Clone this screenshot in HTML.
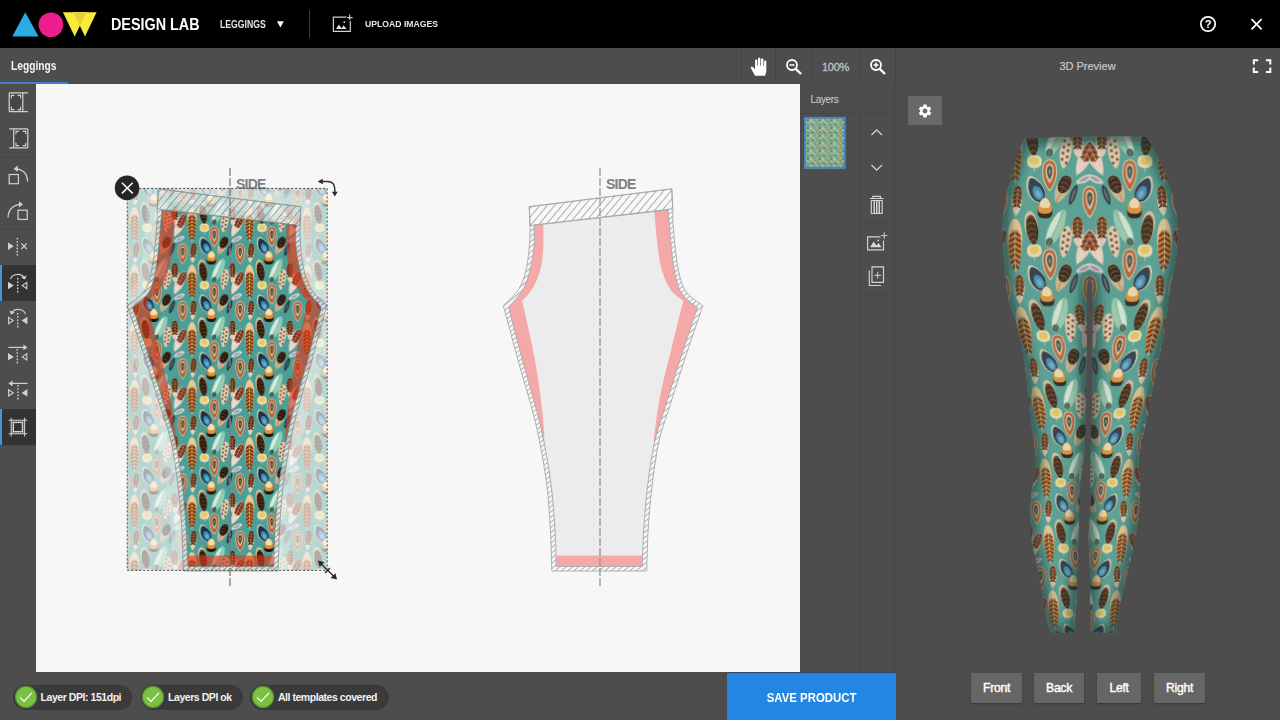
<!DOCTYPE html>
<html lang="en"><head><meta charset="utf-8"><title>Design Lab - Leggings</title>
<style>
*{box-sizing:border-box;margin:0;padding:0}
html,body{width:1280px;height:720px;overflow:hidden;background:#4d4d4d;font-family:"Liberation Sans",sans-serif;color:#fff}
.abs{position:absolute}
.sx{transform-origin:0 50%}
#top{left:0;top:0;width:1280px;height:48px;background:#000}
#tabs{left:0;top:48px;width:1280px;height:36px;background:#4d4d4d}
#tab1{left:0;top:0;width:68px;height:36px;font-size:12px;font-weight:bold;line-height:37px;padding-left:11px;color:#f4f4f4}
#tab1 span{display:inline-block;transform:scaleX(.853);transform-origin:0 50%}
#tab1 b{position:absolute;left:0;top:33.5px;width:68px;height:2.5px;background:#3b82c8}
#tools{left:0;top:84px;width:36px;height:588px;background:#4d4d4d}
.tb{position:absolute;left:0;width:36px;height:36px}
.tb.sel{background:#333;border-left:2px solid #4596dc}
.tb svg{position:absolute;left:0;top:0}
#canvas{left:36px;top:84px;width:764px;height:588px;background:#f7f7f7}
#layers{left:800px;top:84px;width:95px;height:588px;background:#4d4d4d;border-right:1px solid #434343}
#p3d{left:895px;top:84px;width:385px;height:636px;background:#4d4d4d}
#bottom{left:0;top:672px;width:896px;height:48px;background:transparent;z-index:3}
.pill{position:absolute;top:12.8px;height:25px;border-radius:12.5px;background:#3a3a3a;font-size:10.5px;font-weight:bold;line-height:25.4px;padding-left:27.6px;letter-spacing:-.45px;color:#f2f2f2;white-space:nowrap}
.pill i{position:absolute;left:1.5px;top:1.5px;width:22px;height:22px;border-radius:11px;background:#7ac143;box-shadow:inset 0 0 0 1px rgba(60,110,30,.55)}
.pill svg{position:absolute;left:1.5px;top:1.5px}
#save{left:726.7px;top:.6px;width:169.3px;height:47.4px;background:#2286e2;font-size:12.6px;font-weight:bold;text-align:center;line-height:50.8px;color:#fff;z-index:3;box-shadow:0 -1px 0 rgba(20,60,110,.35)}
#save span{display:inline-block;transform:scaleX(.904)}
.vb{position:absolute;top:588.5px;height:30px;background:#666;font-size:12.2px;line-height:31px;text-align:center;color:#fff;letter-spacing:-.3px;-webkit-text-stroke:.4px #fff;box-shadow:0 1px 1.5px rgba(0,0,0,.3)}
.tsep{position:absolute;top:0;width:1px;height:36px;background:#454545}
</style></head><body>
<svg width="0" height="0" style="position:absolute"><defs>
<g id="tileg"><rect width="345" height="345" fill="#4b9f96"/><g transform="translate(-11,73) rotate(0)"><path d="M0,-62.0 C22.9,-62.0 28.6,-39.7 28.6,-12.4 C28.6,28.5 2.9,62.0 0,62.0 C-2.9,62.0 -28.6,28.5 -28.6,-12.4 C-28.6,-39.7 -22.9,-62.0 0,-62.0Z" fill="#dcc7a6"/><path d="M0,-55.8 C19.7,-55.8 24.6,-35.7 24.6,-11.2 C24.6,25.7 2.5,55.8 0,55.8 C-2.5,55.8 -24.6,25.7 -24.6,-11.2 C-24.6,-35.7 -19.7,-55.8 0,-55.8Z" fill="#b55c30" transform="translate(0,-1.2)"/><path d="M0,-38.4 C12.8,-38.4 16.0,-24.6 16.0,-7.7 C16.0,17.7 1.6,38.4 0,38.4 C-1.6,38.4 -16.0,17.7 -16.0,-7.7 C-16.0,-24.6 -12.8,-38.4 0,-38.4Z" fill="#dcbf98" transform="translate(0,-7.4)"/><path d="M0,-26.0 C8.2,-26.0 10.3,-16.7 10.3,-5.2 C10.3,12.0 1.0,26.0 0,26.0 C-1.0,26.0 -10.3,12.0 -10.3,-5.2 C-10.3,-16.7 -8.2,-26.0 0,-26.0Z" fill="#2c4f55" transform="translate(0,-11.2)"/><path d="M0,-11.2 C3.0,-11.2 3.7,-7.1 3.7,-2.2 C3.7,5.1 0.4,11.2 0,11.2 C-0.4,11.2 -3.7,5.1 -3.7,-2.2 C-3.7,-7.1 -3.0,-11.2 0,-11.2Z" fill="#c9783c" transform="translate(0,-12.4)"/></g><g transform="translate(-11,418) rotate(0)"><path d="M0,-62.0 C22.9,-62.0 28.6,-39.7 28.6,-12.4 C28.6,28.5 2.9,62.0 0,62.0 C-2.9,62.0 -28.6,28.5 -28.6,-12.4 C-28.6,-39.7 -22.9,-62.0 0,-62.0Z" fill="#dcc7a6"/><path d="M0,-55.8 C19.7,-55.8 24.6,-35.7 24.6,-11.2 C24.6,25.7 2.5,55.8 0,55.8 C-2.5,55.8 -24.6,25.7 -24.6,-11.2 C-24.6,-35.7 -19.7,-55.8 0,-55.8Z" fill="#b55c30" transform="translate(0,-1.2)"/><path d="M0,-38.4 C12.8,-38.4 16.0,-24.6 16.0,-7.7 C16.0,17.7 1.6,38.4 0,38.4 C-1.6,38.4 -16.0,17.7 -16.0,-7.7 C-16.0,-24.6 -12.8,-38.4 0,-38.4Z" fill="#dcbf98" transform="translate(0,-7.4)"/><path d="M0,-26.0 C8.2,-26.0 10.3,-16.7 10.3,-5.2 C10.3,12.0 1.0,26.0 0,26.0 C-1.0,26.0 -10.3,12.0 -10.3,-5.2 C-10.3,-16.7 -8.2,-26.0 0,-26.0Z" fill="#2c4f55" transform="translate(0,-11.2)"/><path d="M0,-11.2 C3.0,-11.2 3.7,-7.1 3.7,-2.2 C3.7,5.1 0.4,11.2 0,11.2 C-0.4,11.2 -3.7,5.1 -3.7,-2.2 C-3.7,-7.1 -3.0,-11.2 0,-11.2Z" fill="#c9783c" transform="translate(0,-12.4)"/></g><g transform="translate(334,73) rotate(0)"><path d="M0,-62.0 C22.9,-62.0 28.6,-39.7 28.6,-12.4 C28.6,28.5 2.9,62.0 0,62.0 C-2.9,62.0 -28.6,28.5 -28.6,-12.4 C-28.6,-39.7 -22.9,-62.0 0,-62.0Z" fill="#dcc7a6"/><path d="M0,-55.8 C19.7,-55.8 24.6,-35.7 24.6,-11.2 C24.6,25.7 2.5,55.8 0,55.8 C-2.5,55.8 -24.6,25.7 -24.6,-11.2 C-24.6,-35.7 -19.7,-55.8 0,-55.8Z" fill="#b55c30" transform="translate(0,-1.2)"/><path d="M0,-38.4 C12.8,-38.4 16.0,-24.6 16.0,-7.7 C16.0,17.7 1.6,38.4 0,38.4 C-1.6,38.4 -16.0,17.7 -16.0,-7.7 C-16.0,-24.6 -12.8,-38.4 0,-38.4Z" fill="#dcbf98" transform="translate(0,-7.4)"/><path d="M0,-26.0 C8.2,-26.0 10.3,-16.7 10.3,-5.2 C10.3,12.0 1.0,26.0 0,26.0 C-1.0,26.0 -10.3,12.0 -10.3,-5.2 C-10.3,-16.7 -8.2,-26.0 0,-26.0Z" fill="#2c4f55" transform="translate(0,-11.2)"/><path d="M0,-11.2 C3.0,-11.2 3.7,-7.1 3.7,-2.2 C3.7,5.1 0.4,11.2 0,11.2 C-0.4,11.2 -3.7,5.1 -3.7,-2.2 C-3.7,-7.1 -3.0,-11.2 0,-11.2Z" fill="#c9783c" transform="translate(0,-12.4)"/></g><g transform="translate(334,418) rotate(0)"><path d="M0,-62.0 C22.9,-62.0 28.6,-39.7 28.6,-12.4 C28.6,28.5 2.9,62.0 0,62.0 C-2.9,62.0 -28.6,28.5 -28.6,-12.4 C-28.6,-39.7 -22.9,-62.0 0,-62.0Z" fill="#dcc7a6"/><path d="M0,-55.8 C19.7,-55.8 24.6,-35.7 24.6,-11.2 C24.6,25.7 2.5,55.8 0,55.8 C-2.5,55.8 -24.6,25.7 -24.6,-11.2 C-24.6,-35.7 -19.7,-55.8 0,-55.8Z" fill="#b55c30" transform="translate(0,-1.2)"/><path d="M0,-38.4 C12.8,-38.4 16.0,-24.6 16.0,-7.7 C16.0,17.7 1.6,38.4 0,38.4 C-1.6,38.4 -16.0,17.7 -16.0,-7.7 C-16.0,-24.6 -12.8,-38.4 0,-38.4Z" fill="#dcbf98" transform="translate(0,-7.4)"/><path d="M0,-26.0 C8.2,-26.0 10.3,-16.7 10.3,-5.2 C10.3,12.0 1.0,26.0 0,26.0 C-1.0,26.0 -10.3,12.0 -10.3,-5.2 C-10.3,-16.7 -8.2,-26.0 0,-26.0Z" fill="#2c4f55" transform="translate(0,-11.2)"/><path d="M0,-11.2 C3.0,-11.2 3.7,-7.1 3.7,-2.2 C3.7,5.1 0.4,11.2 0,11.2 C-0.4,11.2 -3.7,5.1 -3.7,-2.2 C-3.7,-7.1 -3.0,-11.2 0,-11.2Z" fill="#c9783c" transform="translate(0,-12.4)"/></g><g transform="translate(53,67) rotate(5)"><path d="M0,-58.8 C9.9,-58.8 19.8,-35.0 19.8,-5.9 C19.8,29.7 5.9,58.8 0,58.8 C-5.9,58.8 -19.8,29.7 -19.8,-5.9 C-19.8,-35.0 -9.9,-58.8 0,-58.8Z" fill="#e2d2bc"/><path d="M0,-42.4 C10.9,-42.4 18.2,-25.2 18.2,-4.2 C18.2,21.4 9.1,42.4 0,42.4 C-9.1,42.4 -18.2,21.4 -18.2,-4.2 C-18.2,-25.2 -10.9,-42.4 0,-42.4Z" fill="#8d4a22" transform="translate(0,-15.3)"/><path d="M-9.4,-42.1 L0,-52.1 L9.4,-42.1 M-13.5,-25.0 L0,-35.0 L13.5,-25.0 M-15.3,-7.9 L0,-17.9 L15.3,-7.9 M-15.6,9.1 L0,-0.9 L15.6,9.1 M-14.6,26.2 L0,16.2 L14.6,26.2" stroke="#331b0e" stroke-width="6" fill="none"/><path d="M0,-47.1V63.8" stroke="#d9c2a4" stroke-width="2"/></g><g transform="translate(53,412) rotate(5)"><path d="M0,-58.8 C9.9,-58.8 19.8,-35.0 19.8,-5.9 C19.8,29.7 5.9,58.8 0,58.8 C-5.9,58.8 -19.8,29.7 -19.8,-5.9 C-19.8,-35.0 -9.9,-58.8 0,-58.8Z" fill="#e2d2bc"/><path d="M0,-42.4 C10.9,-42.4 18.2,-25.2 18.2,-4.2 C18.2,21.4 9.1,42.4 0,42.4 C-9.1,42.4 -18.2,21.4 -18.2,-4.2 C-18.2,-25.2 -10.9,-42.4 0,-42.4Z" fill="#8d4a22" transform="translate(0,-15.3)"/><path d="M-9.4,-42.1 L0,-52.1 L9.4,-42.1 M-13.5,-25.0 L0,-35.0 L13.5,-25.0 M-15.3,-7.9 L0,-17.9 L15.3,-7.9 M-15.6,9.1 L0,-0.9 L15.6,9.1 M-14.6,26.2 L0,16.2 L14.6,26.2" stroke="#331b0e" stroke-width="6" fill="none"/><path d="M0,-47.1V63.8" stroke="#d9c2a4" stroke-width="2"/></g><g transform="translate(398,67) rotate(5)"><path d="M0,-58.8 C9.9,-58.8 19.8,-35.0 19.8,-5.9 C19.8,29.7 5.9,58.8 0,58.8 C-5.9,58.8 -19.8,29.7 -19.8,-5.9 C-19.8,-35.0 -9.9,-58.8 0,-58.8Z" fill="#e2d2bc"/><path d="M0,-42.4 C10.9,-42.4 18.2,-25.2 18.2,-4.2 C18.2,21.4 9.1,42.4 0,42.4 C-9.1,42.4 -18.2,21.4 -18.2,-4.2 C-18.2,-25.2 -10.9,-42.4 0,-42.4Z" fill="#8d4a22" transform="translate(0,-15.3)"/><path d="M-9.4,-42.1 L0,-52.1 L9.4,-42.1 M-13.5,-25.0 L0,-35.0 L13.5,-25.0 M-15.3,-7.9 L0,-17.9 L15.3,-7.9 M-15.6,9.1 L0,-0.9 L15.6,9.1 M-14.6,26.2 L0,16.2 L14.6,26.2" stroke="#331b0e" stroke-width="6" fill="none"/><path d="M0,-47.1V63.8" stroke="#d9c2a4" stroke-width="2"/></g><g transform="translate(398,412) rotate(5)"><path d="M0,-58.8 C9.9,-58.8 19.8,-35.0 19.8,-5.9 C19.8,29.7 5.9,58.8 0,58.8 C-5.9,58.8 -19.8,29.7 -19.8,-5.9 C-19.8,-35.0 -9.9,-58.8 0,-58.8Z" fill="#e2d2bc"/><path d="M0,-42.4 C10.9,-42.4 18.2,-25.2 18.2,-4.2 C18.2,21.4 9.1,42.4 0,42.4 C-9.1,42.4 -18.2,21.4 -18.2,-4.2 C-18.2,-25.2 -10.9,-42.4 0,-42.4Z" fill="#8d4a22" transform="translate(0,-15.3)"/><path d="M-9.4,-42.1 L0,-52.1 L9.4,-42.1 M-13.5,-25.0 L0,-35.0 L13.5,-25.0 M-15.3,-7.9 L0,-17.9 L15.3,-7.9 M-15.6,9.1 L0,-0.9 L15.6,9.1 M-14.6,26.2 L0,16.2 L14.6,26.2" stroke="#331b0e" stroke-width="6" fill="none"/><path d="M0,-47.1V63.8" stroke="#d9c2a4" stroke-width="2"/></g><g transform="translate(123,23) rotate(-25)"><path d="M0,-55.1 C9.6,-55.1 31.9,-26.6 31.9,8.3 C31.9,34.0 16.0,55.1 0,55.1 C-16.0,55.1 -31.9,34.0 -31.9,8.3 C-31.9,-26.6 -9.6,-55.1 0,-55.1Z" fill="#d6cfbc"/><path d="M0,-49.6 C8.6,-49.6 28.7,-23.9 28.7,7.4 C28.7,30.6 14.4,49.6 0,49.6 C-14.4,49.6 -28.7,30.6 -28.7,7.4 C-28.7,-23.9 -8.6,-49.6 0,-49.6Z" fill="#1b3142" transform="translate(1.9,4.4)"/><path d="M0,-28.7 C9.3,-28.7 18.5,-14.5 18.5,2.9 C18.5,17.1 11.1,28.7 0,28.7 C-11.1,28.7 -18.5,17.1 -18.5,2.9 C-18.5,-14.5 -9.3,-28.7 0,-28.7Z" fill="#3a86b9" transform="translate(2.6,17.6)"/><path d="M0,-15.4 C4.8,-15.4 9.6,-7.8 9.6,1.5 C9.6,9.2 5.7,15.4 0,15.4 C-5.7,15.4 -9.6,9.2 -9.6,1.5 C-9.6,-7.8 -4.8,-15.4 0,-15.4Z" fill="#5fb0c8" transform="translate(2.6,22.0)"/></g><g transform="translate(123,368) rotate(-25)"><path d="M0,-55.1 C9.6,-55.1 31.9,-26.6 31.9,8.3 C31.9,34.0 16.0,55.1 0,55.1 C-16.0,55.1 -31.9,34.0 -31.9,8.3 C-31.9,-26.6 -9.6,-55.1 0,-55.1Z" fill="#d6cfbc"/><path d="M0,-49.6 C8.6,-49.6 28.7,-23.9 28.7,7.4 C28.7,30.6 14.4,49.6 0,49.6 C-14.4,49.6 -28.7,30.6 -28.7,7.4 C-28.7,-23.9 -8.6,-49.6 0,-49.6Z" fill="#1b3142" transform="translate(1.9,4.4)"/><path d="M0,-28.7 C9.3,-28.7 18.5,-14.5 18.5,2.9 C18.5,17.1 11.1,28.7 0,28.7 C-11.1,28.7 -18.5,17.1 -18.5,2.9 C-18.5,-14.5 -9.3,-28.7 0,-28.7Z" fill="#3a86b9" transform="translate(2.6,17.6)"/><path d="M0,-15.4 C4.8,-15.4 9.6,-7.8 9.6,1.5 C9.6,9.2 5.7,15.4 0,15.4 C-5.7,15.4 -9.6,9.2 -9.6,1.5 C-9.6,-7.8 -4.8,-15.4 0,-15.4Z" fill="#5fb0c8" transform="translate(2.6,22.0)"/></g><g transform="translate(179,-30) rotate(0)"><path d="M0,-62.0 C22.9,-62.0 28.6,-39.7 28.6,-12.4 C28.6,28.5 2.9,62.0 0,62.0 C-2.9,62.0 -28.6,28.5 -28.6,-12.4 C-28.6,-39.7 -22.9,-62.0 0,-62.0Z" fill="#dcc7a6"/><path d="M0,-55.8 C19.7,-55.8 24.6,-35.7 24.6,-11.2 C24.6,25.7 2.5,55.8 0,55.8 C-2.5,55.8 -24.6,25.7 -24.6,-11.2 C-24.6,-35.7 -19.7,-55.8 0,-55.8Z" fill="#b55c30" transform="translate(0,-1.2)"/><path d="M0,-38.4 C12.8,-38.4 16.0,-24.6 16.0,-7.7 C16.0,17.7 1.6,38.4 0,38.4 C-1.6,38.4 -16.0,17.7 -16.0,-7.7 C-16.0,-24.6 -12.8,-38.4 0,-38.4Z" fill="#dcbf98" transform="translate(0,-7.4)"/><path d="M0,-26.0 C8.2,-26.0 10.3,-16.7 10.3,-5.2 C10.3,12.0 1.0,26.0 0,26.0 C-1.0,26.0 -10.3,12.0 -10.3,-5.2 C-10.3,-16.7 -8.2,-26.0 0,-26.0Z" fill="#2c4f55" transform="translate(0,-11.2)"/><path d="M0,-11.2 C3.0,-11.2 3.7,-7.1 3.7,-2.2 C3.7,5.1 0.4,11.2 0,11.2 C-0.4,11.2 -3.7,5.1 -3.7,-2.2 C-3.7,-7.1 -3.0,-11.2 0,-11.2Z" fill="#c9783c" transform="translate(0,-12.4)"/></g><g transform="translate(179,315) rotate(0)"><path d="M0,-62.0 C22.9,-62.0 28.6,-39.7 28.6,-12.4 C28.6,28.5 2.9,62.0 0,62.0 C-2.9,62.0 -28.6,28.5 -28.6,-12.4 C-28.6,-39.7 -22.9,-62.0 0,-62.0Z" fill="#dcc7a6"/><path d="M0,-55.8 C19.7,-55.8 24.6,-35.7 24.6,-11.2 C24.6,25.7 2.5,55.8 0,55.8 C-2.5,55.8 -24.6,25.7 -24.6,-11.2 C-24.6,-35.7 -19.7,-55.8 0,-55.8Z" fill="#b55c30" transform="translate(0,-1.2)"/><path d="M0,-38.4 C12.8,-38.4 16.0,-24.6 16.0,-7.7 C16.0,17.7 1.6,38.4 0,38.4 C-1.6,38.4 -16.0,17.7 -16.0,-7.7 C-16.0,-24.6 -12.8,-38.4 0,-38.4Z" fill="#dcbf98" transform="translate(0,-7.4)"/><path d="M0,-26.0 C8.2,-26.0 10.3,-16.7 10.3,-5.2 C10.3,12.0 1.0,26.0 0,26.0 C-1.0,26.0 -10.3,12.0 -10.3,-5.2 C-10.3,-16.7 -8.2,-26.0 0,-26.0Z" fill="#2c4f55" transform="translate(0,-11.2)"/><path d="M0,-11.2 C3.0,-11.2 3.7,-7.1 3.7,-2.2 C3.7,5.1 0.4,11.2 0,11.2 C-0.4,11.2 -3.7,5.1 -3.7,-2.2 C-3.7,-7.1 -3.0,-11.2 0,-11.2Z" fill="#c9783c" transform="translate(0,-12.4)"/></g><g transform="translate(228,23) rotate(25)"><path d="M0,-58.8 C15.5,-58.8 25.9,-35.0 25.9,-5.9 C25.9,29.7 5.2,58.8 0,58.8 C-5.2,58.8 -25.9,29.7 -25.9,-5.9 C-25.9,-35.0 -15.5,-58.8 0,-58.8Z" fill="#cfb58f"/><path d="M0,-36.5 C16.3,-36.5 23.3,-20.1 23.3,0.0 C23.3,20.1 14.0,36.5 0,36.5 C-14.0,36.5 -23.3,20.1 -23.3,0.0 C-23.3,-20.1 -16.3,-36.5 0,-36.5Z" fill="#24160f" transform="translate(0,-20.0)"/><path d="M-11.8,-40.7 L0,-48.7 L11.8,-40.7 M-16.4,-21.3 L0,-29.3 L16.4,-21.3 M-18.1,-1.9 L0,-9.9 L18.1,-1.9" stroke="#6a4526" stroke-width="4" fill="none"/><path d="M0,-11.8V63.8" stroke="#8a6a4a" stroke-width="2"/></g><g transform="translate(228,368) rotate(25)"><path d="M0,-58.8 C15.5,-58.8 25.9,-35.0 25.9,-5.9 C25.9,29.7 5.2,58.8 0,58.8 C-5.2,58.8 -25.9,29.7 -25.9,-5.9 C-25.9,-35.0 -15.5,-58.8 0,-58.8Z" fill="#cfb58f"/><path d="M0,-36.5 C16.3,-36.5 23.3,-20.1 23.3,0.0 C23.3,20.1 14.0,36.5 0,36.5 C-14.0,36.5 -23.3,20.1 -23.3,0.0 C-23.3,-20.1 -16.3,-36.5 0,-36.5Z" fill="#24160f" transform="translate(0,-20.0)"/><path d="M-11.8,-40.7 L0,-48.7 L11.8,-40.7 M-16.4,-21.3 L0,-29.3 L16.4,-21.3 M-18.1,-1.9 L0,-9.9 L18.1,-1.9" stroke="#6a4526" stroke-width="4" fill="none"/><path d="M0,-11.8V63.8" stroke="#8a6a4a" stroke-width="2"/></g><g transform="translate(161,96) rotate(0)"><path d="M0,-40.3 C7.2,-40.3 28.6,-16.7 28.6,12.1 C28.6,27.6 25.7,40.3 0,40.3 C-25.7,40.3 -28.6,27.6 -28.6,12.1 C-28.6,-16.7 -7.2,-40.3 0,-40.3Z" fill="#1c120b"/><path d="M0,-31.4 C6.9,-31.4 27.5,-12.3 27.5,11.0 C27.5,22.2 24.7,31.4 0,31.4 C-24.7,31.4 -27.5,22.2 -27.5,11.0 C-27.5,-12.3 -6.9,-31.4 0,-31.4Z" fill="#dc9136" transform="translate(0,-8.9)"/><path d="M0,-20.1 C5.0,-20.1 20.0,-7.9 20.0,7.0 C20.0,14.2 18.0,20.1 0,20.1 C-18.0,20.1 -20.0,14.2 -20.0,7.0 C-20.0,-7.9 -5.0,-20.1 0,-20.1Z" fill="#f2dfb0" transform="translate(0,-19.3)"/></g><g transform="translate(-32,-15) rotate(65)"><path d="M0,-35.0 C6.6,-35.0 13.2,-19.2 13.2,0.0 C13.2,19.2 4.0,35.0 0,35.0 C-4.0,35.0 -13.2,19.2 -13.2,0.0 C-13.2,-19.2 -6.6,-35.0 0,-35.0Z" fill="#dcd6d6"/><path d="M0,-21.0 C3.3,-21.0 6.6,-11.5 6.6,0.0 C6.6,11.5 2.0,21.0 0,21.0 C-2.0,21.0 -6.6,11.5 -6.6,0.0 C-6.6,-11.5 -3.3,-21.0 0,-21.0Z" fill="#a79aa6"/></g><g transform="translate(-32,330) rotate(65)"><path d="M0,-35.0 C6.6,-35.0 13.2,-19.2 13.2,0.0 C13.2,19.2 4.0,35.0 0,35.0 C-4.0,35.0 -13.2,19.2 -13.2,0.0 C-13.2,-19.2 -6.6,-35.0 0,-35.0Z" fill="#dcd6d6"/><path d="M0,-21.0 C3.3,-21.0 6.6,-11.5 6.6,0.0 C6.6,11.5 2.0,21.0 0,21.0 C-2.0,21.0 -6.6,11.5 -6.6,0.0 C-6.6,-11.5 -3.3,-21.0 0,-21.0Z" fill="#a79aa6"/></g><g transform="translate(313,-15) rotate(65)"><path d="M0,-35.0 C6.6,-35.0 13.2,-19.2 13.2,0.0 C13.2,19.2 4.0,35.0 0,35.0 C-4.0,35.0 -13.2,19.2 -13.2,0.0 C-13.2,-19.2 -6.6,-35.0 0,-35.0Z" fill="#dcd6d6"/><path d="M0,-21.0 C3.3,-21.0 6.6,-11.5 6.6,0.0 C6.6,11.5 2.0,21.0 0,21.0 C-2.0,21.0 -6.6,11.5 -6.6,0.0 C-6.6,-11.5 -3.3,-21.0 0,-21.0Z" fill="#a79aa6"/></g><g transform="translate(313,330) rotate(65)"><path d="M0,-35.0 C6.6,-35.0 13.2,-19.2 13.2,0.0 C13.2,19.2 4.0,35.0 0,35.0 C-4.0,35.0 -13.2,19.2 -13.2,0.0 C-13.2,-19.2 -6.6,-35.0 0,-35.0Z" fill="#dcd6d6"/><path d="M0,-21.0 C3.3,-21.0 6.6,-11.5 6.6,0.0 C6.6,11.5 2.0,21.0 0,21.0 C-2.0,21.0 -6.6,11.5 -6.6,0.0 C-6.6,-11.5 -3.3,-21.0 0,-21.0Z" fill="#a79aa6"/></g><g transform="translate(270,46) rotate(20)"><path d="M0,-41.3 C5.8,-41.3 11.6,-22.7 11.6,0.0 C11.6,22.7 3.5,41.3 0,41.3 C-3.5,41.3 -11.6,22.7 -11.6,0.0 C-11.6,-22.7 -5.8,-41.3 0,-41.3Z" fill="#222b36"/><path d="M0,-28.9 C2.3,-28.9 4.6,-15.9 4.6,0.0 C4.6,15.9 1.4,28.9 0,28.9 C-1.4,28.9 -4.6,15.9 -4.6,0.0 C-4.6,-15.9 -2.3,-28.9 0,-28.9Z" fill="#5a6470"/></g><g transform="translate(270,391) rotate(20)"><path d="M0,-41.3 C5.8,-41.3 11.6,-22.7 11.6,0.0 C11.6,22.7 3.5,41.3 0,41.3 C-3.5,41.3 -11.6,22.7 -11.6,0.0 C-11.6,-22.7 -5.8,-41.3 0,-41.3Z" fill="#222b36"/><path d="M0,-28.9 C2.3,-28.9 4.6,-15.9 4.6,0.0 C4.6,15.9 1.4,28.9 0,28.9 C-1.4,28.9 -4.6,15.9 -4.6,0.0 C-4.6,-15.9 -2.3,-28.9 0,-28.9Z" fill="#5a6470"/></g><g transform="translate(109,175) rotate(-8)"><path d="M0,-67.8 C15.5,-67.8 25.9,-40.4 25.9,-6.8 C25.9,34.3 5.2,67.8 0,67.8 C-5.2,67.8 -25.9,34.3 -25.9,-6.8 C-25.9,-40.4 -15.5,-67.8 0,-67.8Z" fill="#d4c0a0"/><path d="M0,-58.3 C13.6,-58.3 22.7,-32.1 22.7,0.0 C22.7,32.1 6.8,58.3 0,58.3 C-6.8,58.3 -22.7,32.1 -22.7,0.0 C-22.7,-32.1 -13.6,-58.3 0,-58.3Z" fill="#2d1b10" transform="translate(2.1,6.8)"/><path d="M-14.6,-35.7 L0,-45.7 L14.6,-35.7 M-17.5,-13.7 L0,-23.7 L17.5,-13.7 M-18.2,8.4 L0,-1.6 L18.2,8.4 M-16.9,30.4 L0,20.4 L16.9,30.4 M-13.0,52.5 L0,42.5 L13.0,52.5" stroke="#6b4424" stroke-width="5" fill="none"/></g><g transform="translate(202,175) rotate(25)"><path d="M0,-80.6 C11.0,-80.6 27.5,-44.3 27.5,0.0 C27.5,44.3 8.2,80.6 0,80.6 C-8.2,80.6 -27.5,44.3 -27.5,0.0 C-27.5,-44.3 -11.0,-80.6 0,-80.6Z" fill="#93cdb2"/><path d="M0,-66.1 C4.6,-66.1 11.6,-36.3 11.6,0.0 C11.6,36.3 3.5,66.1 0,66.1 C-3.5,66.1 -11.6,36.3 -11.6,0.0 C-11.6,-36.3 -4.6,-66.1 0,-66.1Z" fill="#d4ecdf" transform="translate(-11.0,0)"/><path d="M0,-17.7 C6.9,-17.7 13.8,-9.7 13.8,0.0 C13.8,9.7 4.1,17.7 0,17.7 C-4.1,17.7 -13.8,9.7 -13.8,0.0 C-13.8,-9.7 -6.9,-17.7 0,-17.7Z" fill="#3f5a48" transform="translate(0,58.0)"/><path d="M0,-80.6V86.6" stroke="#5f9580" stroke-width="2"/></g><g transform="translate(45,-106) rotate(0)"><path d="M0,-101.8 C14.3,-101.8 28.6,-67.4 28.6,-25.4 C28.6,44.5 7.2,101.8 0,101.8 C-7.2,101.8 -28.6,44.5 -28.6,-25.4 C-28.6,-67.4 -14.3,-101.8 0,-101.8Z" fill="#e6c993"/><path d="M0,-79.4 C18.0,-79.4 25.7,-50.8 25.7,-15.9 C25.7,36.5 6.4,79.4 0,79.4 C-6.4,79.4 -25.7,36.5 -25.7,-15.9 C-25.7,-50.8 -18.0,-79.4 0,-79.4Z" fill="#c8722c" transform="translate(0,20.4)"/><path d="M-20.8,-33.7 L0,-47.7 L20.8,-33.7 M-22.2,-12.7 L0,-26.7 L22.2,-12.7 M-22.6,8.4 L0,-5.6 L22.6,8.4 M-22.1,29.4 L0,15.4 L22.1,29.4 M-20.5,50.4 L0,36.4 L20.5,50.4 M-17.5,71.4 L0,57.4 L17.5,71.4 M-12.3,92.5 L0,78.5 L12.3,92.5" stroke="#43220e" stroke-width="7" fill="none"/><path d="M0,-91.6V107.8" stroke="#f3e2c2" stroke-width="2.5"/></g><g transform="translate(45,239) rotate(0)"><path d="M0,-101.8 C14.3,-101.8 28.6,-67.4 28.6,-25.4 C28.6,44.5 7.2,101.8 0,101.8 C-7.2,101.8 -28.6,44.5 -28.6,-25.4 C-28.6,-67.4 -14.3,-101.8 0,-101.8Z" fill="#e6c993"/><path d="M0,-79.4 C18.0,-79.4 25.7,-50.8 25.7,-15.9 C25.7,36.5 6.4,79.4 0,79.4 C-6.4,79.4 -25.7,36.5 -25.7,-15.9 C-25.7,-50.8 -18.0,-79.4 0,-79.4Z" fill="#c8722c" transform="translate(0,20.4)"/><path d="M-20.8,-33.7 L0,-47.7 L20.8,-33.7 M-22.2,-12.7 L0,-26.7 L22.2,-12.7 M-22.6,8.4 L0,-5.6 L22.6,8.4 M-22.1,29.4 L0,15.4 L22.1,29.4 M-20.5,50.4 L0,36.4 L20.5,50.4 M-17.5,71.4 L0,57.4 L17.5,71.4 M-12.3,92.5 L0,78.5 L12.3,92.5" stroke="#43220e" stroke-width="7" fill="none"/><path d="M0,-91.6V107.8" stroke="#f3e2c2" stroke-width="2.5"/></g><g transform="translate(390,-106) rotate(0)"><path d="M0,-101.8 C14.3,-101.8 28.6,-67.4 28.6,-25.4 C28.6,44.5 7.2,101.8 0,101.8 C-7.2,101.8 -28.6,44.5 -28.6,-25.4 C-28.6,-67.4 -14.3,-101.8 0,-101.8Z" fill="#e6c993"/><path d="M0,-79.4 C18.0,-79.4 25.7,-50.8 25.7,-15.9 C25.7,36.5 6.4,79.4 0,79.4 C-6.4,79.4 -25.7,36.5 -25.7,-15.9 C-25.7,-50.8 -18.0,-79.4 0,-79.4Z" fill="#c8722c" transform="translate(0,20.4)"/><path d="M-20.8,-33.7 L0,-47.7 L20.8,-33.7 M-22.2,-12.7 L0,-26.7 L22.2,-12.7 M-22.6,8.4 L0,-5.6 L22.6,8.4 M-22.1,29.4 L0,15.4 L22.1,29.4 M-20.5,50.4 L0,36.4 L20.5,50.4 M-17.5,71.4 L0,57.4 L17.5,71.4 M-12.3,92.5 L0,78.5 L12.3,92.5" stroke="#43220e" stroke-width="7" fill="none"/><path d="M0,-91.6V107.8" stroke="#f3e2c2" stroke-width="2.5"/></g><g transform="translate(390,239) rotate(0)"><path d="M0,-101.8 C14.3,-101.8 28.6,-67.4 28.6,-25.4 C28.6,44.5 7.2,101.8 0,101.8 C-7.2,101.8 -28.6,44.5 -28.6,-25.4 C-28.6,-67.4 -14.3,-101.8 0,-101.8Z" fill="#e6c993"/><path d="M0,-79.4 C18.0,-79.4 25.7,-50.8 25.7,-15.9 C25.7,36.5 6.4,79.4 0,79.4 C-6.4,79.4 -25.7,36.5 -25.7,-15.9 C-25.7,-50.8 -18.0,-79.4 0,-79.4Z" fill="#c8722c" transform="translate(0,20.4)"/><path d="M-20.8,-33.7 L0,-47.7 L20.8,-33.7 M-22.2,-12.7 L0,-26.7 L22.2,-12.7 M-22.6,8.4 L0,-5.6 L22.6,8.4 M-22.1,29.4 L0,15.4 L22.1,29.4 M-20.5,50.4 L0,36.4 L20.5,50.4 M-17.5,71.4 L0,57.4 L17.5,71.4 M-12.3,92.5 L0,78.5 L12.3,92.5" stroke="#43220e" stroke-width="7" fill="none"/><path d="M0,-91.6V107.8" stroke="#f3e2c2" stroke-width="2.5"/></g><g transform="translate(-58,186) rotate(0)"><path d="M0,-58.8 C11.3,-58.8 22.6,-35.0 22.6,-5.9 C22.6,29.7 6.8,58.8 0,58.8 C-6.8,58.8 -22.6,29.7 -22.6,-5.9 C-22.6,-35.0 -11.3,-58.8 0,-58.8Z" fill="#e2d2bc"/><path d="M0,-42.4 C12.4,-42.4 20.7,-25.2 20.7,-4.2 C20.7,21.4 10.4,42.4 0,42.4 C-10.4,42.4 -20.7,21.4 -20.7,-4.2 C-20.7,-25.2 -12.4,-42.4 0,-42.4Z" fill="#8d4a22" transform="translate(0,-15.3)"/><path d="M-10.7,-42.1 L0,-52.1 L10.7,-42.1 M-15.4,-25.0 L0,-35.0 L15.4,-25.0 M-17.4,-7.9 L0,-17.9 L17.4,-7.9 M-17.8,9.1 L0,-0.9 L17.8,9.1 M-16.7,26.2 L0,16.2 L16.7,26.2" stroke="#331b0e" stroke-width="6" fill="none"/><path d="M0,-47.1V63.8" stroke="#d9c2a4" stroke-width="2"/></g><g transform="translate(287,186) rotate(0)"><path d="M0,-58.8 C11.3,-58.8 22.6,-35.0 22.6,-5.9 C22.6,29.7 6.8,58.8 0,58.8 C-6.8,58.8 -22.6,29.7 -22.6,-5.9 C-22.6,-35.0 -11.3,-58.8 0,-58.8Z" fill="#e2d2bc"/><path d="M0,-42.4 C12.4,-42.4 20.7,-25.2 20.7,-4.2 C20.7,21.4 10.4,42.4 0,42.4 C-10.4,42.4 -20.7,21.4 -20.7,-4.2 C-20.7,-25.2 -12.4,-42.4 0,-42.4Z" fill="#8d4a22" transform="translate(0,-15.3)"/><path d="M-10.7,-42.1 L0,-52.1 L10.7,-42.1 M-15.4,-25.0 L0,-35.0 L15.4,-25.0 M-17.4,-7.9 L0,-17.9 L17.4,-7.9 M-17.8,9.1 L0,-0.9 L17.8,9.1 M-16.7,26.2 L0,16.2 L16.7,26.2" stroke="#331b0e" stroke-width="6" fill="none"/><path d="M0,-47.1V63.8" stroke="#d9c2a4" stroke-width="2"/></g><g transform="translate(-29,245) rotate(25)"><path d="M0,-74.2 C12.9,-74.2 25.9,-44.1 25.9,-7.4 C25.9,37.5 5.2,74.2 0,74.2 C-5.2,74.2 -25.9,37.5 -25.9,-7.4 C-25.9,-44.1 -12.9,-74.2 0,-74.2Z" fill="#e8d6c8"/><path d="M0,-44.5 C12.4,-44.5 20.7,-24.5 20.7,0.0 C20.7,24.5 10.3,44.5 0,44.5 C-10.3,44.5 -20.7,24.5 -20.7,0.0 C-20.7,-24.5 -12.4,-44.5 0,-44.5Z" fill="#9a4425" transform="translate(2.6,-26.7)"/><path d="M-10.9,-54.4 L0,-64.4 L10.9,-54.4 M-15.5,-33.6 L0,-43.6 L15.5,-33.6 M-17.7,-12.8 L0,-22.8 L17.7,-12.8 M-18.2,8.0 L0,-2.0 L18.2,8.0" stroke="#3d1d10" stroke-width="5" fill="none"/><path d="M0,-66.8V79.2" stroke="#f8efe6" stroke-width="2"/></g><g transform="translate(316,245) rotate(25)"><path d="M0,-74.2 C12.9,-74.2 25.9,-44.1 25.9,-7.4 C25.9,37.5 5.2,74.2 0,74.2 C-5.2,74.2 -25.9,37.5 -25.9,-7.4 C-25.9,-44.1 -12.9,-74.2 0,-74.2Z" fill="#e8d6c8"/><path d="M0,-44.5 C12.4,-44.5 20.7,-24.5 20.7,0.0 C20.7,24.5 10.3,44.5 0,44.5 C-10.3,44.5 -20.7,24.5 -20.7,0.0 C-20.7,-24.5 -12.4,-44.5 0,-44.5Z" fill="#9a4425" transform="translate(2.6,-26.7)"/><path d="M-10.9,-54.4 L0,-64.4 L10.9,-54.4 M-15.5,-33.6 L0,-43.6 L15.5,-33.6 M-17.7,-12.8 L0,-22.8 L17.7,-12.8 M-18.2,8.0 L0,-2.0 L18.2,8.0" stroke="#3d1d10" stroke-width="5" fill="none"/><path d="M0,-66.8V79.2" stroke="#f8efe6" stroke-width="2"/></g><g transform="translate(240,227) rotate(8)"><path d="M0,-62.0 C13.5,-62.0 22.6,-36.9 22.6,-6.2 C22.6,31.3 6.8,62.0 0,62.0 C-6.8,62.0 -22.6,31.3 -22.6,-6.2 C-22.6,-36.9 -13.5,-62.0 0,-62.0Z" fill="#e0cfb6"/><g fill="#774526"><circle cx="-9.0" cy="-44.6" r="5.9"/><circle cx="9.0" cy="-32.6" r="5.9"/><circle cx="-9.0" cy="-20.6" r="5.9"/><circle cx="9.0" cy="-8.5" r="5.9"/><circle cx="-9.0" cy="3.5" r="5.9"/><circle cx="9.0" cy="15.6" r="5.9"/><circle cx="-9.0" cy="27.6" r="5.9"/><circle cx="9.0" cy="39.7" r="5.9"/></g></g><g transform="translate(120,262) rotate(0)"><path d="M0,-24.9 C25.7,-24.9 28.6,-12.6 28.6,2.5 C28.6,14.8 20.0,24.9 0,24.9 C-20.0,24.9 -28.6,14.8 -28.6,2.5 C-28.6,-12.6 -25.7,-24.9 0,-24.9Z" fill="#ecdfae"/><path d="M0,-14.9 C16.0,-14.9 17.7,-7.5 17.7,1.5 C17.7,8.9 12.4,14.9 0,14.9 C-12.4,14.9 -17.7,8.9 -17.7,1.5 C-17.7,-7.5 -16.0,-14.9 0,-14.9Z" fill="#e6c95f" transform="translate(0,-2.5)"/><path d="M0,14.9V38.9" stroke="#efe3c0" stroke-width="2.5"/></g></g>
<pattern id="feath" width="345" height="345" patternUnits="userSpaceOnUse" patternTransform="translate(127,184.2) scale(0.16667,0.16667)"><use href="#tileg"/></pattern>
<pattern id="feathT" width="345" height="345" patternUnits="userSpaceOnUse" patternTransform="translate(804,116.5) scale(0.034,0.02247)"><use href="#tileg"/></pattern>
<pattern id="h1" width="5.7" height="5.7" patternUnits="userSpaceOnUse" patternTransform="rotate(-50)"><rect width="5.7" height=".9" fill="#a6a6a6"/></pattern>
<pattern id="h2" width="4" height="4" patternUnits="userSpaceOnUse" patternTransform="rotate(-40)"><rect width="4" height=".9" fill="#a6a6a6"/></pattern>
<clipPath id="cInner"><path d="M68.2,210.0 C68.4,212.8 68.6,217.2 69.5,226.7 C70.4,236.1 71.6,255.6 73.6,266.7 C75.6,277.8 77.4,286.2 81.4,293.0 C85.4,299.8 94.7,305.2 97.4,307.6 C94.7,315.8 86.3,340.4 81.0,356.7 C75.7,373.0 69.9,391.7 65.6,405.6 C61.3,419.5 58.0,426.9 55.0,440.0 C52.0,453.1 49.7,469.2 47.8,484.0 C45.9,498.8 44.7,515.3 43.8,529.0 C42.9,542.7 42.5,560.2 42.2,566.4 L-43.8,566.4 C-44.0,560.2 -44.1,542.7 -45.0,529.0 C-45.9,515.3 -47.1,498.8 -49.0,484.0 C-50.9,469.2 -53.8,453.1 -56.4,440.0 C-59.0,426.9 -61.2,418.4 -64.6,405.6 C-68.0,392.8 -72.2,379.4 -76.7,363.0 C-81.2,346.6 -88.9,316.6 -91.3,307.3 C-88.9,304.2 -80.4,295.7 -76.7,289.0 C-73.0,282.3 -71.0,274.3 -69.2,267.0 C-67.4,259.7 -66.3,252.0 -65.8,245.0 C-65.3,238.0 -66.0,228.5 -66.0,225.2Z"/></clipPath>
<clipPath id="cOuter"><path d="M71.8,188.9 C72.0,192.2 72.5,205.5 72.7,208.8 C72.8,211.8 72.5,217.0 73.3,226.7 C74.1,236.3 75.8,256.0 77.8,266.7 C79.8,277.4 81.4,284.5 85.6,291.0 C89.8,297.5 100.0,303.2 102.9,305.6 C100.0,314.1 91.1,340.0 85.6,356.7 C80.1,373.4 74.4,391.7 70.0,405.6 C65.6,419.5 62.3,426.9 59.3,440.0 C56.3,453.1 54.1,469.6 52.2,484.4 C50.4,499.2 49.1,514.6 48.2,529.0 C47.3,543.4 47.0,564.0 46.7,571.0 L-48.2,571.0 C-48.4,564.0 -48.8,543.4 -49.6,529.0 C-50.5,514.6 -51.4,499.2 -53.3,484.4 C-55.1,469.6 -58.1,453.1 -60.7,440.0 C-63.3,426.9 -65.6,418.4 -69.0,405.6 C-72.4,392.8 -76.5,380.0 -81.1,363.3 C-85.7,346.6 -94.1,315.2 -96.7,305.6 C-94.1,302.8 -85.0,295.4 -81.1,288.9 C-77.2,282.4 -75.1,275.6 -73.3,266.7 C-71.5,257.8 -70.4,245.6 -70.0,235.6 C-69.6,225.6 -70.6,211.5 -70.7,206.7Z"/></clipPath>
<g id="garment">
 <path d="M71.8,188.9 C72.0,192.2 72.5,205.5 72.7,208.8 C72.8,211.8 72.5,217.0 73.3,226.7 C74.1,236.3 75.8,256.0 77.8,266.7 C79.8,277.4 81.4,284.5 85.6,291.0 C89.8,297.5 100.0,303.2 102.9,305.6 C100.0,314.1 91.1,340.0 85.6,356.7 C80.1,373.4 74.4,391.7 70.0,405.6 C65.6,419.5 62.3,426.9 59.3,440.0 C56.3,453.1 54.1,469.6 52.2,484.4 C50.4,499.2 49.1,514.6 48.2,529.0 C47.3,543.4 47.0,564.0 46.7,571.0 L-48.2,571.0 C-48.4,564.0 -48.8,543.4 -49.6,529.0 C-50.5,514.6 -51.4,499.2 -53.3,484.4 C-55.1,469.6 -58.1,453.1 -60.7,440.0 C-63.3,426.9 -65.6,418.4 -69.0,405.6 C-72.4,392.8 -76.5,380.0 -81.1,363.3 C-85.7,346.6 -94.1,315.2 -96.7,305.6 C-94.1,302.8 -85.0,295.4 -81.1,288.9 C-77.2,282.4 -75.1,275.6 -73.3,266.7 C-71.5,257.8 -70.4,245.6 -70.0,235.6 C-69.6,225.6 -70.6,211.5 -70.7,206.7Z" fill="#f8f8f8"/>
 <path d="M68.2,210.0 C68.4,212.8 68.6,217.2 69.5,226.7 C70.4,236.1 71.6,255.6 73.6,266.7 C75.6,277.8 77.4,286.2 81.4,293.0 C85.4,299.8 94.7,305.2 97.4,307.6 C94.7,315.8 86.3,340.4 81.0,356.7 C75.7,373.0 69.9,391.7 65.6,405.6 C61.3,419.5 58.0,426.9 55.0,440.0 C52.0,453.1 49.7,469.2 47.8,484.0 C45.9,498.8 44.7,515.3 43.8,529.0 C42.9,542.7 42.5,560.2 42.2,566.4 L-43.8,566.4 C-44.0,560.2 -44.1,542.7 -45.0,529.0 C-45.9,515.3 -47.1,498.8 -49.0,484.0 C-50.9,469.2 -53.8,453.1 -56.4,440.0 C-59.0,426.9 -61.2,418.4 -64.6,405.6 C-68.0,392.8 -72.2,379.4 -76.7,363.0 C-81.2,346.6 -88.9,316.6 -91.3,307.3 C-88.9,304.2 -80.4,295.7 -76.7,289.0 C-73.0,282.3 -71.0,274.3 -69.2,267.0 C-67.4,259.7 -66.3,252.0 -65.8,245.0 C-65.3,238.0 -66.0,228.5 -66.0,225.2Z" fill="#ececec"/>
</g>
<g id="gpink">
 <path d="M68.2,210.0 C68.4,212.8 68.6,217.2 69.5,226.7 C70.4,236.1 71.6,255.6 73.6,266.7 C75.6,277.8 77.4,286.2 81.4,293.0 C85.4,299.8 94.7,305.2 97.4,307.6 C94.7,315.8 86.3,340.4 81.0,356.7 C75.7,373.0 69.9,391.7 65.6,405.6 C61.3,419.5 56.8,434.3 55.0,440.0 L53.6,441.0 C54.7,433.6 56.9,412.6 60.0,396.7 C63.1,380.8 68.3,361.6 72.2,345.6 C76.1,329.7 81.5,308.4 83.3,301.0 C81.1,299.0 73.7,294.7 70.0,289.0 C66.3,283.3 63.2,275.2 61.0,266.7 C58.8,258.2 57.8,247.0 56.7,237.8 C55.6,228.6 54.8,216.0 54.4,211.6Z"/><path d="M-66.0,225.2 C-66.0,228.5 -65.3,238.0 -65.8,245.0 C-66.3,252.0 -67.4,259.7 -69.2,267.0 C-71.0,274.3 -73.0,282.3 -76.7,289.0 C-80.4,295.7 -88.9,304.2 -91.3,307.3 C-88.9,316.6 -81.2,346.6 -76.7,363.0 C-72.2,379.4 -68.0,392.8 -64.6,405.6 C-61.2,418.4 -57.8,434.3 -56.4,440.0 L-55.4,443.0 C-55.8,437.5 -56.1,424.4 -57.8,410.0 C-59.5,395.6 -62.3,374.9 -65.6,356.7 C-68.9,338.5 -75.8,310.3 -77.8,301.0 C-76.1,299.0 -70.8,294.0 -67.8,289.0 C-64.8,284.0 -61.9,277.7 -60.0,271.0 C-58.1,264.3 -57.2,256.8 -56.7,249.0 C-56.2,241.2 -56.7,228.3 -56.7,224.2Z"/><rect x="-43.8" y="555.6" width="86" height="10.8"/>
</g>
<g id="glines">
 <path d="M71.8,188.9 C72.0,192.2 72.5,205.5 72.7,208.8 C72.8,211.8 72.5,217.0 73.3,226.7 C74.1,236.3 75.8,256.0 77.8,266.7 C79.8,277.4 81.4,284.5 85.6,291.0 C89.8,297.5 100.0,303.2 102.9,305.6 C100.0,314.1 91.1,340.0 85.6,356.7 C80.1,373.4 74.4,391.7 70.0,405.6 C65.6,419.5 62.3,426.9 59.3,440.0 C56.3,453.1 54.1,469.6 52.2,484.4 C50.4,499.2 49.1,514.6 48.2,529.0 C47.3,543.4 47.0,564.0 46.7,571.0 L-48.2,571.0 C-48.4,564.0 -48.8,543.4 -49.6,529.0 C-50.5,514.6 -51.4,499.2 -53.3,484.4 C-55.1,469.6 -58.1,453.1 -60.7,440.0 C-63.3,426.9 -65.6,418.4 -69.0,405.6 C-72.4,392.8 -76.5,380.0 -81.1,363.3 C-85.7,346.6 -94.1,315.2 -96.7,305.6 C-94.1,302.8 -85.0,295.4 -81.1,288.9 C-77.2,282.4 -75.1,275.6 -73.3,266.7 C-71.5,257.8 -70.4,245.6 -70.0,235.6 C-69.6,225.6 -70.6,211.5 -70.7,206.7Z M68.2,210.0 C68.4,212.8 68.6,217.2 69.5,226.7 C70.4,236.1 71.6,255.6 73.6,266.7 C75.6,277.8 77.4,286.2 81.4,293.0 C85.4,299.8 94.7,305.2 97.4,307.6 C94.7,315.8 86.3,340.4 81.0,356.7 C75.7,373.0 69.9,391.7 65.6,405.6 C61.3,419.5 58.0,426.9 55.0,440.0 C52.0,453.1 49.7,469.2 47.8,484.0 C45.9,498.8 44.7,515.3 43.8,529.0 C42.9,542.7 42.5,560.2 42.2,566.4 L-43.8,566.4 C-44.0,560.2 -44.1,542.7 -45.0,529.0 C-45.9,515.3 -47.1,498.8 -49.0,484.0 C-50.9,469.2 -53.8,453.1 -56.4,440.0 C-59.0,426.9 -61.2,418.4 -64.6,405.6 C-68.0,392.8 -72.2,379.4 -76.7,363.0 C-81.2,346.6 -88.9,316.6 -91.3,307.3 C-88.9,304.2 -80.4,295.7 -76.7,289.0 C-73.0,282.3 -71.0,274.3 -69.2,267.0 C-67.4,259.7 -66.3,252.0 -65.8,245.0 C-65.3,238.0 -66.0,228.5 -66.0,225.2Z M-70.7,206.7 L71.8,188.9 L72.7,208.8 L-70.2,225.6Z" fill="url(#h2)" fill-rule="evenodd"/>
 <path d="M-70.7,206.7 L71.8,188.9 L72.7,208.8 L-70.2,225.6Z" fill="#f8f8f8" class="wbg"/>
 <path d="M-70.7,206.7 L71.8,188.9 L72.7,208.8 L-70.2,225.6Z" fill="url(#h1)" stroke="#a6a6a6" stroke-width=".9"/>
 <path d="M68.2,210.0 C68.4,212.8 68.6,217.2 69.5,226.7 C70.4,236.1 71.6,255.6 73.6,266.7 C75.6,277.8 77.4,286.2 81.4,293.0 C85.4,299.8 94.7,305.2 97.4,307.6 C94.7,315.8 86.3,340.4 81.0,356.7 C75.7,373.0 69.9,391.7 65.6,405.6 C61.3,419.5 58.0,426.9 55.0,440.0 C52.0,453.1 49.7,469.2 47.8,484.0 C45.9,498.8 44.7,515.3 43.8,529.0 C42.9,542.7 42.5,560.2 42.2,566.4 L-43.8,566.4 C-44.0,560.2 -44.1,542.7 -45.0,529.0 C-45.9,515.3 -47.1,498.8 -49.0,484.0 C-50.9,469.2 -53.8,453.1 -56.4,440.0 C-59.0,426.9 -61.2,418.4 -64.6,405.6 C-68.0,392.8 -72.2,379.4 -76.7,363.0 C-81.2,346.6 -88.9,316.6 -91.3,307.3 C-88.9,304.2 -80.4,295.7 -76.7,289.0 C-73.0,282.3 -71.0,274.3 -69.2,267.0 C-67.4,259.7 -66.3,252.0 -65.8,245.0 C-65.3,238.0 -66.0,228.5 -66.0,225.2Z" fill="none" stroke="#a8a8a8" stroke-width=".9"/>
 <path d="M71.8,188.9 C72.0,192.2 72.5,205.5 72.7,208.8 C72.8,211.8 72.5,217.0 73.3,226.7 C74.1,236.3 75.8,256.0 77.8,266.7 C79.8,277.4 81.4,284.5 85.6,291.0 C89.8,297.5 100.0,303.2 102.9,305.6 C100.0,314.1 91.1,340.0 85.6,356.7 C80.1,373.4 74.4,391.7 70.0,405.6 C65.6,419.5 62.3,426.9 59.3,440.0 C56.3,453.1 54.1,469.6 52.2,484.4 C50.4,499.2 49.1,514.6 48.2,529.0 C47.3,543.4 47.0,564.0 46.7,571.0 L-48.2,571.0 C-48.4,564.0 -48.8,543.4 -49.6,529.0 C-50.5,514.6 -51.4,499.2 -53.3,484.4 C-55.1,469.6 -58.1,453.1 -60.7,440.0 C-63.3,426.9 -65.6,418.4 -69.0,405.6 C-72.4,392.8 -76.5,380.0 -81.1,363.3 C-85.7,346.6 -94.1,315.2 -96.7,305.6 C-94.1,302.8 -85.0,295.4 -81.1,288.9 C-77.2,282.4 -75.1,275.6 -73.3,266.7 C-71.5,257.8 -70.4,245.6 -70.0,235.6 C-69.6,225.6 -70.6,211.5 -70.7,206.7Z" fill="none" stroke="#a8a8a8" stroke-width=".9"/>
</g>
<g id="glinesT">
 <path d="M-71.8,188.9 C-72.0,192.2 -72.5,205.5 -72.7,208.8 C-72.8,211.8 -72.5,217.0 -73.3,226.7 C-74.1,236.3 -75.8,256.0 -77.8,266.7 C-79.8,277.4 -81.4,284.5 -85.6,291.0 C-89.8,297.5 -100.0,303.2 -102.9,305.6 C-100.0,314.1 -91.1,340.0 -85.6,356.7 C-80.1,373.4 -74.4,391.7 -70.0,405.6 C-65.6,419.5 -62.3,426.9 -59.3,440.0 C-56.3,453.1 -54.1,469.6 -52.2,484.4 C-50.4,499.2 -49.1,514.6 -48.2,529.0 C-47.3,543.4 -47.0,564.0 -46.7,571.0 L48.2,571.0 C48.4,564.0 48.8,543.4 49.6,529.0 C50.5,514.6 51.4,499.2 53.3,484.4 C55.1,469.6 58.1,453.1 60.7,440.0 C63.3,426.9 65.6,418.4 69.0,405.6 C72.4,392.8 76.5,380.0 81.1,363.3 C85.7,346.6 94.1,315.2 96.7,305.6 C94.1,302.8 85.0,295.4 81.1,288.9 C77.2,282.4 75.1,275.6 73.3,266.7 C71.5,257.8 70.4,245.6 70.0,235.6 C69.6,225.6 70.6,211.5 70.7,206.7Z M-68.2,210.0 C-68.4,212.8 -68.6,217.2 -69.5,226.7 C-70.4,236.1 -71.6,255.6 -73.6,266.7 C-75.6,277.8 -77.4,286.2 -81.4,293.0 C-85.4,299.8 -94.7,305.2 -97.4,307.6 C-94.7,315.8 -86.3,340.4 -81.0,356.7 C-75.7,373.0 -69.9,391.7 -65.6,405.6 C-61.3,419.5 -58.0,426.9 -55.0,440.0 C-52.0,453.1 -49.7,469.2 -47.8,484.0 C-45.9,498.8 -44.7,515.3 -43.8,529.0 C-42.9,542.7 -42.5,560.2 -42.2,566.4 L43.8,566.4 C44.0,560.2 44.1,542.7 45.0,529.0 C45.9,515.3 47.1,498.8 49.0,484.0 C50.9,469.2 53.8,453.1 56.4,440.0 C59.0,426.9 61.2,418.4 64.6,405.6 C68.0,392.8 72.2,379.4 76.7,363.0 C81.2,346.6 88.9,316.6 91.3,307.3 C88.9,304.2 80.4,295.7 76.7,289.0 C73.0,282.3 71.0,274.3 69.2,267.0 C67.4,259.7 66.3,252.0 65.8,245.0 C65.3,238.0 66.0,228.5 66.0,225.2Z M70.7,206.7 L-71.8,188.9 L-72.7,208.8 L70.2,225.6Z" fill="url(#h2d)" fill-rule="evenodd"/>
 <path d="M70.7,206.7 L-71.8,188.9 L-72.7,208.8 L70.2,225.6Z" fill="url(#h1d)" stroke="#777" stroke-width="1"/>
 <path d="M-71.8,188.9 C-72.0,192.2 -72.5,205.5 -72.7,208.8 C-72.8,211.8 -72.5,217.0 -73.3,226.7 C-74.1,236.3 -75.8,256.0 -77.8,266.7 C-79.8,277.4 -81.4,284.5 -85.6,291.0 C-89.8,297.5 -100.0,303.2 -102.9,305.6 C-100.0,314.1 -91.1,340.0 -85.6,356.7 C-80.1,373.4 -74.4,391.7 -70.0,405.6 C-65.6,419.5 -62.3,426.9 -59.3,440.0 C-56.3,453.1 -54.1,469.6 -52.2,484.4 C-50.4,499.2 -49.1,514.6 -48.2,529.0 C-47.3,543.4 -47.0,564.0 -46.7,571.0 L48.2,571.0 C48.4,564.0 48.8,543.4 49.6,529.0 C50.5,514.6 51.4,499.2 53.3,484.4 C55.1,469.6 58.1,453.1 60.7,440.0 C63.3,426.9 65.6,418.4 69.0,405.6 C72.4,392.8 76.5,380.0 81.1,363.3 C85.7,346.6 94.1,315.2 96.7,305.6 C94.1,302.8 85.0,295.4 81.1,288.9 C77.2,282.4 75.1,275.6 73.3,266.7 C71.5,257.8 70.4,245.6 70.0,235.6 C69.6,225.6 70.6,211.5 70.7,206.7Z" fill="none" stroke="#777" stroke-width="1"/>
</g>
<g id="gpinkM"><path d="M-68.2,210.0 C-68.4,212.8 -68.6,217.2 -69.5,226.7 C-70.4,236.1 -71.6,255.6 -73.6,266.7 C-75.6,277.8 -77.4,286.2 -81.4,293.0 C-85.4,299.8 -94.7,305.2 -97.4,307.6 C-94.7,315.8 -86.3,340.4 -81.0,356.7 C-75.7,373.0 -69.9,391.7 -65.6,405.6 C-61.3,419.5 -56.8,434.3 -55.0,440.0 L-53.6,441.0 C-54.7,433.6 -56.9,412.6 -60.0,396.7 C-63.1,380.8 -68.3,361.6 -72.2,345.6 C-76.1,329.7 -81.5,308.4 -83.3,301.0 C-81.1,299.0 -73.7,294.7 -70.0,289.0 C-66.3,283.3 -63.2,275.2 -61.0,266.7 C-58.8,258.2 -57.8,247.0 -56.7,237.8 C-55.6,228.6 -54.8,216.0 -54.4,211.6Z"/><path d="M66.0,225.2 C66.0,228.5 65.3,238.0 65.8,245.0 C66.3,252.0 67.4,259.7 69.2,267.0 C71.0,274.3 73.0,282.3 76.7,289.0 C80.4,295.7 88.9,304.2 91.3,307.3 C88.9,316.6 81.2,346.6 76.7,363.0 C72.2,379.4 68.0,392.8 64.6,405.6 C61.2,418.4 57.8,434.3 56.4,440.0 L55.4,443.0 C55.8,437.5 56.1,424.4 57.8,410.0 C59.5,395.6 62.3,374.9 65.6,356.7 C68.9,338.5 75.8,310.3 77.8,301.0 C76.1,299.0 70.8,294.0 67.8,289.0 C64.8,284.0 61.9,277.7 60.0,271.0 C58.1,264.3 57.2,256.8 56.7,249.0 C56.2,241.2 56.7,228.3 56.7,224.2Z"/><rect x="-42.2" y="555.6" width="86" height="10.8"/></g>
<filter id="b04" x="-5%" y="-5%" width="110%" height="110%"><feGaussianBlur stdDeviation=".45"/></filter>
<filter id="b07" x="-5%" y="-5%" width="110%" height="110%"><feGaussianBlur stdDeviation=".7"/></filter>
<clipPath id="cBox"><rect x="127.2" y="188.4" width="200" height="382"/></clipPath>
<clipPath id="cInnerM"><path d="M-68.2,210.0 C-68.4,212.8 -68.6,217.2 -69.5,226.7 C-70.4,236.1 -71.6,255.6 -73.6,266.7 C-75.6,277.8 -77.4,286.2 -81.4,293.0 C-85.4,299.8 -94.7,305.2 -97.4,307.6 C-94.7,315.8 -86.3,340.4 -81.0,356.7 C-75.7,373.0 -69.9,391.7 -65.6,405.6 C-61.3,419.5 -58.0,426.9 -55.0,440.0 C-52.0,453.1 -49.7,469.2 -47.8,484.0 C-45.9,498.8 -44.7,515.3 -43.8,529.0 C-42.9,542.7 -42.5,560.2 -42.2,566.4 L43.8,566.4 C44.0,560.2 44.1,542.7 45.0,529.0 C45.9,515.3 47.1,498.8 49.0,484.0 C50.9,469.2 53.8,453.1 56.4,440.0 C59.0,426.9 61.2,418.4 64.6,405.6 C68.0,392.8 72.2,379.4 76.7,363.0 C81.2,346.6 88.9,316.6 91.3,307.3 C88.9,304.2 80.4,295.7 76.7,289.0 C73.0,282.3 71.0,274.3 69.2,267.0 C67.4,259.7 66.3,252.0 65.8,245.0 C65.3,238.0 66.0,228.5 66.0,225.2Z"/></clipPath>
<pattern id="h1d" width="5.7" height="5.7" patternUnits="userSpaceOnUse" patternTransform="rotate(-50)"><rect width="5.7" height=".9" fill="#6a6a6a"/></pattern>
<pattern id="h2d" width="4" height="4" patternUnits="userSpaceOnUse" patternTransform="rotate(-40)"><rect width="4" height="1" fill="#6a6a6a"/></pattern>
<pattern id="feath0" width="345" height="345" patternUnits="userSpaceOnUse" patternTransform="translate(-103,184.2) scale(0.16667,0.16667)"><use href="#tileg"/></pattern>
</defs></svg>

<!-- TOP BAR -->
<div id="top" class="abs">
 <svg class="abs" style="left:0;top:0" width="110" height="48" viewBox="0 0 110 48">
  <path d="M25.3,12.2 L38.5,36.6 L12.3,36.6Z" fill="#2aabe2"/>
  <circle cx="50.9" cy="24.7" r="12.3" fill="#ee1d8d"/>
  <path d="M62.9,12.3 L86.5,12.3 L74.7,36.6Z" fill="#f8ea35"/>
  <path d="M73.4,12.3 L96.6,12.3 L85,36.5Z" fill="#f8ea35"/>
  <path d="M73.4,12.3 L86.5,12.3 L79.9,25.9Z" fill="#e6cf3c"/>
 </svg>
 <div class="abs sx" style="left:111px;top:14.4px;font-size:16.4px;font-weight:bold;line-height:20px;white-space:nowrap;transform:scaleX(.876)">DESIGN LAB</div>
 <div class="abs sx" style="left:220px;top:18.1px;font-size:10.2px;font-weight:bold;line-height:14px;white-space:nowrap;color:#e6e6e6;transform:scaleX(.85)">LEGGINGS</div>
 <svg class="abs" style="left:275px;top:19px" width="11" height="10"><path d="M2,2.2 L8.8,2.2 L5.4,8.6Z" fill="#fff"/></svg>
 <div class="abs" style="left:309px;top:10px;width:1px;height:28px;background:#3a3a3a"></div>
 <svg class="abs" style="left:330px;top:10px" width="26" height="26" viewBox="330 10 26 26" fill="none" stroke="#d0d0d0" stroke-width="1.2">
  <path d="M346.5,17.2H333.4V31.3H350.3V21"/><path d="M336,29 L338.9,24.4 L341.5,28.3 L343.6,25.6 L346.8,29Z" fill="#e0e0e0" stroke="none"/><circle cx="344.3" cy="22.2" r=".9" fill="#e0e0e0" stroke="none"/><path d="M349.7,14.4V20M347.2,17.6H352.6" stroke-width="1.1"/>
 </svg>
 <div class="abs sx" style="left:365px;top:17.4px;font-size:9.8px;font-weight:bold;line-height:14px;white-space:nowrap;color:#e6e6e6;transform:scaleX(.883)">UPLOAD IMAGES</div>
 <svg class="abs" style="left:1198px;top:14px" width="20" height="20" viewBox="0 0 20 20"><circle cx="10" cy="10" r="7.2" fill="none" stroke="#fff" stroke-width="1.7"/><text x="10" y="14" font-size="11" font-weight="bold" text-anchor="middle" fill="#fff" font-family="Liberation Sans, sans-serif">?</text></svg>
 <svg class="abs" style="left:1248px;top:16px" width="17" height="17" viewBox="1248 16 17 17"><path d="M1251.5,19.2L1261.6,29.4M1261.6,19.2L1251.5,29.4" stroke="#fff" stroke-width="1.7"/></svg>
</div>

<!-- TAB BAR -->
<div id="tabs" class="abs">
 <div id="tab1" class="abs"><span>Leggings</span><b></b></div>
 <div class="tsep" style="left:741px"></div><div class="tsep" style="left:775px"></div><div class="tsep" style="left:812px"></div><div class="tsep" style="left:859px"></div><div class="tsep" style="left:895px"></div>
 <svg class="abs" style="left:748.5px;top:8.2px" width="23.4" height="21.4" viewBox="0 0 20 20" preserveAspectRatio="none"><path d="M5.2,18.5 C3.5,15 2,12.5 1.6,11.2 C1.4,10.2 2.6,9.6 3.4,10.4 L5.2,12.4 V4.2 C5.2,2.9 7.1,2.9 7.1,4.2 V9 H7.7 V2.6 C7.7,1.3 9.7,1.3 9.7,2.6 V9 H10.3 V3.2 C10.3,1.9 12.3,1.9 12.3,3.2 V9 H12.9 V5 C12.9,3.8 14.8,3.8 14.8,5 V13.5 C14.8,15.5 14.2,17 13.6,18.5Z" fill="#fff"/></svg>
 <svg class="abs" style="left:785px;top:9.7px" width="18" height="18" viewBox="0 0 18 18" fill="none" stroke="#fff"><circle cx="7" cy="7" r="5" stroke-width="1.8"/><path d="M10.8,10.8L16,16" stroke-width="2.4"/><path d="M4.5,7H9.5" stroke-width="1.5"/></svg>
 <div class="abs" style="left:812px;top:0;width:47px;height:36px;line-height:39.5px;text-align:center;font-size:11px;color:#c2c2c2;letter-spacing:-.3px;-webkit-text-stroke:.3px #c2c2c2">100%</div>
 <svg class="abs" style="left:869px;top:9.7px" width="18" height="18" viewBox="0 0 18 18" fill="none" stroke="#fff"><circle cx="7" cy="7" r="5" stroke-width="1.8"/><path d="M10.8,10.8L16,16" stroke-width="2.4"/><path d="M4.5,7H9.5M7,4.5V9.5" stroke-width="1.5"/></svg>
 <div class="abs" style="left:895px;top:0;width:385px;height:36px;line-height:37.5px;text-align:center;font-size:11px;color:#c8c8c8;-webkit-text-stroke:.2px #c8c8c8">3D Preview</div>
 <svg class="abs" style="left:1250px;top:8px" width="24" height="20" viewBox="1250 56 24 20" fill="none" stroke="#fff" stroke-width="2"><path d="M1253.8,64.6V60.2H1258.2M1265.9,60.2H1270.3V64.6M1270.3,67.5V71.9H1265.9M1258.2,71.9H1253.8V67.5"/></svg>
</div>

<div class="abs" style="left:800px;top:83.5px;width:480px;height:1px;background:#444;opacity:.8"></div>
<!-- LEFT TOOLBAR -->
<div id="tools" class="abs">
<div class="tb" style="top:0px"><svg style="left:0px" width="36" height="36" viewBox="0 0 36 36" fill="none" stroke="#d2d2d2" stroke-width="1.2"><path d="M9.2,8.9H27.8M9.2,27.6H27.8M9.2,8.9V27.6M22.8,8.9V27.6"/><rect x="11.3" y="11.3" width="9.4" height="14.4" fill="#464646" stroke="none"/><path d="M11.4,14.3V11.4H14.3M17.7,11.4H20.6V14.3M20.6,22.7V25.6H17.7M14.3,25.6H11.4V22.7" stroke-width="1.1"/></svg></div>
<div class="tb" style="top:36px"><svg style="left:0px" width="36" height="36" viewBox="0 0 36 36" fill="none" stroke="#d2d2d2" stroke-width="1.2"><path d="M9.2,8.9H27.8M9.2,27.8H27.8M13.7,8.9V27.8M27.8,8.9V27.8"/><rect x="15.9" y="11.3" width="9.9" height="14.4" fill="#464646" stroke="none"/><path d="M16,14.3V11.4H18.9M22.8,11.4H25.7V14.3M25.7,22.7V25.6H22.8M18.9,25.6H16V22.7" stroke-width="1.1"/></svg></div>
<div class="tb" style="top:74px"><svg style="left:0px" width="36" height="36" viewBox="0 0 36 36" fill="none" stroke="#d2d2d2" stroke-width="1.2"><rect x="9.2" y="16.5" width="9.2" height="9.2"/><path d="M15,10.8 C22,10.5 27.5,15.5 27.6,23.6"/><path d="M17.6,7.6 L13.6,10.9 L17.8,13.8Z" fill="#d2d2d2" stroke="none"/></svg></div>
<div class="tb" style="top:110px"><svg style="left:0px" width="36" height="36" viewBox="0 0 36 36" fill="none" stroke="#d2d2d2" stroke-width="1.2"><rect x="18" y="16.2" width="9.2" height="9.2"/><path d="M8,23.4 C8.2,15.5 13.5,10.5 21,10.4"/><path d="M19,7.2 L23,10.4 L18.8,13.5Z" fill="#d2d2d2" stroke="none"/></svg></div>
<div class="tb" style="top:144px"><svg style="left:0px" width="36" height="36" viewBox="0 0 36 36" fill="none" stroke="#d2d2d2" stroke-width="1.2"><path d="M8,14.5 L13.8,18.3 L8,22Z" fill="#d2d2d2" stroke="none"/><path d="M17.3,10V27.5" stroke-dasharray="1.6,1.6" stroke-width="1.4"/><path d="M21.4,15.4L26.8,21M26.8,15.4L21.4,21" stroke-width="1.1"/></svg></div>
<div class="tb sel" style="top:181px"><svg style="left:-2px" width="36" height="36" viewBox="0 0 36 36" fill="none" stroke="#d2d2d2" stroke-width="1.2"><g transform="translate(0,1)"><path d="M10.5,13.2 C12,7.5 22,6.5 24.6,12.6"/><path d="M26.6,9.6 L25,13.6 L21.2,11.8Z" fill="#d2d2d2" stroke="none"/></g><g transform="translate(0,2.2)"><path d="M8,14.5 L13.8,18.3 L8,22Z" fill="#d2d2d2" stroke="none"/><path d="M26.8,15.2 L22.2,18.3 L26.8,21.4Z" stroke-width="1.1"/></g><path d="M17.7,13V28" stroke-dasharray="1.6,1.6" stroke-width="1.4"/></svg></div>
<div class="tb" style="top:216px"><svg style="left:0px" width="36" height="36" viewBox="0 0 36 36" fill="none" stroke="#d2d2d2" stroke-width="1.2"><g transform="translate(0,1)"><path d="M25.5,13.2 C24,7.5 14,6.5 11.4,12.6"/><path d="M9.4,9.6 L11,13.6 L14.8,11.8Z" fill="#d2d2d2" stroke="none"/></g><g transform="translate(0,2.2)"><path d="M8.6,15.2 L13.2,18.3 L8.6,21.4Z" stroke-width="1.1"/><path d="M27.4,14.5 L21.6,18.3 L27.4,22Z" fill="#d2d2d2" stroke="none"/></g><path d="M17.7,13V28" stroke-dasharray="1.6,1.6" stroke-width="1.4"/></svg></div>
<div class="tb" style="top:252px"><svg style="left:0px" width="36" height="36" viewBox="0 0 36 36" fill="none" stroke="#d2d2d2" stroke-width="1.2"><g transform="translate(0,0.8)"><path d="M8.5,10.6H25"/><path d="M23.4,7.8 L27.6,10.6 L23.4,13.4Z" fill="#d2d2d2" stroke="none"/></g><g transform="translate(0,2.6)"><path d="M8,14.5 L13.8,18.3 L8,22Z" fill="#d2d2d2" stroke="none"/><path d="M26.8,15.2 L22.2,18.3 L26.8,21.4Z" stroke-width="1.1"/></g><path d="M17.3,13V28.2" stroke-dasharray="1.6,1.6" stroke-width="1.4"/></svg></div>
<div class="tb" style="top:288px"><svg style="left:0px" width="36" height="36" viewBox="0 0 36 36" fill="none" stroke="#d2d2d2" stroke-width="1.2"><g transform="translate(0,0.8)"><path d="M27.5,10.6H11"/><path d="M12.6,7.8 L8.4,10.6 L12.6,13.4Z" fill="#d2d2d2" stroke="none"/></g><g transform="translate(0,2.6)"><path d="M8.6,15.2 L13.2,18.3 L8.6,21.4Z" stroke-width="1.1"/><path d="M27.4,14.5 L21.6,18.3 L27.4,22Z" fill="#d2d2d2" stroke="none"/></g><path d="M17.9,13V28.2" stroke-dasharray="1.6,1.6" stroke-width="1.4"/></svg></div>
<div class="tb sel" style="top:325px"><svg style="left:-2px" width="36" height="36" viewBox="0 0 36 36" fill="none" stroke="#d2d2d2" stroke-width="1.2"><path d="M8.6,11.3H27.2M8.6,24.8H27.2M11.2,8.7V27.4M24.6,8.7V27.4" stroke-width="1.05"/><rect x="13.4" y="13.5" width="9" height="9.1"/><path d="M12.3,11.3V24.8M23.5,11.3V24.8M11.2,12.4H24.6M11.2,23.7H24.6" stroke-dasharray="1.1,1.1" stroke-width="1.6" opacity=".6"/></svg></div>
<div class="abs" style="left:0;top:73px;width:36px;height:1px;background:#454545"></div>
<div class="abs" style="left:0;top:145px;width:36px;height:1px;background:#454545"></div>
<div class="abs" style="left:0;top:361px;width:36px;height:1px;background:#454545"></div>
</div>

<!-- CANVAS -->
<div id="canvas" class="abs">
<svg class="abs" style="left:0;top:0" width="764" height="588" viewBox="36 84 764 588" font-family="Liberation Sans, sans-serif">
 <!-- right template -->
 <g transform="translate(600,0)">
  <use href="#garment"/>
  <use href="#gpink" fill="#f4a9a8"/>
  <use href="#glines"/>
 </g>
 <path d="M600,168V588" stroke="#969696" stroke-width="1.3" stroke-dasharray="8,2"/>
 <text x="606" y="188.8" font-size="14" font-weight="bold" fill="#7f7f7f" letter-spacing="-.75">SIDE</text>
 <!-- left template with image -->
 <g transform="translate(230,0)"><path d="M-71.8,188.9 C-72.0,192.2 -72.5,205.5 -72.7,208.8 C-72.8,211.8 -72.5,217.0 -73.3,226.7 C-74.1,236.3 -75.8,256.0 -77.8,266.7 C-79.8,277.4 -81.4,284.5 -85.6,291.0 C-89.8,297.5 -100.0,303.2 -102.9,305.6 C-100.0,314.1 -91.1,340.0 -85.6,356.7 C-80.1,373.4 -74.4,391.7 -70.0,405.6 C-65.6,419.5 -62.3,426.9 -59.3,440.0 C-56.3,453.1 -54.1,469.6 -52.2,484.4 C-50.4,499.2 -49.1,514.6 -48.2,529.0 C-47.3,543.4 -47.0,564.0 -46.7,571.0 L48.2,571.0 C48.4,564.0 48.8,543.4 49.6,529.0 C50.5,514.6 51.4,499.2 53.3,484.4 C55.1,469.6 58.1,453.1 60.7,440.0 C63.3,426.9 65.6,418.4 69.0,405.6 C72.4,392.8 76.5,380.0 81.1,363.3 C85.7,346.6 94.1,315.2 96.7,305.6 C94.1,302.8 85.0,295.4 81.1,288.9 C77.2,282.4 75.1,275.6 73.3,266.7 C71.5,257.8 70.4,245.6 70.0,235.6 C69.6,225.6 70.6,211.5 70.7,206.7Z" fill="#f8f8f8"/></g>
 <rect x="127.2" y="188.4" width="200" height="382" fill="#f7f7f7"/>
 <rect x="127.2" y="188.4" width="200" height="382" fill="url(#feath)" opacity=".36" filter="url(#b04)"/>
 <g clip-path="url(#cBox)"><path transform="translate(230,0)" d="M-71.8,188.9 C-72.0,192.2 -72.5,205.5 -72.7,208.8 C-72.8,211.8 -72.5,217.0 -73.3,226.7 C-74.1,236.3 -75.8,256.0 -77.8,266.7 C-79.8,277.4 -81.4,284.5 -85.6,291.0 C-89.8,297.5 -100.0,303.2 -102.9,305.6 C-100.0,314.1 -91.1,340.0 -85.6,356.7 C-80.1,373.4 -74.4,391.7 -70.0,405.6 C-65.6,419.5 -62.3,426.9 -59.3,440.0 C-56.3,453.1 -54.1,469.6 -52.2,484.4 C-50.4,499.2 -49.1,514.6 -48.2,529.0 C-47.3,543.4 -47.0,564.0 -46.7,571.0 L48.2,571.0 C48.4,564.0 48.8,543.4 49.6,529.0 C50.5,514.6 51.4,499.2 53.3,484.4 C55.1,469.6 58.1,453.1 60.7,440.0 C63.3,426.9 65.6,418.4 69.0,405.6 C72.4,392.8 76.5,380.0 81.1,363.3 C85.7,346.6 94.1,315.2 96.7,305.6 C94.1,302.8 85.0,295.4 81.1,288.9 C77.2,282.4 75.1,275.6 73.3,266.7 C71.5,257.8 70.4,245.6 70.0,235.6 C69.6,225.6 70.6,211.5 70.7,206.7Z" fill="none" stroke="#fff" stroke-opacity=".2" stroke-width="22" stroke-linejoin="round"/></g>
 <g transform="translate(230,0)" opacity=".62"><use href="#glinesT"/></g>
 <g transform="translate(230,0)"><g clip-path="url(#cInnerM)">
  <rect x="-102.8" y="188.4" width="200" height="382" fill="url(#feath0)" filter="url(#b04)"/>
  <use href="#gpinkM" fill="#d8381e" opacity=".62"/>
 </g>
 <path d="M-68.2,210.0 C-68.4,212.8 -68.6,217.2 -69.5,226.7 C-70.4,236.1 -71.6,255.6 -73.6,266.7 C-75.6,277.8 -77.4,286.2 -81.4,293.0 C-85.4,299.8 -94.7,305.2 -97.4,307.6 C-94.7,315.8 -86.3,340.4 -81.0,356.7 C-75.7,373.0 -69.9,391.7 -65.6,405.6 C-61.3,419.5 -58.0,426.9 -55.0,440.0 C-52.0,453.1 -49.7,469.2 -47.8,484.0 C-45.9,498.8 -44.7,515.3 -43.8,529.0 C-42.9,542.7 -42.5,560.2 -42.2,566.4 L43.8,566.4 C44.0,560.2 44.1,542.7 45.0,529.0 C45.9,515.3 47.1,498.8 49.0,484.0 C50.9,469.2 53.8,453.1 56.4,440.0 C59.0,426.9 61.2,418.4 64.6,405.6 C68.0,392.8 72.2,379.4 76.7,363.0 C81.2,346.6 88.9,316.6 91.3,307.3 C88.9,304.2 80.4,295.7 76.7,289.0 C73.0,282.3 71.0,274.3 69.2,267.0 C67.4,259.7 66.3,252.0 65.8,245.0 C65.3,238.0 66.0,228.5 66.0,225.2Z" fill="none" stroke="#6d7f7c" stroke-width="1" opacity=".7"/>
 </g>
 <path d="M230,168V588" stroke="#7c7c7c" stroke-width="1.3" stroke-dasharray="8,2"/>
 <text x="236" y="188.8" font-size="14" font-weight="bold" fill="#7f7f7f" letter-spacing="-.75">SIDE</text>
 <rect x="127.2" y="188.4" width="200" height="382" fill="none" stroke="#4a4a4a" stroke-width="1" stroke-dasharray="2,2"/>
 <!-- handles -->
 <circle cx="127.05" cy="187.9" r="12.3" fill="#262626"/>
 <path d="M121.9,182.8L132.7,193.4M132.7,182.8L121.9,193.4" stroke="#fff" stroke-width="1.5"/>
 <g fill="none" stroke="#333" stroke-width="1.5"><path d="M321.5,181.5 H327.5 C332,181.6 334.8,184.5 334.8,189 V193"/></g>
 <path d="M317.6,181.5 L322.8,178.7 V184.3Z M334.8,196.4 L331.9,191.8 H337.7Z" fill="#2b2b2b"/>
 <path d="M320.5,563.2 L334.5,577 M325.1,572.9 L330,568" stroke="#333" stroke-width="1.5" fill="none"/>
 <path d="M317.9,560.6 L324.4,562.2 L319.6,567Z M337.1,579.6 L330.6,578 L335.4,573.2Z" fill="#2b2b2b"/>
</svg>
</div>

<!-- LAYERS PANEL -->
<div id="layers" class="abs">
 <div class="abs" style="left:10.5px;top:9.8px;font-size:10px;line-height:12px;color:#d0d0d0;letter-spacing:-.35px">Layers</div>
 <div class="abs" style="left:0;top:29px;width:95px;height:1px;background:#454545"></div>
 <div class="abs" style="left:59px;top:30px;width:1px;height:558px;background:#454545"></div>
 <div class="abs" style="left:60px;top:138px;width:35px;height:1px;background:#454545"></div>
 <div class="abs" style="left:60px;top:210px;width:35px;height:1px;background:#454545"></div>
 <svg class="abs" style="left:0;top:0" width="95" height="588" viewBox="800 84 95 588">
  <rect x="804" y="117" width="41" height="51.5" fill="url(#feathT)"/>
  <rect x="804" y="117" width="41" height="51.5" fill="#93d0a6" opacity=".38"/>
  <rect x="804.9" y="117.8" width="39.9" height="50" fill="none" stroke="#3f88cc" stroke-width="1.8"/>
  <g fill="none" stroke="#d4d4d4" stroke-width="1.3"><path d="M871.5,135 L876.7,129.8 L882,135"/><path d="M871.5,165 L876.7,170.2 L882,165"/></g>
  <g fill="none" stroke="#d4d4d4" stroke-width="1.15">
   <path d="M870,198.5H883.5M873,198.5V196.3H880.5V198.5"/><path d="M871.3,200.5H882.2V213.5H871.3Z"/><path d="M874.2,201V213M876.75,201V213M879.3,201V213" stroke-width="1.5"/>
   <path d="M880.5,236.8H867.6V249.8H883.5V240.5"/><path d="M870,247.3 L873.7,241.6 L876.4,245.6 L878.6,242.9 L881.6,247.3Z" fill="#d8d8d8" stroke="none"/><circle cx="878.2" cy="240.3" r=".9" fill="#d8d8d8" stroke="none"/><path d="M884.2,232.4V238.8M881,235.6H887.4" stroke-width="1"/>
   <path d="M872,266.9H883.5V282.3H872Z"/><path d="M869.3,270.6V285.5H881"/><path d="M877.7,272V278.6M874.4,275.3H881" stroke-width="1"/>
  </g>
 </svg>
</div>

<!-- 3D PREVIEW -->
<div id="p3d" class="abs">
 <div class="abs" style="left:13px;top:12px;width:34px;height:29px;background:#696969"></div>
 <svg class="abs" style="left:22px;top:19px" width="16" height="16" viewBox="0 0 24 24"><path fill="#fff" d="M19.14,12.94c0.04-0.3,0.06-0.61,0.06-0.94c0-0.32-0.02-0.64-0.07-0.94l2.03-1.58c0.18-0.14,0.23-0.41,0.12-0.61 l-1.92-3.32c-0.12-0.22-0.37-0.29-0.59-0.22l-2.39,0.96c-0.5-0.38-1.03-0.7-1.62-0.94L14.4,2.81c-0.04-0.24-0.24-0.41-0.48-0.41 h-3.84c-0.24,0-0.43,0.17-0.47,0.41L9.25,5.35C8.66,5.59,8.12,5.92,7.63,6.29L5.24,5.33c-0.22-0.08-0.47,0-0.59,0.22L2.74,8.87 C2.62,9.08,2.66,9.34,2.86,9.48l2.03,1.58C4.84,11.36,4.8,11.69,4.8,12s0.02,0.64,0.07,0.94l-2.03,1.58 c-0.18,0.14-0.23,0.41-0.12,0.61l1.92,3.32c0.12,0.22,0.37,0.29,0.59,0.22l2.39-0.96c0.5,0.38,1.03,0.7,1.62,0.94l0.36,2.54 c0.05,0.24,0.24,0.41,0.48,0.41h3.84c0.24,0,0.44-0.17,0.47-0.41l0.36-2.54c0.59-0.24,1.13-0.56,1.62-0.94l2.39,0.96 c0.22,0.08,0.47,0,0.59-0.22l1.92-3.32c0.12-0.22,0.07-0.47-0.12-0.61L19.14,12.94z M12,15.6c-1.98,0-3.6-1.62-3.6-3.6 s1.62-3.6,3.6-3.6s3.6,1.62,3.6,3.6S13.98,15.6,12,15.6z"/></svg>
 <svg class="abs" style="left:0;top:0" width="385" height="588" viewBox="895 84 385 588">
  <defs><pattern id="L0" width="345" height="345" patternUnits="userSpaceOnUse" patternTransform="translate(1003.41,183.14) scale(0.2583)"><use href="#tileg"/></pattern><pattern id="R0" width="345" height="345" patternUnits="userSpaceOnUse" patternTransform="translate(1175.99,183.14) scale(-0.2583,0.2583)"><use href="#tileg"/></pattern><pattern id="L1" width="345" height="345" patternUnits="userSpaceOnUse" patternTransform="translate(1003.41,183.14) scale(0.2583)"><use href="#tileg"/></pattern><pattern id="R1" width="345" height="345" patternUnits="userSpaceOnUse" patternTransform="translate(1175.99,183.14) scale(-0.2583,0.2583)"><use href="#tileg"/></pattern><pattern id="L2" width="345" height="345" patternUnits="userSpaceOnUse" patternTransform="translate(1003.41,183.14) scale(0.2583)"><use href="#tileg"/></pattern><pattern id="R2" width="345" height="345" patternUnits="userSpaceOnUse" patternTransform="translate(1175.99,183.14) scale(-0.2583,0.2583)"><use href="#tileg"/></pattern><pattern id="L3" width="345" height="345" patternUnits="userSpaceOnUse" patternTransform="translate(1003.41,183.14) scale(0.2583)"><use href="#tileg"/></pattern><pattern id="R3" width="345" height="345" patternUnits="userSpaceOnUse" patternTransform="translate(1175.99,183.14) scale(-0.2583,0.2583)"><use href="#tileg"/></pattern><pattern id="L4" width="345" height="345" patternUnits="userSpaceOnUse" patternTransform="translate(1003.41,183.14) scale(0.2583)"><use href="#tileg"/></pattern><pattern id="R4" width="345" height="345" patternUnits="userSpaceOnUse" patternTransform="translate(1175.99,183.14) scale(-0.2583,0.2583)"><use href="#tileg"/></pattern><pattern id="L5" width="345" height="345" patternUnits="userSpaceOnUse" patternTransform="translate(1003.41,183.14) scale(0.2583)"><use href="#tileg"/></pattern><pattern id="R5" width="345" height="345" patternUnits="userSpaceOnUse" patternTransform="translate(1175.99,183.14) scale(-0.2583,0.2583)"><use href="#tileg"/></pattern><pattern id="L6" width="345" height="345" patternUnits="userSpaceOnUse" patternTransform="translate(1003.41,183.14) scale(0.2583)"><use href="#tileg"/></pattern><pattern id="R6" width="345" height="345" patternUnits="userSpaceOnUse" patternTransform="translate(1175.99,183.14) scale(-0.2583,0.2583)"><use href="#tileg"/></pattern><pattern id="L7" width="345" height="345" patternUnits="userSpaceOnUse" patternTransform="translate(1003.41,183.14) scale(0.2583)"><use href="#tileg"/></pattern><pattern id="R7" width="345" height="345" patternUnits="userSpaceOnUse" patternTransform="translate(1175.99,183.14) scale(-0.2583,0.2583)"><use href="#tileg"/></pattern><pattern id="L8" width="345" height="345" patternUnits="userSpaceOnUse" patternTransform="translate(1003.41,183.14) scale(0.2583)"><use href="#tileg"/></pattern><pattern id="R8" width="345" height="345" patternUnits="userSpaceOnUse" patternTransform="translate(1175.99,183.14) scale(-0.2583,0.2583)"><use href="#tileg"/></pattern><pattern id="L9" width="345" height="345" patternUnits="userSpaceOnUse" patternTransform="translate(1003.41,183.14) scale(0.2583)"><use href="#tileg"/></pattern><pattern id="R9" width="345" height="345" patternUnits="userSpaceOnUse" patternTransform="translate(1175.99,183.14) scale(-0.2583,0.2583)"><use href="#tileg"/></pattern><pattern id="L10" width="345" height="345" patternUnits="userSpaceOnUse" patternTransform="translate(1003.41,183.14) scale(0.2583)"><use href="#tileg"/></pattern><pattern id="R10" width="345" height="345" patternUnits="userSpaceOnUse" patternTransform="translate(1175.99,183.14) scale(-0.2583,0.2583)"><use href="#tileg"/></pattern><pattern id="L11" width="345" height="345" patternUnits="userSpaceOnUse" patternTransform="translate(1003.41,183.14) scale(0.2583)"><use href="#tileg"/></pattern><pattern id="R11" width="345" height="345" patternUnits="userSpaceOnUse" patternTransform="translate(1175.99,183.14) scale(-0.2583,0.2583)"><use href="#tileg"/></pattern><pattern id="L12" width="345" height="345" patternUnits="userSpaceOnUse" patternTransform="translate(1003.41,183.14) scale(0.2583)"><use href="#tileg"/></pattern><pattern id="R12" width="345" height="345" patternUnits="userSpaceOnUse" patternTransform="translate(1175.99,183.14) scale(-0.2583,0.2583)"><use href="#tileg"/></pattern><pattern id="L13" width="345" height="345" patternUnits="userSpaceOnUse" patternTransform="translate(1003.41,183.14) scale(0.2583)"><use href="#tileg"/></pattern><pattern id="R13" width="345" height="345" patternUnits="userSpaceOnUse" patternTransform="translate(1175.99,183.14) scale(-0.2583,0.2583)"><use href="#tileg"/></pattern><pattern id="L14" width="345" height="345" patternUnits="userSpaceOnUse" patternTransform="translate(1003.41,183.14) scale(0.2583)"><use href="#tileg"/></pattern><pattern id="R14" width="345" height="345" patternUnits="userSpaceOnUse" patternTransform="translate(1175.99,183.14) scale(-0.2583,0.2583)"><use href="#tileg"/></pattern><pattern id="L15" width="345" height="345" patternUnits="userSpaceOnUse" patternTransform="translate(1003.41,183.14) scale(0.2583)"><use href="#tileg"/></pattern><pattern id="R15" width="345" height="345" patternUnits="userSpaceOnUse" patternTransform="translate(1175.99,183.14) scale(-0.2583,0.2583)"><use href="#tileg"/></pattern><pattern id="L16" width="345" height="345" patternUnits="userSpaceOnUse" patternTransform="translate(1003.41,183.14) scale(0.2583)"><use href="#tileg"/></pattern><pattern id="R16" width="345" height="345" patternUnits="userSpaceOnUse" patternTransform="translate(1175.99,183.14) scale(-0.2583,0.2583)"><use href="#tileg"/></pattern><pattern id="L17" width="345" height="345" patternUnits="userSpaceOnUse" patternTransform="translate(1003.41,183.14) scale(0.2583)"><use href="#tileg"/></pattern><pattern id="R17" width="345" height="345" patternUnits="userSpaceOnUse" patternTransform="translate(1175.99,183.14) scale(-0.2583,0.2583)"><use href="#tileg"/></pattern><pattern id="L18" width="345" height="345" patternUnits="userSpaceOnUse" patternTransform="translate(1003.41,183.14) scale(0.2583)"><use href="#tileg"/></pattern><pattern id="R18" width="345" height="345" patternUnits="userSpaceOnUse" patternTransform="translate(1175.99,183.14) scale(-0.2583,0.2583)"><use href="#tileg"/></pattern><pattern id="L19" width="345" height="345" patternUnits="userSpaceOnUse" patternTransform="translate(1003.41,183.14) scale(0.2583)"><use href="#tileg"/></pattern><pattern id="R19" width="345" height="345" patternUnits="userSpaceOnUse" patternTransform="translate(1175.99,183.14) scale(-0.2583,0.2583)"><use href="#tileg"/></pattern><pattern id="L20" width="345" height="345" patternUnits="userSpaceOnUse" patternTransform="translate(1003.41,183.14) scale(0.2583)"><use href="#tileg"/></pattern><pattern id="R20" width="345" height="345" patternUnits="userSpaceOnUse" patternTransform="translate(1175.99,183.14) scale(-0.2583,0.2583)"><use href="#tileg"/></pattern><pattern id="L21" width="345" height="345" patternUnits="userSpaceOnUse" patternTransform="translate(1003.41,183.14) scale(0.2583)"><use href="#tileg"/></pattern><pattern id="R21" width="345" height="345" patternUnits="userSpaceOnUse" patternTransform="translate(1175.99,183.14) scale(-0.2583,0.2583)"><use href="#tileg"/></pattern><pattern id="L22" width="345" height="345" patternUnits="userSpaceOnUse" patternTransform="translate(1003.41,183.14) scale(0.2583)"><use href="#tileg"/></pattern><pattern id="R22" width="345" height="345" patternUnits="userSpaceOnUse" patternTransform="translate(1175.99,183.14) scale(-0.2583,0.2583)"><use href="#tileg"/></pattern><pattern id="L23" width="345" height="345" patternUnits="userSpaceOnUse" patternTransform="translate(1003.41,183.14) scale(0.2583)"><use href="#tileg"/></pattern><pattern id="R23" width="345" height="345" patternUnits="userSpaceOnUse" patternTransform="translate(1175.99,183.14) scale(-0.2583,0.2583)"><use href="#tileg"/></pattern><pattern id="L24" width="345" height="345" patternUnits="userSpaceOnUse" patternTransform="translate(1003.41,183.14) scale(0.2583)"><use href="#tileg"/></pattern><pattern id="R24" width="345" height="345" patternUnits="userSpaceOnUse" patternTransform="translate(1175.99,183.14) scale(-0.2583,0.2583)"><use href="#tileg"/></pattern><pattern id="L25" width="345" height="345" patternUnits="userSpaceOnUse" patternTransform="translate(1003.41,183.14) scale(0.2583)"><use href="#tileg"/></pattern><pattern id="R25" width="345" height="345" patternUnits="userSpaceOnUse" patternTransform="translate(1175.99,183.14) scale(-0.2583,0.2583)"><use href="#tileg"/></pattern><pattern id="L26" width="345" height="345" patternUnits="userSpaceOnUse" patternTransform="translate(1003.41,183.14) scale(0.2583)"><use href="#tileg"/></pattern><pattern id="R26" width="345" height="345" patternUnits="userSpaceOnUse" patternTransform="translate(1175.99,183.14) scale(-0.2583,0.2583)"><use href="#tileg"/></pattern><pattern id="L27" width="345" height="345" patternUnits="userSpaceOnUse" patternTransform="translate(1003.41,183.14) scale(0.2583)"><use href="#tileg"/></pattern><pattern id="R27" width="345" height="345" patternUnits="userSpaceOnUse" patternTransform="translate(1175.99,183.14) scale(-0.2583,0.2583)"><use href="#tileg"/></pattern><pattern id="L28" width="345" height="345" patternUnits="userSpaceOnUse" patternTransform="translate(1003.41,183.14) scale(0.2583)"><use href="#tileg"/></pattern><pattern id="R28" width="345" height="345" patternUnits="userSpaceOnUse" patternTransform="translate(1175.99,183.14) scale(-0.2583,0.2583)"><use href="#tileg"/></pattern><pattern id="L29" width="345" height="345" patternUnits="userSpaceOnUse" patternTransform="translate(1003.41,183.14) scale(0.2583)"><use href="#tileg"/></pattern><pattern id="R29" width="345" height="345" patternUnits="userSpaceOnUse" patternTransform="translate(1175.99,183.14) scale(-0.2583,0.2583)"><use href="#tileg"/></pattern><pattern id="L30" width="345" height="345" patternUnits="userSpaceOnUse" patternTransform="translate(1003.41,183.14) scale(0.2583)"><use href="#tileg"/></pattern><pattern id="R30" width="345" height="345" patternUnits="userSpaceOnUse" patternTransform="translate(1175.99,183.14) scale(-0.2583,0.2583)"><use href="#tileg"/></pattern><pattern id="L31" width="345" height="345" patternUnits="userSpaceOnUse" patternTransform="translate(1003.41,183.14) scale(0.2583)"><use href="#tileg"/></pattern><pattern id="R31" width="345" height="345" patternUnits="userSpaceOnUse" patternTransform="translate(1175.99,183.14) scale(-0.2583,0.2583)"><use href="#tileg"/></pattern><pattern id="L32" width="345" height="345" patternUnits="userSpaceOnUse" patternTransform="translate(1003.41,183.14) scale(0.2583)"><use href="#tileg"/></pattern><pattern id="R32" width="345" height="345" patternUnits="userSpaceOnUse" patternTransform="translate(1175.99,183.14) scale(-0.2583,0.2583)"><use href="#tileg"/></pattern><pattern id="L33" width="345" height="345" patternUnits="userSpaceOnUse" patternTransform="translate(1003.41,183.14) scale(0.2583)"><use href="#tileg"/></pattern><pattern id="R33" width="345" height="345" patternUnits="userSpaceOnUse" patternTransform="translate(1175.99,183.14) scale(-0.2583,0.2583)"><use href="#tileg"/></pattern><pattern id="L34" width="345" height="345" patternUnits="userSpaceOnUse" patternTransform="translate(1003.41,183.14) scale(0.2583)"><use href="#tileg"/></pattern><pattern id="R34" width="345" height="345" patternUnits="userSpaceOnUse" patternTransform="translate(1175.99,183.14) scale(-0.2583,0.2583)"><use href="#tileg"/></pattern><pattern id="L35" width="345" height="345" patternUnits="userSpaceOnUse" patternTransform="translate(1003.41,183.14) scale(0.2583)"><use href="#tileg"/></pattern><pattern id="R35" width="345" height="345" patternUnits="userSpaceOnUse" patternTransform="translate(1175.99,183.14) scale(-0.2583,0.2583)"><use href="#tileg"/></pattern><pattern id="L36" width="345" height="345" patternUnits="userSpaceOnUse" patternTransform="translate(1003.41,183.14) scale(0.2583)"><use href="#tileg"/></pattern><pattern id="R36" width="345" height="345" patternUnits="userSpaceOnUse" patternTransform="translate(1175.99,183.14) scale(-0.2583,0.2583)"><use href="#tileg"/></pattern><pattern id="L37" width="345" height="345" patternUnits="userSpaceOnUse" patternTransform="translate(1003.41,183.14) scale(0.2583)"><use href="#tileg"/></pattern><pattern id="R37" width="345" height="345" patternUnits="userSpaceOnUse" patternTransform="translate(1175.99,183.14) scale(-0.2583,0.2583)"><use href="#tileg"/></pattern><pattern id="L38" width="345" height="345" patternUnits="userSpaceOnUse" patternTransform="translate(1003.41,183.14) scale(0.2583)"><use href="#tileg"/></pattern><pattern id="R38" width="345" height="345" patternUnits="userSpaceOnUse" patternTransform="translate(1175.99,183.14) scale(-0.2583,0.2583)"><use href="#tileg"/></pattern><pattern id="L39" width="345" height="345" patternUnits="userSpaceOnUse" patternTransform="translate(1003.41,183.14) scale(0.2583)"><use href="#tileg"/></pattern><pattern id="R39" width="345" height="345" patternUnits="userSpaceOnUse" patternTransform="translate(1175.99,183.14) scale(-0.2583,0.2583)"><use href="#tileg"/></pattern><pattern id="L40" width="345" height="345" patternUnits="userSpaceOnUse" patternTransform="translate(1003.41,183.14) scale(0.2583)"><use href="#tileg"/></pattern><pattern id="R40" width="345" height="345" patternUnits="userSpaceOnUse" patternTransform="translate(1175.99,183.14) scale(-0.2583,0.2583)"><use href="#tileg"/></pattern><pattern id="L41" width="345" height="345" patternUnits="userSpaceOnUse" patternTransform="translate(1003.41,183.14) scale(0.2583)"><use href="#tileg"/></pattern><pattern id="R41" width="345" height="345" patternUnits="userSpaceOnUse" patternTransform="translate(1175.99,183.14) scale(-0.2583,0.2583)"><use href="#tileg"/></pattern><pattern id="L42" width="345" height="345" patternUnits="userSpaceOnUse" patternTransform="translate(1003.41,183.14) scale(0.2583)"><use href="#tileg"/></pattern><pattern id="R42" width="345" height="345" patternUnits="userSpaceOnUse" patternTransform="translate(1175.99,183.14) scale(-0.2583,0.2583)"><use href="#tileg"/></pattern><pattern id="L43" width="345" height="345" patternUnits="userSpaceOnUse" patternTransform="translate(1003.41,183.14) scale(0.2583)"><use href="#tileg"/></pattern><pattern id="R43" width="345" height="345" patternUnits="userSpaceOnUse" patternTransform="translate(1175.99,183.14) scale(-0.2583,0.2583)"><use href="#tileg"/></pattern><pattern id="L44" width="345" height="345" patternUnits="userSpaceOnUse" patternTransform="translate(1003.41,183.14) scale(0.2583)"><use href="#tileg"/></pattern><pattern id="R44" width="345" height="345" patternUnits="userSpaceOnUse" patternTransform="translate(1175.99,183.14) scale(-0.2583,0.2583)"><use href="#tileg"/></pattern><pattern id="L45" width="345" height="345" patternUnits="userSpaceOnUse" patternTransform="translate(1003.41,183.14) scale(0.2583)"><use href="#tileg"/></pattern><pattern id="R45" width="345" height="345" patternUnits="userSpaceOnUse" patternTransform="translate(1175.99,183.14) scale(-0.2583,0.2583)"><use href="#tileg"/></pattern><pattern id="L46" width="345" height="345" patternUnits="userSpaceOnUse" patternTransform="translate(1003.41,183.14) scale(0.2583)"><use href="#tileg"/></pattern><pattern id="R46" width="345" height="345" patternUnits="userSpaceOnUse" patternTransform="translate(1175.99,183.14) scale(-0.2583,0.2583)"><use href="#tileg"/></pattern><pattern id="L47" width="345" height="345" patternUnits="userSpaceOnUse" patternTransform="translate(1003.41,183.14) scale(0.2583)"><use href="#tileg"/></pattern><pattern id="R47" width="345" height="345" patternUnits="userSpaceOnUse" patternTransform="translate(1175.99,183.14) scale(-0.2583,0.2583)"><use href="#tileg"/></pattern><pattern id="L48" width="345" height="345" patternUnits="userSpaceOnUse" patternTransform="translate(1003.41,183.14) scale(0.2583)"><use href="#tileg"/></pattern><pattern id="R48" width="345" height="345" patternUnits="userSpaceOnUse" patternTransform="translate(1175.99,183.14) scale(-0.2583,0.2583)"><use href="#tileg"/></pattern><pattern id="L49" width="345" height="345" patternUnits="userSpaceOnUse" patternTransform="translate(1003.41,183.14) scale(0.2583)"><use href="#tileg"/></pattern><pattern id="R49" width="345" height="345" patternUnits="userSpaceOnUse" patternTransform="translate(1175.99,183.14) scale(-0.2583,0.2583)"><use href="#tileg"/></pattern><pattern id="L50" width="345" height="345" patternUnits="userSpaceOnUse" patternTransform="translate(1003.41,183.14) scale(0.2583)"><use href="#tileg"/></pattern><pattern id="R50" width="345" height="345" patternUnits="userSpaceOnUse" patternTransform="translate(1175.99,183.14) scale(-0.2583,0.2583)"><use href="#tileg"/></pattern><pattern id="L51" width="345" height="345" patternUnits="userSpaceOnUse" patternTransform="translate(1003.41,183.14) scale(0.2583)"><use href="#tileg"/></pattern><pattern id="R51" width="345" height="345" patternUnits="userSpaceOnUse" patternTransform="translate(1175.99,183.14) scale(-0.2583,0.2583)"><use href="#tileg"/></pattern><pattern id="L52" width="345" height="345" patternUnits="userSpaceOnUse" patternTransform="translate(1003.41,183.14) scale(0.2583)"><use href="#tileg"/></pattern><pattern id="R52" width="345" height="345" patternUnits="userSpaceOnUse" patternTransform="translate(1175.99,183.14) scale(-0.2583,0.2583)"><use href="#tileg"/></pattern><pattern id="L53" width="345" height="345" patternUnits="userSpaceOnUse" patternTransform="translate(1003.41,183.14) scale(0.2583)"><use href="#tileg"/></pattern><pattern id="R53" width="345" height="345" patternUnits="userSpaceOnUse" patternTransform="translate(1175.99,183.14) scale(-0.2583,0.2583)"><use href="#tileg"/></pattern><pattern id="L54" width="345" height="345" patternUnits="userSpaceOnUse" patternTransform="translate(1003.41,183.14) scale(0.2583)"><use href="#tileg"/></pattern><pattern id="R54" width="345" height="345" patternUnits="userSpaceOnUse" patternTransform="translate(1175.99,183.14) scale(-0.2583,0.2583)"><use href="#tileg"/></pattern><pattern id="L55" width="345" height="345" patternUnits="userSpaceOnUse" patternTransform="translate(1003.41,183.14) scale(0.2583)"><use href="#tileg"/></pattern><pattern id="R55" width="345" height="345" patternUnits="userSpaceOnUse" patternTransform="translate(1175.99,183.14) scale(-0.2583,0.2583)"><use href="#tileg"/></pattern><pattern id="L56" width="345" height="345" patternUnits="userSpaceOnUse" patternTransform="translate(1003.41,183.14) scale(0.2583)"><use href="#tileg"/></pattern><pattern id="R56" width="345" height="345" patternUnits="userSpaceOnUse" patternTransform="translate(1175.99,183.14) scale(-0.2583,0.2583)"><use href="#tileg"/></pattern><pattern id="L57" width="345" height="345" patternUnits="userSpaceOnUse" patternTransform="translate(1003.41,183.14) scale(0.2583)"><use href="#tileg"/></pattern><pattern id="R57" width="345" height="345" patternUnits="userSpaceOnUse" patternTransform="translate(1175.99,183.14) scale(-0.2583,0.2583)"><use href="#tileg"/></pattern><pattern id="L58" width="345" height="345" patternUnits="userSpaceOnUse" patternTransform="translate(1003.41,183.14) scale(0.2583)"><use href="#tileg"/></pattern><pattern id="R58" width="345" height="345" patternUnits="userSpaceOnUse" patternTransform="translate(1175.99,183.14) scale(-0.2583,0.2583)"><use href="#tileg"/></pattern><pattern id="L59" width="345" height="345" patternUnits="userSpaceOnUse" patternTransform="translate(1003.41,183.14) scale(0.2583)"><use href="#tileg"/></pattern><pattern id="R59" width="345" height="345" patternUnits="userSpaceOnUse" patternTransform="translate(1175.99,183.14) scale(-0.2583,0.2583)"><use href="#tileg"/></pattern><pattern id="L60" width="345" height="345" patternUnits="userSpaceOnUse" patternTransform="translate(1003.41,183.14) scale(0.2583)"><use href="#tileg"/></pattern><pattern id="R60" width="345" height="345" patternUnits="userSpaceOnUse" patternTransform="translate(1175.99,183.14) scale(-0.2583,0.2583)"><use href="#tileg"/></pattern><pattern id="L61" width="345" height="345" patternUnits="userSpaceOnUse" patternTransform="translate(1003.41,183.14) scale(0.2583)"><use href="#tileg"/></pattern><pattern id="R61" width="345" height="345" patternUnits="userSpaceOnUse" patternTransform="translate(1175.99,183.14) scale(-0.2583,0.2583)"><use href="#tileg"/></pattern><pattern id="L62" width="345" height="345" patternUnits="userSpaceOnUse" patternTransform="translate(1003.41,183.14) scale(0.2583)"><use href="#tileg"/></pattern><pattern id="R62" width="345" height="345" patternUnits="userSpaceOnUse" patternTransform="translate(1175.99,183.14) scale(-0.2583,0.2583)"><use href="#tileg"/></pattern><pattern id="L63" width="345" height="345" patternUnits="userSpaceOnUse" patternTransform="translate(1003.41,183.14) scale(0.2583)"><use href="#tileg"/></pattern><pattern id="R63" width="345" height="345" patternUnits="userSpaceOnUse" patternTransform="translate(1175.99,183.14) scale(-0.2583,0.2583)"><use href="#tileg"/></pattern><pattern id="L64" width="345" height="345" patternUnits="userSpaceOnUse" patternTransform="translate(1003.51,183.23) scale(0.2580)"><use href="#tileg"/></pattern><pattern id="R64" width="345" height="345" patternUnits="userSpaceOnUse" patternTransform="translate(1175.89,183.23) scale(-0.2580,0.2580)"><use href="#tileg"/></pattern><pattern id="L65" width="345" height="345" patternUnits="userSpaceOnUse" patternTransform="translate(1003.72,183.42) scale(0.2574)"><use href="#tileg"/></pattern><pattern id="R65" width="345" height="345" patternUnits="userSpaceOnUse" patternTransform="translate(1175.68,183.42) scale(-0.2574,0.2574)"><use href="#tileg"/></pattern><pattern id="L66" width="345" height="345" patternUnits="userSpaceOnUse" patternTransform="translate(1003.92,183.61) scale(0.2568)"><use href="#tileg"/></pattern><pattern id="R66" width="345" height="345" patternUnits="userSpaceOnUse" patternTransform="translate(1175.48,183.61) scale(-0.2568,0.2568)"><use href="#tileg"/></pattern><pattern id="L67" width="345" height="345" patternUnits="userSpaceOnUse" patternTransform="translate(1004.12,183.80) scale(0.2562)"><use href="#tileg"/></pattern><pattern id="R67" width="345" height="345" patternUnits="userSpaceOnUse" patternTransform="translate(1175.28,183.80) scale(-0.2562,0.2562)"><use href="#tileg"/></pattern><pattern id="L68" width="345" height="345" patternUnits="userSpaceOnUse" patternTransform="translate(1004.32,184.00) scale(0.2556)"><use href="#tileg"/></pattern><pattern id="R68" width="345" height="345" patternUnits="userSpaceOnUse" patternTransform="translate(1175.08,184.00) scale(-0.2556,0.2556)"><use href="#tileg"/></pattern><pattern id="L69" width="345" height="345" patternUnits="userSpaceOnUse" patternTransform="translate(1004.52,184.20) scale(0.2550)"><use href="#tileg"/></pattern><pattern id="R69" width="345" height="345" patternUnits="userSpaceOnUse" patternTransform="translate(1174.88,184.20) scale(-0.2550,0.2550)"><use href="#tileg"/></pattern><pattern id="L70" width="345" height="345" patternUnits="userSpaceOnUse" patternTransform="translate(1004.73,184.41) scale(0.2544)"><use href="#tileg"/></pattern><pattern id="R70" width="345" height="345" patternUnits="userSpaceOnUse" patternTransform="translate(1174.67,184.41) scale(-0.2544,0.2544)"><use href="#tileg"/></pattern><pattern id="L71" width="345" height="345" patternUnits="userSpaceOnUse" patternTransform="translate(1004.93,184.63) scale(0.2538)"><use href="#tileg"/></pattern><pattern id="R71" width="345" height="345" patternUnits="userSpaceOnUse" patternTransform="translate(1174.47,184.63) scale(-0.2538,0.2538)"><use href="#tileg"/></pattern><pattern id="L72" width="345" height="345" patternUnits="userSpaceOnUse" patternTransform="translate(1005.13,184.84) scale(0.2532)"><use href="#tileg"/></pattern><pattern id="R72" width="345" height="345" patternUnits="userSpaceOnUse" patternTransform="translate(1174.27,184.84) scale(-0.2532,0.2532)"><use href="#tileg"/></pattern><pattern id="L73" width="345" height="345" patternUnits="userSpaceOnUse" patternTransform="translate(1005.33,185.07) scale(0.2526)"><use href="#tileg"/></pattern><pattern id="R73" width="345" height="345" patternUnits="userSpaceOnUse" patternTransform="translate(1174.07,185.07) scale(-0.2526,0.2526)"><use href="#tileg"/></pattern><pattern id="L74" width="345" height="345" patternUnits="userSpaceOnUse" patternTransform="translate(1005.54,185.30) scale(0.2520)"><use href="#tileg"/></pattern><pattern id="R74" width="345" height="345" patternUnits="userSpaceOnUse" patternTransform="translate(1173.86,185.30) scale(-0.2520,0.2520)"><use href="#tileg"/></pattern><pattern id="L75" width="345" height="345" patternUnits="userSpaceOnUse" patternTransform="translate(1005.74,185.53) scale(0.2514)"><use href="#tileg"/></pattern><pattern id="R75" width="345" height="345" patternUnits="userSpaceOnUse" patternTransform="translate(1173.66,185.53) scale(-0.2514,0.2514)"><use href="#tileg"/></pattern><pattern id="L76" width="345" height="345" patternUnits="userSpaceOnUse" patternTransform="translate(1005.94,185.77) scale(0.2508)"><use href="#tileg"/></pattern><pattern id="R76" width="345" height="345" patternUnits="userSpaceOnUse" patternTransform="translate(1173.46,185.77) scale(-0.2508,0.2508)"><use href="#tileg"/></pattern><pattern id="L77" width="345" height="345" patternUnits="userSpaceOnUse" patternTransform="translate(1006.14,186.01) scale(0.2502)"><use href="#tileg"/></pattern><pattern id="R77" width="345" height="345" patternUnits="userSpaceOnUse" patternTransform="translate(1173.26,186.01) scale(-0.2502,0.2502)"><use href="#tileg"/></pattern><pattern id="L78" width="345" height="345" patternUnits="userSpaceOnUse" patternTransform="translate(1006.35,186.25) scale(0.2495)"><use href="#tileg"/></pattern><pattern id="R78" width="345" height="345" patternUnits="userSpaceOnUse" patternTransform="translate(1173.05,186.25) scale(-0.2495,0.2495)"><use href="#tileg"/></pattern><pattern id="L79" width="345" height="345" patternUnits="userSpaceOnUse" patternTransform="translate(1006.55,186.51) scale(0.2489)"><use href="#tileg"/></pattern><pattern id="R79" width="345" height="345" patternUnits="userSpaceOnUse" patternTransform="translate(1172.85,186.51) scale(-0.2489,0.2489)"><use href="#tileg"/></pattern><pattern id="L80" width="345" height="345" patternUnits="userSpaceOnUse" patternTransform="translate(1006.75,186.76) scale(0.2483)"><use href="#tileg"/></pattern><pattern id="R80" width="345" height="345" patternUnits="userSpaceOnUse" patternTransform="translate(1172.65,186.76) scale(-0.2483,0.2483)"><use href="#tileg"/></pattern><pattern id="L81" width="345" height="345" patternUnits="userSpaceOnUse" patternTransform="translate(1006.95,187.03) scale(0.2477)"><use href="#tileg"/></pattern><pattern id="R81" width="345" height="345" patternUnits="userSpaceOnUse" patternTransform="translate(1172.45,187.03) scale(-0.2477,0.2477)"><use href="#tileg"/></pattern><pattern id="L82" width="345" height="345" patternUnits="userSpaceOnUse" patternTransform="translate(1007.16,187.29) scale(0.2471)"><use href="#tileg"/></pattern><pattern id="R82" width="345" height="345" patternUnits="userSpaceOnUse" patternTransform="translate(1172.24,187.29) scale(-0.2471,0.2471)"><use href="#tileg"/></pattern><pattern id="L83" width="345" height="345" patternUnits="userSpaceOnUse" patternTransform="translate(1007.36,187.56) scale(0.2465)"><use href="#tileg"/></pattern><pattern id="R83" width="345" height="345" patternUnits="userSpaceOnUse" patternTransform="translate(1172.04,187.56) scale(-0.2465,0.2465)"><use href="#tileg"/></pattern><pattern id="L84" width="345" height="345" patternUnits="userSpaceOnUse" patternTransform="translate(1007.67,187.84) scale(0.2459)"><use href="#tileg"/></pattern><pattern id="R84" width="345" height="345" patternUnits="userSpaceOnUse" patternTransform="translate(1171.69,187.84) scale(-0.2459,0.2459)"><use href="#tileg"/></pattern><pattern id="L85" width="345" height="345" patternUnits="userSpaceOnUse" patternTransform="translate(1008.10,188.12) scale(0.2453)"><use href="#tileg"/></pattern><pattern id="R85" width="345" height="345" patternUnits="userSpaceOnUse" patternTransform="translate(1171.19,188.12) scale(-0.2453,0.2453)"><use href="#tileg"/></pattern><pattern id="L86" width="345" height="345" patternUnits="userSpaceOnUse" patternTransform="translate(1008.53,188.41) scale(0.2447)"><use href="#tileg"/></pattern><pattern id="R86" width="345" height="345" patternUnits="userSpaceOnUse" patternTransform="translate(1170.70,188.41) scale(-0.2447,0.2447)"><use href="#tileg"/></pattern><pattern id="L87" width="345" height="345" patternUnits="userSpaceOnUse" patternTransform="translate(1008.96,188.70) scale(0.2441)"><use href="#tileg"/></pattern><pattern id="R87" width="345" height="345" patternUnits="userSpaceOnUse" patternTransform="translate(1170.20,188.70) scale(-0.2441,0.2441)"><use href="#tileg"/></pattern><pattern id="L88" width="345" height="345" patternUnits="userSpaceOnUse" patternTransform="translate(1009.38,188.99) scale(0.2435)"><use href="#tileg"/></pattern><pattern id="R88" width="345" height="345" patternUnits="userSpaceOnUse" patternTransform="translate(1169.70,188.99) scale(-0.2435,0.2435)"><use href="#tileg"/></pattern><pattern id="L89" width="345" height="345" patternUnits="userSpaceOnUse" patternTransform="translate(1009.81,189.30) scale(0.2429)"><use href="#tileg"/></pattern><pattern id="R89" width="345" height="345" patternUnits="userSpaceOnUse" patternTransform="translate(1169.21,189.30) scale(-0.2429,0.2429)"><use href="#tileg"/></pattern><pattern id="L90" width="345" height="345" patternUnits="userSpaceOnUse" patternTransform="translate(1010.24,189.60) scale(0.2423)"><use href="#tileg"/></pattern><pattern id="R90" width="345" height="345" patternUnits="userSpaceOnUse" patternTransform="translate(1168.71,189.60) scale(-0.2423,0.2423)"><use href="#tileg"/></pattern><pattern id="L91" width="345" height="345" patternUnits="userSpaceOnUse" patternTransform="translate(1010.67,189.91) scale(0.2417)"><use href="#tileg"/></pattern><pattern id="R91" width="345" height="345" patternUnits="userSpaceOnUse" patternTransform="translate(1168.21,189.91) scale(-0.2417,0.2417)"><use href="#tileg"/></pattern><pattern id="L92" width="345" height="345" patternUnits="userSpaceOnUse" patternTransform="translate(1011.09,190.23) scale(0.2411)"><use href="#tileg"/></pattern><pattern id="R92" width="345" height="345" patternUnits="userSpaceOnUse" patternTransform="translate(1167.72,190.23) scale(-0.2411,0.2411)"><use href="#tileg"/></pattern><pattern id="L93" width="345" height="345" patternUnits="userSpaceOnUse" patternTransform="translate(1011.52,190.55) scale(0.2405)"><use href="#tileg"/></pattern><pattern id="R93" width="345" height="345" patternUnits="userSpaceOnUse" patternTransform="translate(1167.22,190.55) scale(-0.2405,0.2405)"><use href="#tileg"/></pattern><pattern id="L94" width="345" height="345" patternUnits="userSpaceOnUse" patternTransform="translate(1011.95,190.88) scale(0.2398)"><use href="#tileg"/></pattern><pattern id="R94" width="345" height="345" patternUnits="userSpaceOnUse" patternTransform="translate(1166.72,190.88) scale(-0.2398,0.2398)"><use href="#tileg"/></pattern><pattern id="L95" width="345" height="345" patternUnits="userSpaceOnUse" patternTransform="translate(1012.38,191.21) scale(0.2392)"><use href="#tileg"/></pattern><pattern id="R95" width="345" height="345" patternUnits="userSpaceOnUse" patternTransform="translate(1166.23,191.21) scale(-0.2392,0.2392)"><use href="#tileg"/></pattern><pattern id="L96" width="345" height="345" patternUnits="userSpaceOnUse" patternTransform="translate(1012.80,191.54) scale(0.2386)"><use href="#tileg"/></pattern><pattern id="R96" width="345" height="345" patternUnits="userSpaceOnUse" patternTransform="translate(1165.73,191.54) scale(-0.2386,0.2386)"><use href="#tileg"/></pattern><pattern id="L97" width="345" height="345" patternUnits="userSpaceOnUse" patternTransform="translate(1013.23,191.89) scale(0.2380)"><use href="#tileg"/></pattern><pattern id="R97" width="345" height="345" patternUnits="userSpaceOnUse" patternTransform="translate(1165.23,191.89) scale(-0.2380,0.2380)"><use href="#tileg"/></pattern><pattern id="L98" width="345" height="345" patternUnits="userSpaceOnUse" patternTransform="translate(1013.66,192.23) scale(0.2374)"><use href="#tileg"/></pattern><pattern id="R98" width="345" height="345" patternUnits="userSpaceOnUse" patternTransform="translate(1164.74,192.23) scale(-0.2374,0.2374)"><use href="#tileg"/></pattern><pattern id="L99" width="345" height="345" patternUnits="userSpaceOnUse" patternTransform="translate(1014.09,192.58) scale(0.2368)"><use href="#tileg"/></pattern><pattern id="R99" width="345" height="345" patternUnits="userSpaceOnUse" patternTransform="translate(1164.24,192.58) scale(-0.2368,0.2368)"><use href="#tileg"/></pattern><pattern id="L100" width="345" height="345" patternUnits="userSpaceOnUse" patternTransform="translate(1014.51,192.94) scale(0.2362)"><use href="#tileg"/></pattern><pattern id="R100" width="345" height="345" patternUnits="userSpaceOnUse" patternTransform="translate(1163.74,192.94) scale(-0.2362,0.2362)"><use href="#tileg"/></pattern><pattern id="L101" width="345" height="345" patternUnits="userSpaceOnUse" patternTransform="translate(1014.94,193.30) scale(0.2356)"><use href="#tileg"/></pattern><pattern id="R101" width="345" height="345" patternUnits="userSpaceOnUse" patternTransform="translate(1163.25,193.30) scale(-0.2356,0.2356)"><use href="#tileg"/></pattern><pattern id="L102" width="345" height="345" patternUnits="userSpaceOnUse" patternTransform="translate(1015.37,193.67) scale(0.2350)"><use href="#tileg"/></pattern><pattern id="R102" width="345" height="345" patternUnits="userSpaceOnUse" patternTransform="translate(1162.75,193.67) scale(-0.2350,0.2350)"><use href="#tileg"/></pattern><pattern id="L103" width="345" height="345" patternUnits="userSpaceOnUse" patternTransform="translate(1015.80,194.04) scale(0.2344)"><use href="#tileg"/></pattern><pattern id="R103" width="345" height="345" patternUnits="userSpaceOnUse" patternTransform="translate(1162.25,194.04) scale(-0.2344,0.2344)"><use href="#tileg"/></pattern><pattern id="L104" width="345" height="345" patternUnits="userSpaceOnUse" patternTransform="translate(1016.21,194.42) scale(0.2338)"><use href="#tileg"/></pattern><pattern id="R104" width="345" height="345" patternUnits="userSpaceOnUse" patternTransform="translate(1161.77,194.42) scale(-0.2338,0.2338)"><use href="#tileg"/></pattern><pattern id="L105" width="345" height="345" patternUnits="userSpaceOnUse" patternTransform="translate(1016.60,194.80) scale(0.2332)"><use href="#tileg"/></pattern><pattern id="R105" width="345" height="345" patternUnits="userSpaceOnUse" patternTransform="translate(1161.30,194.80) scale(-0.2332,0.2332)"><use href="#tileg"/></pattern><pattern id="L106" width="345" height="345" patternUnits="userSpaceOnUse" patternTransform="translate(1017.00,195.19) scale(0.2326)"><use href="#tileg"/></pattern><pattern id="R106" width="345" height="345" patternUnits="userSpaceOnUse" patternTransform="translate(1160.84,195.19) scale(-0.2326,0.2326)"><use href="#tileg"/></pattern><pattern id="L107" width="345" height="345" patternUnits="userSpaceOnUse" patternTransform="translate(1017.40,195.58) scale(0.2320)"><use href="#tileg"/></pattern><pattern id="R107" width="345" height="345" patternUnits="userSpaceOnUse" patternTransform="translate(1160.37,195.58) scale(-0.2320,0.2320)"><use href="#tileg"/></pattern><pattern id="L108" width="345" height="345" patternUnits="userSpaceOnUse" patternTransform="translate(1017.80,195.98) scale(0.2314)"><use href="#tileg"/></pattern><pattern id="R108" width="345" height="345" patternUnits="userSpaceOnUse" patternTransform="translate(1159.90,195.98) scale(-0.2314,0.2314)"><use href="#tileg"/></pattern><pattern id="L109" width="345" height="345" patternUnits="userSpaceOnUse" patternTransform="translate(1018.19,196.38) scale(0.2308)"><use href="#tileg"/></pattern><pattern id="R109" width="345" height="345" patternUnits="userSpaceOnUse" patternTransform="translate(1159.44,196.38) scale(-0.2308,0.2308)"><use href="#tileg"/></pattern><pattern id="L110" width="345" height="345" patternUnits="userSpaceOnUse" patternTransform="translate(1018.59,196.79) scale(0.2302)"><use href="#tileg"/></pattern><pattern id="R110" width="345" height="345" patternUnits="userSpaceOnUse" patternTransform="translate(1158.97,196.79) scale(-0.2302,0.2302)"><use href="#tileg"/></pattern><pattern id="L111" width="345" height="345" patternUnits="userSpaceOnUse" patternTransform="translate(1018.99,197.21) scale(0.2295)"><use href="#tileg"/></pattern><pattern id="R111" width="345" height="345" patternUnits="userSpaceOnUse" patternTransform="translate(1158.51,197.21) scale(-0.2295,0.2295)"><use href="#tileg"/></pattern><pattern id="L112" width="345" height="345" patternUnits="userSpaceOnUse" patternTransform="translate(1019.39,197.63) scale(0.2289)"><use href="#tileg"/></pattern><pattern id="R112" width="345" height="345" patternUnits="userSpaceOnUse" patternTransform="translate(1158.04,197.63) scale(-0.2289,0.2289)"><use href="#tileg"/></pattern><pattern id="L113" width="345" height="345" patternUnits="userSpaceOnUse" patternTransform="translate(1019.78,198.05) scale(0.2283)"><use href="#tileg"/></pattern><pattern id="R113" width="345" height="345" patternUnits="userSpaceOnUse" patternTransform="translate(1157.57,198.05) scale(-0.2283,0.2283)"><use href="#tileg"/></pattern><pattern id="L114" width="345" height="345" patternUnits="userSpaceOnUse" patternTransform="translate(1020.18,198.48) scale(0.2277)"><use href="#tileg"/></pattern><pattern id="R114" width="345" height="345" patternUnits="userSpaceOnUse" patternTransform="translate(1157.11,198.48) scale(-0.2277,0.2277)"><use href="#tileg"/></pattern><pattern id="L115" width="345" height="345" patternUnits="userSpaceOnUse" patternTransform="translate(1020.58,198.92) scale(0.2271)"><use href="#tileg"/></pattern><pattern id="R115" width="345" height="345" patternUnits="userSpaceOnUse" patternTransform="translate(1156.64,198.92) scale(-0.2271,0.2271)"><use href="#tileg"/></pattern><pattern id="L116" width="345" height="345" patternUnits="userSpaceOnUse" patternTransform="translate(1020.97,199.36) scale(0.2265)"><use href="#tileg"/></pattern><pattern id="R116" width="345" height="345" patternUnits="userSpaceOnUse" patternTransform="translate(1156.17,199.36) scale(-0.2265,0.2265)"><use href="#tileg"/></pattern><pattern id="L117" width="345" height="345" patternUnits="userSpaceOnUse" patternTransform="translate(1021.37,199.80) scale(0.2259)"><use href="#tileg"/></pattern><pattern id="R117" width="345" height="345" patternUnits="userSpaceOnUse" patternTransform="translate(1155.71,199.80) scale(-0.2259,0.2259)"><use href="#tileg"/></pattern><pattern id="L118" width="345" height="345" patternUnits="userSpaceOnUse" patternTransform="translate(1021.77,200.25) scale(0.2253)"><use href="#tileg"/></pattern><pattern id="R118" width="345" height="345" patternUnits="userSpaceOnUse" patternTransform="translate(1155.24,200.25) scale(-0.2253,0.2253)"><use href="#tileg"/></pattern><pattern id="L119" width="345" height="345" patternUnits="userSpaceOnUse" patternTransform="translate(1022.17,200.71) scale(0.2247)"><use href="#tileg"/></pattern><pattern id="R119" width="345" height="345" patternUnits="userSpaceOnUse" patternTransform="translate(1154.77,200.71) scale(-0.2247,0.2247)"><use href="#tileg"/></pattern><pattern id="L120" width="345" height="345" patternUnits="userSpaceOnUse" patternTransform="translate(1022.56,201.17) scale(0.2241)"><use href="#tileg"/></pattern><pattern id="R120" width="345" height="345" patternUnits="userSpaceOnUse" patternTransform="translate(1154.31,201.17) scale(-0.2241,0.2241)"><use href="#tileg"/></pattern><pattern id="L121" width="345" height="345" patternUnits="userSpaceOnUse" patternTransform="translate(1022.96,201.64) scale(0.2235)"><use href="#tileg"/></pattern><pattern id="R121" width="345" height="345" patternUnits="userSpaceOnUse" patternTransform="translate(1153.84,201.64) scale(-0.2235,0.2235)"><use href="#tileg"/></pattern><pattern id="L122" width="345" height="345" patternUnits="userSpaceOnUse" patternTransform="translate(1023.36,202.11) scale(0.2229)"><use href="#tileg"/></pattern><pattern id="R122" width="345" height="345" patternUnits="userSpaceOnUse" patternTransform="translate(1153.37,202.11) scale(-0.2229,0.2229)"><use href="#tileg"/></pattern><pattern id="L123" width="345" height="345" patternUnits="userSpaceOnUse" patternTransform="translate(1023.76,202.59) scale(0.2223)"><use href="#tileg"/></pattern><pattern id="R123" width="345" height="345" patternUnits="userSpaceOnUse" patternTransform="translate(1152.91,202.59) scale(-0.2223,0.2223)"><use href="#tileg"/></pattern><pattern id="L124" width="345" height="345" patternUnits="userSpaceOnUse" patternTransform="translate(1024.15,203.07) scale(0.2217)"><use href="#tileg"/></pattern><pattern id="R124" width="345" height="345" patternUnits="userSpaceOnUse" patternTransform="translate(1152.44,203.07) scale(-0.2217,0.2217)"><use href="#tileg"/></pattern><pattern id="L125" width="345" height="345" patternUnits="userSpaceOnUse" patternTransform="translate(1024.55,203.56) scale(0.2211)"><use href="#tileg"/></pattern><pattern id="R125" width="345" height="345" patternUnits="userSpaceOnUse" patternTransform="translate(1151.97,203.56) scale(-0.2211,0.2211)"><use href="#tileg"/></pattern><pattern id="L126" width="345" height="345" patternUnits="userSpaceOnUse" patternTransform="translate(1024.95,204.06) scale(0.2205)"><use href="#tileg"/></pattern><pattern id="R126" width="345" height="345" patternUnits="userSpaceOnUse" patternTransform="translate(1151.51,204.06) scale(-0.2205,0.2205)"><use href="#tileg"/></pattern><pattern id="L127" width="345" height="345" patternUnits="userSpaceOnUse" patternTransform="translate(1025.34,204.56) scale(0.2198)"><use href="#tileg"/></pattern><pattern id="R127" width="345" height="345" patternUnits="userSpaceOnUse" patternTransform="translate(1151.04,204.56) scale(-0.2198,0.2198)"><use href="#tileg"/></pattern><pattern id="L128" width="345" height="345" patternUnits="userSpaceOnUse" patternTransform="translate(1025.74,205.06) scale(0.2192)"><use href="#tileg"/></pattern><pattern id="R128" width="345" height="345" patternUnits="userSpaceOnUse" patternTransform="translate(1150.57,205.06) scale(-0.2192,0.2192)"><use href="#tileg"/></pattern><pattern id="L129" width="345" height="345" patternUnits="userSpaceOnUse" patternTransform="translate(1026.14,205.58) scale(0.2186)"><use href="#tileg"/></pattern><pattern id="R129" width="345" height="345" patternUnits="userSpaceOnUse" patternTransform="translate(1150.11,205.58) scale(-0.2186,0.2186)"><use href="#tileg"/></pattern><pattern id="L130" width="345" height="345" patternUnits="userSpaceOnUse" patternTransform="translate(1026.54,206.09) scale(0.2180)"><use href="#tileg"/></pattern><pattern id="R130" width="345" height="345" patternUnits="userSpaceOnUse" patternTransform="translate(1149.64,206.09) scale(-0.2180,0.2180)"><use href="#tileg"/></pattern><pattern id="L131" width="345" height="345" patternUnits="userSpaceOnUse" patternTransform="translate(1026.93,206.61) scale(0.2174)"><use href="#tileg"/></pattern><pattern id="R131" width="345" height="345" patternUnits="userSpaceOnUse" patternTransform="translate(1149.17,206.61) scale(-0.2174,0.2174)"><use href="#tileg"/></pattern><pattern id="L132" width="345" height="345" patternUnits="userSpaceOnUse" patternTransform="translate(1027.33,207.14) scale(0.2168)"><use href="#tileg"/></pattern><pattern id="R132" width="345" height="345" patternUnits="userSpaceOnUse" patternTransform="translate(1148.71,207.14) scale(-0.2168,0.2168)"><use href="#tileg"/></pattern><pattern id="L133" width="345" height="345" patternUnits="userSpaceOnUse" patternTransform="translate(1027.73,207.68) scale(0.2162)"><use href="#tileg"/></pattern><pattern id="R133" width="345" height="345" patternUnits="userSpaceOnUse" patternTransform="translate(1148.24,207.68) scale(-0.2162,0.2162)"><use href="#tileg"/></pattern><pattern id="L134" width="345" height="345" patternUnits="userSpaceOnUse" patternTransform="translate(1028.12,208.22) scale(0.2156)"><use href="#tileg"/></pattern><pattern id="R134" width="345" height="345" patternUnits="userSpaceOnUse" patternTransform="translate(1147.77,208.22) scale(-0.2156,0.2156)"><use href="#tileg"/></pattern><pattern id="L135" width="345" height="345" patternUnits="userSpaceOnUse" patternTransform="translate(1028.52,208.76) scale(0.2150)"><use href="#tileg"/></pattern><pattern id="R135" width="345" height="345" patternUnits="userSpaceOnUse" patternTransform="translate(1147.31,208.76) scale(-0.2150,0.2150)"><use href="#tileg"/></pattern><pattern id="L136" width="345" height="345" patternUnits="userSpaceOnUse" patternTransform="translate(1028.92,209.31) scale(0.2144)"><use href="#tileg"/></pattern><pattern id="R136" width="345" height="345" patternUnits="userSpaceOnUse" patternTransform="translate(1146.84,209.31) scale(-0.2144,0.2144)"><use href="#tileg"/></pattern><pattern id="L137" width="345" height="345" patternUnits="userSpaceOnUse" patternTransform="translate(1029.32,209.87) scale(0.2138)"><use href="#tileg"/></pattern><pattern id="R137" width="345" height="345" patternUnits="userSpaceOnUse" patternTransform="translate(1146.37,209.87) scale(-0.2138,0.2138)"><use href="#tileg"/></pattern><pattern id="L138" width="345" height="345" patternUnits="userSpaceOnUse" patternTransform="translate(1029.71,210.43) scale(0.2132)"><use href="#tileg"/></pattern><pattern id="R138" width="345" height="345" patternUnits="userSpaceOnUse" patternTransform="translate(1145.91,210.43) scale(-0.2132,0.2132)"><use href="#tileg"/></pattern><pattern id="L139" width="345" height="345" patternUnits="userSpaceOnUse" patternTransform="translate(1030.11,211.00) scale(0.2126)"><use href="#tileg"/></pattern><pattern id="R139" width="345" height="345" patternUnits="userSpaceOnUse" patternTransform="translate(1145.44,211.00) scale(-0.2126,0.2126)"><use href="#tileg"/></pattern><pattern id="L140" width="345" height="345" patternUnits="userSpaceOnUse" patternTransform="translate(1030.51,211.57) scale(0.2120)"><use href="#tileg"/></pattern><pattern id="R140" width="345" height="345" patternUnits="userSpaceOnUse" patternTransform="translate(1144.97,211.57) scale(-0.2120,0.2120)"><use href="#tileg"/></pattern><pattern id="L141" width="345" height="345" patternUnits="userSpaceOnUse" patternTransform="translate(1030.91,212.15) scale(0.2114)"><use href="#tileg"/></pattern><pattern id="R141" width="345" height="345" patternUnits="userSpaceOnUse" patternTransform="translate(1144.51,212.15) scale(-0.2114,0.2114)"><use href="#tileg"/></pattern><pattern id="L142" width="345" height="345" patternUnits="userSpaceOnUse" patternTransform="translate(1031.30,212.73) scale(0.2108)"><use href="#tileg"/></pattern><pattern id="R142" width="345" height="345" patternUnits="userSpaceOnUse" patternTransform="translate(1144.04,212.73) scale(-0.2108,0.2108)"><use href="#tileg"/></pattern><pattern id="L143" width="345" height="345" patternUnits="userSpaceOnUse" patternTransform="translate(1031.51,213.32) scale(0.2102)"><use href="#tileg"/></pattern><pattern id="R143" width="345" height="345" patternUnits="userSpaceOnUse" patternTransform="translate(1143.77,213.32) scale(-0.2102,0.2102)"><use href="#tileg"/></pattern><pattern id="L144" width="345" height="345" patternUnits="userSpaceOnUse" patternTransform="translate(1031.71,213.92) scale(0.2095)"><use href="#tileg"/></pattern><pattern id="R144" width="345" height="345" patternUnits="userSpaceOnUse" patternTransform="translate(1143.50,213.92) scale(-0.2095,0.2095)"><use href="#tileg"/></pattern><pattern id="L145" width="345" height="345" patternUnits="userSpaceOnUse" patternTransform="translate(1031.91,214.52) scale(0.2089)"><use href="#tileg"/></pattern><pattern id="R145" width="345" height="345" patternUnits="userSpaceOnUse" patternTransform="translate(1143.23,214.52) scale(-0.2089,0.2089)"><use href="#tileg"/></pattern><pattern id="L146" width="345" height="345" patternUnits="userSpaceOnUse" patternTransform="translate(1032.11,215.13) scale(0.2083)"><use href="#tileg"/></pattern><pattern id="R146" width="345" height="345" patternUnits="userSpaceOnUse" patternTransform="translate(1142.95,215.13) scale(-0.2083,0.2083)"><use href="#tileg"/></pattern><pattern id="L147" width="345" height="345" patternUnits="userSpaceOnUse" patternTransform="translate(1032.31,215.74) scale(0.2077)"><use href="#tileg"/></pattern><pattern id="R147" width="345" height="345" patternUnits="userSpaceOnUse" patternTransform="translate(1142.68,215.74) scale(-0.2077,0.2077)"><use href="#tileg"/></pattern><pattern id="L148" width="345" height="345" patternUnits="userSpaceOnUse" patternTransform="translate(1032.52,216.36) scale(0.2071)"><use href="#tileg"/></pattern><pattern id="R148" width="345" height="345" patternUnits="userSpaceOnUse" patternTransform="translate(1142.41,216.36) scale(-0.2071,0.2071)"><use href="#tileg"/></pattern><pattern id="L149" width="345" height="345" patternUnits="userSpaceOnUse" patternTransform="translate(1032.72,216.99) scale(0.2065)"><use href="#tileg"/></pattern><pattern id="R149" width="345" height="345" patternUnits="userSpaceOnUse" patternTransform="translate(1142.14,216.99) scale(-0.2065,0.2065)"><use href="#tileg"/></pattern><pattern id="L150" width="345" height="345" patternUnits="userSpaceOnUse" patternTransform="translate(1032.92,217.62) scale(0.2059)"><use href="#tileg"/></pattern><pattern id="R150" width="345" height="345" patternUnits="userSpaceOnUse" patternTransform="translate(1141.87,217.62) scale(-0.2059,0.2059)"><use href="#tileg"/></pattern><pattern id="L151" width="345" height="345" patternUnits="userSpaceOnUse" patternTransform="translate(1033.12,218.25) scale(0.2053)"><use href="#tileg"/></pattern><pattern id="R151" width="345" height="345" patternUnits="userSpaceOnUse" patternTransform="translate(1141.60,218.25) scale(-0.2053,0.2053)"><use href="#tileg"/></pattern><pattern id="L152" width="345" height="345" patternUnits="userSpaceOnUse" patternTransform="translate(1033.33,218.90) scale(0.2047)"><use href="#tileg"/></pattern><pattern id="R152" width="345" height="345" patternUnits="userSpaceOnUse" patternTransform="translate(1141.32,218.90) scale(-0.2047,0.2047)"><use href="#tileg"/></pattern><pattern id="L153" width="345" height="345" patternUnits="userSpaceOnUse" patternTransform="translate(1033.53,219.55) scale(0.2041)"><use href="#tileg"/></pattern><pattern id="R153" width="345" height="345" patternUnits="userSpaceOnUse" patternTransform="translate(1141.05,219.55) scale(-0.2041,0.2041)"><use href="#tileg"/></pattern><pattern id="L154" width="345" height="345" patternUnits="userSpaceOnUse" patternTransform="translate(1033.73,220.20) scale(0.2035)"><use href="#tileg"/></pattern><pattern id="R154" width="345" height="345" patternUnits="userSpaceOnUse" patternTransform="translate(1140.78,220.20) scale(-0.2035,0.2035)"><use href="#tileg"/></pattern><pattern id="L155" width="345" height="345" patternUnits="userSpaceOnUse" patternTransform="translate(1033.93,220.86) scale(0.2029)"><use href="#tileg"/></pattern><pattern id="R155" width="345" height="345" patternUnits="userSpaceOnUse" patternTransform="translate(1140.51,220.86) scale(-0.2029,0.2029)"><use href="#tileg"/></pattern><pattern id="L156" width="345" height="345" patternUnits="userSpaceOnUse" patternTransform="translate(1034.14,221.53) scale(0.2023)"><use href="#tileg"/></pattern><pattern id="R156" width="345" height="345" patternUnits="userSpaceOnUse" patternTransform="translate(1140.24,221.53) scale(-0.2023,0.2023)"><use href="#tileg"/></pattern><pattern id="L157" width="345" height="345" patternUnits="userSpaceOnUse" patternTransform="translate(1034.34,222.20) scale(0.2017)"><use href="#tileg"/></pattern><pattern id="R157" width="345" height="345" patternUnits="userSpaceOnUse" patternTransform="translate(1139.96,222.20) scale(-0.2017,0.2017)"><use href="#tileg"/></pattern><pattern id="L158" width="345" height="345" patternUnits="userSpaceOnUse" patternTransform="translate(1034.54,222.88) scale(0.2011)"><use href="#tileg"/></pattern><pattern id="R158" width="345" height="345" patternUnits="userSpaceOnUse" patternTransform="translate(1139.69,222.88) scale(-0.2011,0.2011)"><use href="#tileg"/></pattern><pattern id="L159" width="345" height="345" patternUnits="userSpaceOnUse" patternTransform="translate(1034.74,223.56) scale(0.2005)"><use href="#tileg"/></pattern><pattern id="R159" width="345" height="345" patternUnits="userSpaceOnUse" patternTransform="translate(1139.42,223.56) scale(-0.2005,0.2005)"><use href="#tileg"/></pattern><pattern id="L160" width="345" height="345" patternUnits="userSpaceOnUse" patternTransform="translate(1034.95,224.25) scale(0.1998)"><use href="#tileg"/></pattern><pattern id="R160" width="345" height="345" patternUnits="userSpaceOnUse" patternTransform="translate(1139.15,224.25) scale(-0.1998,0.1998)"><use href="#tileg"/></pattern><pattern id="L161" width="345" height="345" patternUnits="userSpaceOnUse" patternTransform="translate(1035.15,224.95) scale(0.1992)"><use href="#tileg"/></pattern><pattern id="R161" width="345" height="345" patternUnits="userSpaceOnUse" patternTransform="translate(1138.88,224.95) scale(-0.1992,0.1992)"><use href="#tileg"/></pattern><pattern id="L162" width="345" height="345" patternUnits="userSpaceOnUse" patternTransform="translate(1035.35,225.65) scale(0.1986)"><use href="#tileg"/></pattern><pattern id="R162" width="345" height="345" patternUnits="userSpaceOnUse" patternTransform="translate(1138.61,225.65) scale(-0.1986,0.1986)"><use href="#tileg"/></pattern><pattern id="L163" width="345" height="345" patternUnits="userSpaceOnUse" patternTransform="translate(1035.55,226.36) scale(0.1980)"><use href="#tileg"/></pattern><pattern id="R163" width="345" height="345" patternUnits="userSpaceOnUse" patternTransform="translate(1138.33,226.36) scale(-0.1980,0.1980)"><use href="#tileg"/></pattern><pattern id="L164" width="345" height="345" patternUnits="userSpaceOnUse" patternTransform="translate(1035.76,227.08) scale(0.1974)"><use href="#tileg"/></pattern><pattern id="R164" width="345" height="345" patternUnits="userSpaceOnUse" patternTransform="translate(1138.06,227.08) scale(-0.1974,0.1974)"><use href="#tileg"/></pattern><pattern id="L165" width="345" height="345" patternUnits="userSpaceOnUse" patternTransform="translate(1035.96,227.80) scale(0.1968)"><use href="#tileg"/></pattern><pattern id="R165" width="345" height="345" patternUnits="userSpaceOnUse" patternTransform="translate(1137.79,227.80) scale(-0.1968,0.1968)"><use href="#tileg"/></pattern><pattern id="L166" width="345" height="345" patternUnits="userSpaceOnUse" patternTransform="translate(1036.16,228.53) scale(0.1962)"><use href="#tileg"/></pattern><pattern id="R166" width="345" height="345" patternUnits="userSpaceOnUse" patternTransform="translate(1137.52,228.53) scale(-0.1962,0.1962)"><use href="#tileg"/></pattern><pattern id="L167" width="345" height="345" patternUnits="userSpaceOnUse" patternTransform="translate(1036.36,229.26) scale(0.1956)"><use href="#tileg"/></pattern><pattern id="R167" width="345" height="345" patternUnits="userSpaceOnUse" patternTransform="translate(1137.25,229.26) scale(-0.1956,0.1956)"><use href="#tileg"/></pattern><pattern id="L168" width="345" height="345" patternUnits="userSpaceOnUse" patternTransform="translate(1036.57,230.00) scale(0.1950)"><use href="#tileg"/></pattern><pattern id="R168" width="345" height="345" patternUnits="userSpaceOnUse" patternTransform="translate(1136.98,230.00) scale(-0.1950,0.1950)"><use href="#tileg"/></pattern><pattern id="L169" width="345" height="345" patternUnits="userSpaceOnUse" patternTransform="translate(1036.77,230.74) scale(0.1944)"><use href="#tileg"/></pattern><pattern id="R169" width="345" height="345" patternUnits="userSpaceOnUse" patternTransform="translate(1136.70,230.74) scale(-0.1944,0.1944)"><use href="#tileg"/></pattern><pattern id="L170" width="345" height="345" patternUnits="userSpaceOnUse" patternTransform="translate(1036.97,231.50) scale(0.1938)"><use href="#tileg"/></pattern><pattern id="R170" width="345" height="345" patternUnits="userSpaceOnUse" patternTransform="translate(1136.43,231.50) scale(-0.1938,0.1938)"><use href="#tileg"/></pattern><pattern id="L171" width="345" height="345" patternUnits="userSpaceOnUse" patternTransform="translate(1037.17,232.26) scale(0.1932)"><use href="#tileg"/></pattern><pattern id="R171" width="345" height="345" patternUnits="userSpaceOnUse" patternTransform="translate(1136.16,232.26) scale(-0.1932,0.1932)"><use href="#tileg"/></pattern><pattern id="L172" width="345" height="345" patternUnits="userSpaceOnUse" patternTransform="translate(1037.38,233.02) scale(0.1926)"><use href="#tileg"/></pattern><pattern id="R172" width="345" height="345" patternUnits="userSpaceOnUse" patternTransform="translate(1135.89,233.02) scale(-0.1926,0.1926)"><use href="#tileg"/></pattern><pattern id="L173" width="345" height="345" patternUnits="userSpaceOnUse" patternTransform="translate(1037.58,233.79) scale(0.1920)"><use href="#tileg"/></pattern><pattern id="R173" width="345" height="345" patternUnits="userSpaceOnUse" patternTransform="translate(1135.62,233.79) scale(-0.1920,0.1920)"><use href="#tileg"/></pattern><pattern id="L174" width="345" height="345" patternUnits="userSpaceOnUse" patternTransform="translate(1037.69,234.22) scale(0.1916)"><use href="#tileg"/></pattern><pattern id="R174" width="345" height="345" patternUnits="userSpaceOnUse" patternTransform="translate(1135.44,234.22) scale(-0.1916,0.1916)"><use href="#tileg"/></pattern><pattern id="L175" width="345" height="345" patternUnits="userSpaceOnUse" patternTransform="translate(1037.71,234.30) scale(0.1916)"><use href="#tileg"/></pattern><pattern id="R175" width="345" height="345" patternUnits="userSpaceOnUse" patternTransform="translate(1135.35,234.30) scale(-0.1916,0.1916)"><use href="#tileg"/></pattern><pattern id="L176" width="345" height="345" patternUnits="userSpaceOnUse" patternTransform="translate(1037.73,234.38) scale(0.1915)"><use href="#tileg"/></pattern><pattern id="R176" width="345" height="345" patternUnits="userSpaceOnUse" patternTransform="translate(1135.25,234.38) scale(-0.1915,0.1915)"><use href="#tileg"/></pattern><pattern id="L177" width="345" height="345" patternUnits="userSpaceOnUse" patternTransform="translate(1037.75,234.46) scale(0.1914)"><use href="#tileg"/></pattern><pattern id="R177" width="345" height="345" patternUnits="userSpaceOnUse" patternTransform="translate(1135.16,234.46) scale(-0.1914,0.1914)"><use href="#tileg"/></pattern><pattern id="L178" width="345" height="345" patternUnits="userSpaceOnUse" patternTransform="translate(1037.77,234.55) scale(0.1914)"><use href="#tileg"/></pattern><pattern id="R178" width="345" height="345" patternUnits="userSpaceOnUse" patternTransform="translate(1135.07,234.55) scale(-0.1914,0.1914)"><use href="#tileg"/></pattern><pattern id="L179" width="345" height="345" patternUnits="userSpaceOnUse" patternTransform="translate(1037.79,234.63) scale(0.1913)"><use href="#tileg"/></pattern><pattern id="R179" width="345" height="345" patternUnits="userSpaceOnUse" patternTransform="translate(1134.98,234.63) scale(-0.1913,0.1913)"><use href="#tileg"/></pattern><pattern id="L180" width="345" height="345" patternUnits="userSpaceOnUse" patternTransform="translate(1037.82,234.71) scale(0.1913)"><use href="#tileg"/></pattern><pattern id="R180" width="345" height="345" patternUnits="userSpaceOnUse" patternTransform="translate(1134.89,234.71) scale(-0.1913,0.1913)"><use href="#tileg"/></pattern><pattern id="L181" width="345" height="345" patternUnits="userSpaceOnUse" patternTransform="translate(1037.84,234.80) scale(0.1912)"><use href="#tileg"/></pattern><pattern id="R181" width="345" height="345" patternUnits="userSpaceOnUse" patternTransform="translate(1134.80,234.80) scale(-0.1912,0.1912)"><use href="#tileg"/></pattern><pattern id="L182" width="345" height="345" patternUnits="userSpaceOnUse" patternTransform="translate(1037.86,234.88) scale(0.1911)"><use href="#tileg"/></pattern><pattern id="R182" width="345" height="345" patternUnits="userSpaceOnUse" patternTransform="translate(1134.71,234.88) scale(-0.1911,0.1911)"><use href="#tileg"/></pattern><pattern id="L183" width="345" height="345" patternUnits="userSpaceOnUse" patternTransform="translate(1037.88,234.97) scale(0.1911)"><use href="#tileg"/></pattern><pattern id="R183" width="345" height="345" patternUnits="userSpaceOnUse" patternTransform="translate(1134.62,234.97) scale(-0.1911,0.1911)"><use href="#tileg"/></pattern><pattern id="L184" width="345" height="345" patternUnits="userSpaceOnUse" patternTransform="translate(1037.90,235.06) scale(0.1910)"><use href="#tileg"/></pattern><pattern id="R184" width="345" height="345" patternUnits="userSpaceOnUse" patternTransform="translate(1134.53,235.06) scale(-0.1910,0.1910)"><use href="#tileg"/></pattern><pattern id="L185" width="345" height="345" patternUnits="userSpaceOnUse" patternTransform="translate(1037.92,235.14) scale(0.1909)"><use href="#tileg"/></pattern><pattern id="R185" width="345" height="345" patternUnits="userSpaceOnUse" patternTransform="translate(1134.44,235.14) scale(-0.1909,0.1909)"><use href="#tileg"/></pattern><pattern id="L186" width="345" height="345" patternUnits="userSpaceOnUse" patternTransform="translate(1037.94,235.23) scale(0.1909)"><use href="#tileg"/></pattern><pattern id="R186" width="345" height="345" patternUnits="userSpaceOnUse" patternTransform="translate(1134.35,235.23) scale(-0.1909,0.1909)"><use href="#tileg"/></pattern><pattern id="L187" width="345" height="345" patternUnits="userSpaceOnUse" patternTransform="translate(1037.96,235.32) scale(0.1908)"><use href="#tileg"/></pattern><pattern id="R187" width="345" height="345" patternUnits="userSpaceOnUse" patternTransform="translate(1134.26,235.32) scale(-0.1908,0.1908)"><use href="#tileg"/></pattern><pattern id="L188" width="345" height="345" patternUnits="userSpaceOnUse" patternTransform="translate(1038.10,235.41) scale(0.1908)"><use href="#tileg"/></pattern><pattern id="R188" width="345" height="345" patternUnits="userSpaceOnUse" patternTransform="translate(1134.05,235.41) scale(-0.1908,0.1908)"><use href="#tileg"/></pattern><pattern id="L189" width="345" height="345" patternUnits="userSpaceOnUse" patternTransform="translate(1038.24,235.50) scale(0.1907)"><use href="#tileg"/></pattern><pattern id="R189" width="345" height="345" patternUnits="userSpaceOnUse" patternTransform="translate(1133.84,235.50) scale(-0.1907,0.1907)"><use href="#tileg"/></pattern><pattern id="L190" width="345" height="345" patternUnits="userSpaceOnUse" patternTransform="translate(1038.39,235.59) scale(0.1906)"><use href="#tileg"/></pattern><pattern id="R190" width="345" height="345" patternUnits="userSpaceOnUse" patternTransform="translate(1133.63,235.59) scale(-0.1906,0.1906)"><use href="#tileg"/></pattern><pattern id="L191" width="345" height="345" patternUnits="userSpaceOnUse" patternTransform="translate(1038.53,235.68) scale(0.1906)"><use href="#tileg"/></pattern><pattern id="R191" width="345" height="345" patternUnits="userSpaceOnUse" patternTransform="translate(1133.42,235.68) scale(-0.1906,0.1906)"><use href="#tileg"/></pattern><pattern id="L192" width="345" height="345" patternUnits="userSpaceOnUse" patternTransform="translate(1038.67,235.77) scale(0.1905)"><use href="#tileg"/></pattern><pattern id="R192" width="345" height="345" patternUnits="userSpaceOnUse" patternTransform="translate(1133.21,235.77) scale(-0.1905,0.1905)"><use href="#tileg"/></pattern><pattern id="L193" width="345" height="345" patternUnits="userSpaceOnUse" patternTransform="translate(1038.81,235.87) scale(0.1904)"><use href="#tileg"/></pattern><pattern id="R193" width="345" height="345" patternUnits="userSpaceOnUse" patternTransform="translate(1133.00,235.87) scale(-0.1904,0.1904)"><use href="#tileg"/></pattern><pattern id="L194" width="345" height="345" patternUnits="userSpaceOnUse" patternTransform="translate(1038.95,235.96) scale(0.1904)"><use href="#tileg"/></pattern><pattern id="R194" width="345" height="345" patternUnits="userSpaceOnUse" patternTransform="translate(1132.79,235.96) scale(-0.1904,0.1904)"><use href="#tileg"/></pattern><pattern id="L195" width="345" height="345" patternUnits="userSpaceOnUse" patternTransform="translate(1039.09,236.05) scale(0.1903)"><use href="#tileg"/></pattern><pattern id="R195" width="345" height="345" patternUnits="userSpaceOnUse" patternTransform="translate(1132.58,236.05) scale(-0.1903,0.1903)"><use href="#tileg"/></pattern><pattern id="L196" width="345" height="345" patternUnits="userSpaceOnUse" patternTransform="translate(1039.23,236.15) scale(0.1903)"><use href="#tileg"/></pattern><pattern id="R196" width="345" height="345" patternUnits="userSpaceOnUse" patternTransform="translate(1132.37,236.15) scale(-0.1903,0.1903)"><use href="#tileg"/></pattern><pattern id="L197" width="345" height="345" patternUnits="userSpaceOnUse" patternTransform="translate(1039.37,236.24) scale(0.1902)"><use href="#tileg"/></pattern><pattern id="R197" width="345" height="345" patternUnits="userSpaceOnUse" patternTransform="translate(1132.16,236.24) scale(-0.1902,0.1902)"><use href="#tileg"/></pattern><pattern id="L198" width="345" height="345" patternUnits="userSpaceOnUse" patternTransform="translate(1039.52,236.34) scale(0.1901)"><use href="#tileg"/></pattern><pattern id="R198" width="345" height="345" patternUnits="userSpaceOnUse" patternTransform="translate(1131.95,236.34) scale(-0.1901,0.1901)"><use href="#tileg"/></pattern><pattern id="L199" width="345" height="345" patternUnits="userSpaceOnUse" patternTransform="translate(1039.66,236.44) scale(0.1901)"><use href="#tileg"/></pattern><pattern id="R199" width="345" height="345" patternUnits="userSpaceOnUse" patternTransform="translate(1131.73,236.44) scale(-0.1901,0.1901)"><use href="#tileg"/></pattern><pattern id="L200" width="345" height="345" patternUnits="userSpaceOnUse" patternTransform="translate(1039.80,236.53) scale(0.1900)"><use href="#tileg"/></pattern><pattern id="R200" width="345" height="345" patternUnits="userSpaceOnUse" patternTransform="translate(1131.52,236.53) scale(-0.1900,0.1900)"><use href="#tileg"/></pattern><pattern id="L201" width="345" height="345" patternUnits="userSpaceOnUse" patternTransform="translate(1039.94,236.63) scale(0.1899)"><use href="#tileg"/></pattern><pattern id="R201" width="345" height="345" patternUnits="userSpaceOnUse" patternTransform="translate(1131.31,236.63) scale(-0.1899,0.1899)"><use href="#tileg"/></pattern><pattern id="L202" width="345" height="345" patternUnits="userSpaceOnUse" patternTransform="translate(1040.08,236.73) scale(0.1899)"><use href="#tileg"/></pattern><pattern id="R202" width="345" height="345" patternUnits="userSpaceOnUse" patternTransform="translate(1131.10,236.73) scale(-0.1899,0.1899)"><use href="#tileg"/></pattern><pattern id="L203" width="345" height="345" patternUnits="userSpaceOnUse" patternTransform="translate(1040.22,236.83) scale(0.1898)"><use href="#tileg"/></pattern><pattern id="R203" width="345" height="345" patternUnits="userSpaceOnUse" patternTransform="translate(1130.89,236.83) scale(-0.1898,0.1898)"><use href="#tileg"/></pattern><pattern id="L204" width="345" height="345" patternUnits="userSpaceOnUse" patternTransform="translate(1040.36,236.93) scale(0.1898)"><use href="#tileg"/></pattern><pattern id="R204" width="345" height="345" patternUnits="userSpaceOnUse" patternTransform="translate(1130.68,236.93) scale(-0.1898,0.1898)"><use href="#tileg"/></pattern><pattern id="L205" width="345" height="345" patternUnits="userSpaceOnUse" patternTransform="translate(1040.51,237.03) scale(0.1897)"><use href="#tileg"/></pattern><pattern id="R205" width="345" height="345" patternUnits="userSpaceOnUse" patternTransform="translate(1130.47,237.03) scale(-0.1897,0.1897)"><use href="#tileg"/></pattern><pattern id="L206" width="345" height="345" patternUnits="userSpaceOnUse" patternTransform="translate(1040.65,237.13) scale(0.1896)"><use href="#tileg"/></pattern><pattern id="R206" width="345" height="345" patternUnits="userSpaceOnUse" patternTransform="translate(1130.26,237.13) scale(-0.1896,0.1896)"><use href="#tileg"/></pattern><pattern id="L207" width="345" height="345" patternUnits="userSpaceOnUse" patternTransform="translate(1040.79,237.23) scale(0.1896)"><use href="#tileg"/></pattern><pattern id="R207" width="345" height="345" patternUnits="userSpaceOnUse" patternTransform="translate(1130.05,237.23) scale(-0.1896,0.1896)"><use href="#tileg"/></pattern><pattern id="L208" width="345" height="345" patternUnits="userSpaceOnUse" patternTransform="translate(1040.93,237.33) scale(0.1895)"><use href="#tileg"/></pattern><pattern id="R208" width="345" height="345" patternUnits="userSpaceOnUse" patternTransform="translate(1129.84,237.33) scale(-0.1895,0.1895)"><use href="#tileg"/></pattern><pattern id="L209" width="345" height="345" patternUnits="userSpaceOnUse" patternTransform="translate(1041.07,237.44) scale(0.1894)"><use href="#tileg"/></pattern><pattern id="R209" width="345" height="345" patternUnits="userSpaceOnUse" patternTransform="translate(1129.63,237.44) scale(-0.1894,0.1894)"><use href="#tileg"/></pattern><pattern id="L210" width="345" height="345" patternUnits="userSpaceOnUse" patternTransform="translate(1041.21,237.54) scale(0.1894)"><use href="#tileg"/></pattern><pattern id="R210" width="345" height="345" patternUnits="userSpaceOnUse" patternTransform="translate(1129.42,237.54) scale(-0.1894,0.1894)"><use href="#tileg"/></pattern><pattern id="L211" width="345" height="345" patternUnits="userSpaceOnUse" patternTransform="translate(1041.35,237.65) scale(0.1893)"><use href="#tileg"/></pattern><pattern id="R211" width="345" height="345" patternUnits="userSpaceOnUse" patternTransform="translate(1129.21,237.65) scale(-0.1893,0.1893)"><use href="#tileg"/></pattern><pattern id="L212" width="345" height="345" patternUnits="userSpaceOnUse" patternTransform="translate(1041.50,237.75) scale(0.1893)"><use href="#tileg"/></pattern><pattern id="R212" width="345" height="345" patternUnits="userSpaceOnUse" patternTransform="translate(1129.00,237.75) scale(-0.1893,0.1893)"><use href="#tileg"/></pattern><pattern id="L213" width="345" height="345" patternUnits="userSpaceOnUse" patternTransform="translate(1041.64,237.86) scale(0.1892)"><use href="#tileg"/></pattern><pattern id="R213" width="345" height="345" patternUnits="userSpaceOnUse" patternTransform="translate(1128.78,237.86) scale(-0.1892,0.1892)"><use href="#tileg"/></pattern><pattern id="L214" width="345" height="345" patternUnits="userSpaceOnUse" patternTransform="translate(1041.78,237.96) scale(0.1891)"><use href="#tileg"/></pattern><pattern id="R214" width="345" height="345" patternUnits="userSpaceOnUse" patternTransform="translate(1128.57,237.96) scale(-0.1891,0.1891)"><use href="#tileg"/></pattern><pattern id="L215" width="345" height="345" patternUnits="userSpaceOnUse" patternTransform="translate(1041.92,238.07) scale(0.1891)"><use href="#tileg"/></pattern><pattern id="R215" width="345" height="345" patternUnits="userSpaceOnUse" patternTransform="translate(1128.36,238.07) scale(-0.1891,0.1891)"><use href="#tileg"/></pattern><pattern id="L216" width="345" height="345" patternUnits="userSpaceOnUse" patternTransform="translate(1042.06,238.18) scale(0.1890)"><use href="#tileg"/></pattern><pattern id="R216" width="345" height="345" patternUnits="userSpaceOnUse" patternTransform="translate(1128.15,238.18) scale(-0.1890,0.1890)"><use href="#tileg"/></pattern><pattern id="L217" width="345" height="345" patternUnits="userSpaceOnUse" patternTransform="translate(1042.20,238.29) scale(0.1889)"><use href="#tileg"/></pattern><pattern id="R217" width="345" height="345" patternUnits="userSpaceOnUse" patternTransform="translate(1127.94,238.29) scale(-0.1889,0.1889)"><use href="#tileg"/></pattern><pattern id="L218" width="345" height="345" patternUnits="userSpaceOnUse" patternTransform="translate(1042.34,238.40) scale(0.1889)"><use href="#tileg"/></pattern><pattern id="R218" width="345" height="345" patternUnits="userSpaceOnUse" patternTransform="translate(1127.73,238.40) scale(-0.1889,0.1889)"><use href="#tileg"/></pattern><pattern id="L219" width="345" height="345" patternUnits="userSpaceOnUse" patternTransform="translate(1042.48,238.50) scale(0.1888)"><use href="#tileg"/></pattern><pattern id="R219" width="345" height="345" patternUnits="userSpaceOnUse" patternTransform="translate(1127.52,238.50) scale(-0.1888,0.1888)"><use href="#tileg"/></pattern><pattern id="L220" width="345" height="345" patternUnits="userSpaceOnUse" patternTransform="translate(1042.63,238.62) scale(0.1888)"><use href="#tileg"/></pattern><pattern id="R220" width="345" height="345" patternUnits="userSpaceOnUse" patternTransform="translate(1127.31,238.62) scale(-0.1888,0.1888)"><use href="#tileg"/></pattern><pattern id="L221" width="345" height="345" patternUnits="userSpaceOnUse" patternTransform="translate(1042.77,238.73) scale(0.1887)"><use href="#tileg"/></pattern><pattern id="R221" width="345" height="345" patternUnits="userSpaceOnUse" patternTransform="translate(1127.10,238.73) scale(-0.1887,0.1887)"><use href="#tileg"/></pattern><pattern id="L222" width="345" height="345" patternUnits="userSpaceOnUse" patternTransform="translate(1042.91,238.84) scale(0.1886)"><use href="#tileg"/></pattern><pattern id="R222" width="345" height="345" patternUnits="userSpaceOnUse" patternTransform="translate(1126.89,238.84) scale(-0.1886,0.1886)"><use href="#tileg"/></pattern><pattern id="L223" width="345" height="345" patternUnits="userSpaceOnUse" patternTransform="translate(1043.05,238.95) scale(0.1886)"><use href="#tileg"/></pattern><pattern id="R223" width="345" height="345" patternUnits="userSpaceOnUse" patternTransform="translate(1126.68,238.95) scale(-0.1886,0.1886)"><use href="#tileg"/></pattern><pattern id="L224" width="345" height="345" patternUnits="userSpaceOnUse" patternTransform="translate(1043.19,239.06) scale(0.1885)"><use href="#tileg"/></pattern><pattern id="R224" width="345" height="345" patternUnits="userSpaceOnUse" patternTransform="translate(1126.47,239.06) scale(-0.1885,0.1885)"><use href="#tileg"/></pattern><pattern id="L225" width="345" height="345" patternUnits="userSpaceOnUse" patternTransform="translate(1043.33,239.18) scale(0.1884)"><use href="#tileg"/></pattern><pattern id="R225" width="345" height="345" patternUnits="userSpaceOnUse" patternTransform="translate(1126.26,239.18) scale(-0.1884,0.1884)"><use href="#tileg"/></pattern><pattern id="L226" width="345" height="345" patternUnits="userSpaceOnUse" patternTransform="translate(1043.47,239.29) scale(0.1884)"><use href="#tileg"/></pattern><pattern id="R226" width="345" height="345" patternUnits="userSpaceOnUse" patternTransform="translate(1126.05,239.29) scale(-0.1884,0.1884)"><use href="#tileg"/></pattern><pattern id="L227" width="345" height="345" patternUnits="userSpaceOnUse" patternTransform="translate(1043.62,239.41) scale(0.1883)"><use href="#tileg"/></pattern><pattern id="R227" width="345" height="345" patternUnits="userSpaceOnUse" patternTransform="translate(1125.84,239.41) scale(-0.1883,0.1883)"><use href="#tileg"/></pattern><pattern id="L228" width="345" height="345" patternUnits="userSpaceOnUse" patternTransform="translate(1043.76,239.52) scale(0.1883)"><use href="#tileg"/></pattern><pattern id="R228" width="345" height="345" patternUnits="userSpaceOnUse" patternTransform="translate(1125.62,239.52) scale(-0.1883,0.1883)"><use href="#tileg"/></pattern><pattern id="L229" width="345" height="345" patternUnits="userSpaceOnUse" patternTransform="translate(1043.90,239.64) scale(0.1882)"><use href="#tileg"/></pattern><pattern id="R229" width="345" height="345" patternUnits="userSpaceOnUse" patternTransform="translate(1125.41,239.64) scale(-0.1882,0.1882)"><use href="#tileg"/></pattern><pattern id="L230" width="345" height="345" patternUnits="userSpaceOnUse" patternTransform="translate(1044.04,239.76) scale(0.1881)"><use href="#tileg"/></pattern><pattern id="R230" width="345" height="345" patternUnits="userSpaceOnUse" patternTransform="translate(1125.20,239.76) scale(-0.1881,0.1881)"><use href="#tileg"/></pattern><pattern id="L231" width="345" height="345" patternUnits="userSpaceOnUse" patternTransform="translate(1044.18,239.87) scale(0.1881)"><use href="#tileg"/></pattern><pattern id="R231" width="345" height="345" patternUnits="userSpaceOnUse" patternTransform="translate(1124.99,239.87) scale(-0.1881,0.1881)"><use href="#tileg"/></pattern><pattern id="L232" width="345" height="345" patternUnits="userSpaceOnUse" patternTransform="translate(1044.32,239.99) scale(0.1880)"><use href="#tileg"/></pattern><pattern id="R232" width="345" height="345" patternUnits="userSpaceOnUse" patternTransform="translate(1124.78,239.99) scale(-0.1880,0.1880)"><use href="#tileg"/></pattern><pattern id="L233" width="345" height="345" patternUnits="userSpaceOnUse" patternTransform="translate(1044.46,240.11) scale(0.1879)"><use href="#tileg"/></pattern><pattern id="R233" width="345" height="345" patternUnits="userSpaceOnUse" patternTransform="translate(1124.57,240.11) scale(-0.1879,0.1879)"><use href="#tileg"/></pattern><pattern id="L234" width="345" height="345" patternUnits="userSpaceOnUse" patternTransform="translate(1044.60,240.23) scale(0.1879)"><use href="#tileg"/></pattern><pattern id="R234" width="345" height="345" patternUnits="userSpaceOnUse" patternTransform="translate(1124.37,240.23) scale(-0.1879,0.1879)"><use href="#tileg"/></pattern><pattern id="L235" width="345" height="345" patternUnits="userSpaceOnUse" patternTransform="translate(1044.74,240.35) scale(0.1878)"><use href="#tileg"/></pattern><pattern id="R235" width="345" height="345" patternUnits="userSpaceOnUse" patternTransform="translate(1124.18,240.35) scale(-0.1878,0.1878)"><use href="#tileg"/></pattern><pattern id="L236" width="345" height="345" patternUnits="userSpaceOnUse" patternTransform="translate(1044.88,240.47) scale(0.1878)"><use href="#tileg"/></pattern><pattern id="R236" width="345" height="345" patternUnits="userSpaceOnUse" patternTransform="translate(1123.99,240.47) scale(-0.1878,0.1878)"><use href="#tileg"/></pattern><pattern id="L237" width="345" height="345" patternUnits="userSpaceOnUse" patternTransform="translate(1045.03,240.59) scale(0.1877)"><use href="#tileg"/></pattern><pattern id="R237" width="345" height="345" patternUnits="userSpaceOnUse" patternTransform="translate(1123.80,240.59) scale(-0.1877,0.1877)"><use href="#tileg"/></pattern><pattern id="L238" width="345" height="345" patternUnits="userSpaceOnUse" patternTransform="translate(1045.17,240.72) scale(0.1876)"><use href="#tileg"/></pattern><pattern id="R238" width="345" height="345" patternUnits="userSpaceOnUse" patternTransform="translate(1123.61,240.72) scale(-0.1876,0.1876)"><use href="#tileg"/></pattern><pattern id="L239" width="345" height="345" patternUnits="userSpaceOnUse" patternTransform="translate(1045.31,240.84) scale(0.1876)"><use href="#tileg"/></pattern><pattern id="R239" width="345" height="345" patternUnits="userSpaceOnUse" patternTransform="translate(1123.42,240.84) scale(-0.1876,0.1876)"><use href="#tileg"/></pattern><pattern id="L240" width="345" height="345" patternUnits="userSpaceOnUse" patternTransform="translate(1045.45,240.96) scale(0.1875)"><use href="#tileg"/></pattern><pattern id="R240" width="345" height="345" patternUnits="userSpaceOnUse" patternTransform="translate(1123.23,240.96) scale(-0.1875,0.1875)"><use href="#tileg"/></pattern><pattern id="L241" width="345" height="345" patternUnits="userSpaceOnUse" patternTransform="translate(1045.59,241.09) scale(0.1874)"><use href="#tileg"/></pattern><pattern id="R241" width="345" height="345" patternUnits="userSpaceOnUse" patternTransform="translate(1123.04,241.09) scale(-0.1874,0.1874)"><use href="#tileg"/></pattern><pattern id="L242" width="345" height="345" patternUnits="userSpaceOnUse" patternTransform="translate(1045.73,241.21) scale(0.1874)"><use href="#tileg"/></pattern><pattern id="R242" width="345" height="345" patternUnits="userSpaceOnUse" patternTransform="translate(1122.85,241.21) scale(-0.1874,0.1874)"><use href="#tileg"/></pattern><pattern id="L243" width="345" height="345" patternUnits="userSpaceOnUse" patternTransform="translate(1045.87,241.34) scale(0.1873)"><use href="#tileg"/></pattern><pattern id="R243" width="345" height="345" patternUnits="userSpaceOnUse" patternTransform="translate(1122.65,241.34) scale(-0.1873,0.1873)"><use href="#tileg"/></pattern><pattern id="L244" width="345" height="345" patternUnits="userSpaceOnUse" patternTransform="translate(1046.01,241.46) scale(0.1873)"><use href="#tileg"/></pattern><pattern id="R244" width="345" height="345" patternUnits="userSpaceOnUse" patternTransform="translate(1122.46,241.46) scale(-0.1873,0.1873)"><use href="#tileg"/></pattern><pattern id="L245" width="345" height="345" patternUnits="userSpaceOnUse" patternTransform="translate(1046.15,241.59) scale(0.1872)"><use href="#tileg"/></pattern><pattern id="R245" width="345" height="345" patternUnits="userSpaceOnUse" patternTransform="translate(1122.27,241.59) scale(-0.1872,0.1872)"><use href="#tileg"/></pattern><pattern id="L246" width="345" height="345" patternUnits="userSpaceOnUse" patternTransform="translate(1046.29,241.72) scale(0.1871)"><use href="#tileg"/></pattern><pattern id="R246" width="345" height="345" patternUnits="userSpaceOnUse" patternTransform="translate(1122.08,241.72) scale(-0.1871,0.1871)"><use href="#tileg"/></pattern><pattern id="L247" width="345" height="345" patternUnits="userSpaceOnUse" patternTransform="translate(1046.43,241.85) scale(0.1871)"><use href="#tileg"/></pattern><pattern id="R247" width="345" height="345" patternUnits="userSpaceOnUse" patternTransform="translate(1121.89,241.85) scale(-0.1871,0.1871)"><use href="#tileg"/></pattern><pattern id="L248" width="345" height="345" patternUnits="userSpaceOnUse" patternTransform="translate(1046.57,241.98) scale(0.1870)"><use href="#tileg"/></pattern><pattern id="R248" width="345" height="345" patternUnits="userSpaceOnUse" patternTransform="translate(1121.70,241.98) scale(-0.1870,0.1870)"><use href="#tileg"/></pattern><pattern id="L249" width="345" height="345" patternUnits="userSpaceOnUse" patternTransform="translate(1046.72,242.11) scale(0.1869)"><use href="#tileg"/></pattern><pattern id="R249" width="345" height="345" patternUnits="userSpaceOnUse" patternTransform="translate(1121.51,242.11) scale(-0.1869,0.1869)"><use href="#tileg"/></pattern><pattern id="L250" width="345" height="345" patternUnits="userSpaceOnUse" patternTransform="translate(1046.86,242.24) scale(0.1869)"><use href="#tileg"/></pattern><pattern id="R250" width="345" height="345" patternUnits="userSpaceOnUse" patternTransform="translate(1121.32,242.24) scale(-0.1869,0.1869)"><use href="#tileg"/></pattern><pattern id="L251" width="345" height="345" patternUnits="userSpaceOnUse" patternTransform="translate(1047.00,242.37) scale(0.1868)"><use href="#tileg"/></pattern><pattern id="R251" width="345" height="345" patternUnits="userSpaceOnUse" patternTransform="translate(1121.13,242.37) scale(-0.1868,0.1868)"><use href="#tileg"/></pattern><clipPath id="cLeg"><path d="M1023.9,139.0 C1022.2,143.7 1017.1,156.4 1014.0,167.0 C1010.9,177.6 1006.9,191.6 1005.0,202.5 C1003.1,213.4 1002.5,221.2 1002.5,232.5 C1002.5,243.8 1004.0,258.8 1005.0,270.0 C1006.0,281.2 1006.7,290.4 1008.8,300.0 C1010.8,309.6 1014.8,316.7 1017.5,327.5 C1020.2,338.3 1023.1,352.5 1025.0,365.0 C1026.9,377.5 1027.3,390.0 1028.8,402.5 C1030.2,415.0 1032.5,428.8 1033.8,440.0 C1035.0,451.2 1036.5,460.4 1036.0,470.0 C1035.5,479.6 1031.8,486.7 1031.0,497.5 C1030.2,508.3 1029.7,522.5 1031.0,535.0 C1032.3,547.5 1036.0,557.9 1038.8,572.5 C1041.5,587.1 1045.2,612.5 1047.5,622.5 C1049.8,632.5 1051.7,630.8 1052.5,632.5 L1073.8,632.5 C1074.1,628.8 1075.4,622.1 1076.0,610.0 C1076.6,597.9 1077.0,574.6 1077.5,560.0 C1078.0,545.4 1078.3,535.0 1078.8,522.5 C1079.2,510.0 1079.2,495.4 1080.0,485.0 C1080.8,474.6 1082.9,467.5 1083.8,460.0 C1084.6,452.5 1084.6,451.7 1085.0,440.0 C1085.4,428.3 1085.7,408.3 1086.0,390.0 C1086.3,371.7 1086.6,345.7 1086.7,330.0 C1086.8,314.3 1086.5,303.8 1086.7,296.0 C1086.9,288.2 1087.3,286.7 1087.8,283.0 C1088.3,279.3 1089.4,275.5 1089.7,274.0 L1089.7,274.0 C1090.0,275.5 1091.1,279.3 1091.6,283.0 C1092.1,286.7 1092.6,288.2 1092.8,296.0 C1093.0,303.8 1092.8,314.3 1092.8,330.0 C1092.8,345.7 1092.8,371.7 1092.5,390.0 C1092.2,408.3 1091.4,428.3 1091.0,440.0 C1090.6,451.7 1090.0,450.4 1090.0,460.0 C1090.0,469.6 1091.2,485.0 1091.0,497.5 C1090.8,510.0 1088.9,522.5 1088.8,535.0 C1088.6,547.5 1089.8,560.0 1090.0,572.5 C1090.2,585.0 1089.8,600.0 1090.0,610.0 C1090.2,620.0 1090.8,628.8 1091.0,632.5 L1116.0,632.5 C1116.5,628.8 1116.8,620.0 1118.8,610.0 C1120.7,600.0 1124.6,585.0 1127.5,572.5 C1130.4,560.0 1133.9,547.5 1136.0,535.0 C1138.1,522.5 1139.5,510.0 1140.0,497.5 C1140.5,485.0 1138.3,469.6 1138.8,460.0 C1139.2,450.4 1140.6,449.6 1142.5,440.0 C1144.4,430.4 1147.5,415.0 1150.0,402.5 C1152.5,390.0 1155.0,377.5 1157.5,365.0 C1160.0,352.5 1162.9,340.0 1165.0,327.5 C1167.1,315.0 1168.2,301.7 1170.0,290.0 C1171.8,278.3 1174.8,268.3 1176.0,257.5 C1177.2,246.7 1178.1,235.4 1177.5,225.0 C1176.9,214.6 1175.6,205.8 1172.5,195.0 C1169.4,184.2 1163.4,169.7 1159.0,160.0 C1154.6,150.3 1148.4,140.8 1146.3,137.0 Q1086,135.5 1023.9,139Z"/></clipPath><filter id="bl" x="-20%" y="-20%" width="140%" height="140%"><feGaussianBlur stdDeviation="5"/></filter></defs>
  <g clip-path="url(#cLeg)">
   <g filter="url(#b07)"><g shape-rendering="crispEdges"><rect x="995" y="132" width="94.7" height="2" fill="url(#L0)"/><rect x="1089.7" y="132" width="95.3" height="2" fill="url(#R0)"/><rect x="995" y="134" width="94.7" height="2" fill="url(#L1)"/><rect x="1089.7" y="134" width="95.3" height="2" fill="url(#R1)"/><rect x="995" y="136" width="94.7" height="2" fill="url(#L2)"/><rect x="1089.7" y="136" width="95.3" height="2" fill="url(#R2)"/><rect x="995" y="138" width="94.7" height="2" fill="url(#L3)"/><rect x="1089.7" y="138" width="95.3" height="2" fill="url(#R3)"/><rect x="995" y="140" width="94.7" height="2" fill="url(#L4)"/><rect x="1089.7" y="140" width="95.3" height="2" fill="url(#R4)"/><rect x="995" y="142" width="94.7" height="2" fill="url(#L5)"/><rect x="1089.7" y="142" width="95.3" height="2" fill="url(#R5)"/><rect x="995" y="144" width="94.7" height="2" fill="url(#L6)"/><rect x="1089.7" y="144" width="95.3" height="2" fill="url(#R6)"/><rect x="995" y="146" width="94.7" height="2" fill="url(#L7)"/><rect x="1089.7" y="146" width="95.3" height="2" fill="url(#R7)"/><rect x="995" y="148" width="94.7" height="2" fill="url(#L8)"/><rect x="1089.7" y="148" width="95.3" height="2" fill="url(#R8)"/><rect x="995" y="150" width="94.7" height="2" fill="url(#L9)"/><rect x="1089.7" y="150" width="95.3" height="2" fill="url(#R9)"/><rect x="995" y="152" width="94.7" height="2" fill="url(#L10)"/><rect x="1089.7" y="152" width="95.3" height="2" fill="url(#R10)"/><rect x="995" y="154" width="94.7" height="2" fill="url(#L11)"/><rect x="1089.7" y="154" width="95.3" height="2" fill="url(#R11)"/><rect x="995" y="156" width="94.7" height="2" fill="url(#L12)"/><rect x="1089.7" y="156" width="95.3" height="2" fill="url(#R12)"/><rect x="995" y="158" width="94.7" height="2" fill="url(#L13)"/><rect x="1089.7" y="158" width="95.3" height="2" fill="url(#R13)"/><rect x="995" y="160" width="94.7" height="2" fill="url(#L14)"/><rect x="1089.7" y="160" width="95.3" height="2" fill="url(#R14)"/><rect x="995" y="162" width="94.7" height="2" fill="url(#L15)"/><rect x="1089.7" y="162" width="95.3" height="2" fill="url(#R15)"/><rect x="995" y="164" width="94.7" height="2" fill="url(#L16)"/><rect x="1089.7" y="164" width="95.3" height="2" fill="url(#R16)"/><rect x="995" y="166" width="94.7" height="2" fill="url(#L17)"/><rect x="1089.7" y="166" width="95.3" height="2" fill="url(#R17)"/><rect x="995" y="168" width="94.7" height="2" fill="url(#L18)"/><rect x="1089.7" y="168" width="95.3" height="2" fill="url(#R18)"/><rect x="995" y="170" width="94.7" height="2" fill="url(#L19)"/><rect x="1089.7" y="170" width="95.3" height="2" fill="url(#R19)"/><rect x="995" y="172" width="94.7" height="2" fill="url(#L20)"/><rect x="1089.7" y="172" width="95.3" height="2" fill="url(#R20)"/><rect x="995" y="174" width="94.7" height="2" fill="url(#L21)"/><rect x="1089.7" y="174" width="95.3" height="2" fill="url(#R21)"/><rect x="995" y="176" width="94.7" height="2" fill="url(#L22)"/><rect x="1089.7" y="176" width="95.3" height="2" fill="url(#R22)"/><rect x="995" y="178" width="94.7" height="2" fill="url(#L23)"/><rect x="1089.7" y="178" width="95.3" height="2" fill="url(#R23)"/><rect x="995" y="180" width="94.7" height="2" fill="url(#L24)"/><rect x="1089.7" y="180" width="95.3" height="2" fill="url(#R24)"/><rect x="995" y="182" width="94.7" height="2" fill="url(#L25)"/><rect x="1089.7" y="182" width="95.3" height="2" fill="url(#R25)"/><rect x="995" y="184" width="94.7" height="2" fill="url(#L26)"/><rect x="1089.7" y="184" width="95.3" height="2" fill="url(#R26)"/><rect x="995" y="186" width="94.7" height="2" fill="url(#L27)"/><rect x="1089.7" y="186" width="95.3" height="2" fill="url(#R27)"/><rect x="995" y="188" width="94.7" height="2" fill="url(#L28)"/><rect x="1089.7" y="188" width="95.3" height="2" fill="url(#R28)"/><rect x="995" y="190" width="94.7" height="2" fill="url(#L29)"/><rect x="1089.7" y="190" width="95.3" height="2" fill="url(#R29)"/><rect x="995" y="192" width="94.7" height="2" fill="url(#L30)"/><rect x="1089.7" y="192" width="95.3" height="2" fill="url(#R30)"/><rect x="995" y="194" width="94.7" height="2" fill="url(#L31)"/><rect x="1089.7" y="194" width="95.3" height="2" fill="url(#R31)"/><rect x="995" y="196" width="94.7" height="2" fill="url(#L32)"/><rect x="1089.7" y="196" width="95.3" height="2" fill="url(#R32)"/><rect x="995" y="198" width="94.7" height="2" fill="url(#L33)"/><rect x="1089.7" y="198" width="95.3" height="2" fill="url(#R33)"/><rect x="995" y="200" width="94.7" height="2" fill="url(#L34)"/><rect x="1089.7" y="200" width="95.3" height="2" fill="url(#R34)"/><rect x="995" y="202" width="94.7" height="2" fill="url(#L35)"/><rect x="1089.7" y="202" width="95.3" height="2" fill="url(#R35)"/><rect x="995" y="204" width="94.7" height="2" fill="url(#L36)"/><rect x="1089.7" y="204" width="95.3" height="2" fill="url(#R36)"/><rect x="995" y="206" width="94.7" height="2" fill="url(#L37)"/><rect x="1089.7" y="206" width="95.3" height="2" fill="url(#R37)"/><rect x="995" y="208" width="94.7" height="2" fill="url(#L38)"/><rect x="1089.7" y="208" width="95.3" height="2" fill="url(#R38)"/><rect x="995" y="210" width="94.7" height="2" fill="url(#L39)"/><rect x="1089.7" y="210" width="95.3" height="2" fill="url(#R39)"/><rect x="995" y="212" width="94.7" height="2" fill="url(#L40)"/><rect x="1089.7" y="212" width="95.3" height="2" fill="url(#R40)"/><rect x="995" y="214" width="94.7" height="2" fill="url(#L41)"/><rect x="1089.7" y="214" width="95.3" height="2" fill="url(#R41)"/><rect x="995" y="216" width="94.7" height="2" fill="url(#L42)"/><rect x="1089.7" y="216" width="95.3" height="2" fill="url(#R42)"/><rect x="995" y="218" width="94.7" height="2" fill="url(#L43)"/><rect x="1089.7" y="218" width="95.3" height="2" fill="url(#R43)"/><rect x="995" y="220" width="94.7" height="2" fill="url(#L44)"/><rect x="1089.7" y="220" width="95.3" height="2" fill="url(#R44)"/><rect x="995" y="222" width="94.7" height="2" fill="url(#L45)"/><rect x="1089.7" y="222" width="95.3" height="2" fill="url(#R45)"/><rect x="995" y="224" width="94.7" height="2" fill="url(#L46)"/><rect x="1089.7" y="224" width="95.3" height="2" fill="url(#R46)"/><rect x="995" y="226" width="94.7" height="2" fill="url(#L47)"/><rect x="1089.7" y="226" width="95.3" height="2" fill="url(#R47)"/><rect x="995" y="228" width="94.7" height="2" fill="url(#L48)"/><rect x="1089.7" y="228" width="95.3" height="2" fill="url(#R48)"/><rect x="995" y="230" width="94.7" height="2" fill="url(#L49)"/><rect x="1089.7" y="230" width="95.3" height="2" fill="url(#R49)"/><rect x="995" y="232" width="94.7" height="2" fill="url(#L50)"/><rect x="1089.7" y="232" width="95.3" height="2" fill="url(#R50)"/><rect x="995" y="234" width="94.7" height="2" fill="url(#L51)"/><rect x="1089.7" y="234" width="95.3" height="2" fill="url(#R51)"/><rect x="995" y="236" width="94.7" height="2" fill="url(#L52)"/><rect x="1089.7" y="236" width="95.3" height="2" fill="url(#R52)"/><rect x="995" y="238" width="94.7" height="2" fill="url(#L53)"/><rect x="1089.7" y="238" width="95.3" height="2" fill="url(#R53)"/><rect x="995" y="240" width="94.7" height="2" fill="url(#L54)"/><rect x="1089.7" y="240" width="95.3" height="2" fill="url(#R54)"/><rect x="995" y="242" width="94.7" height="2" fill="url(#L55)"/><rect x="1089.7" y="242" width="95.3" height="2" fill="url(#R55)"/><rect x="995" y="244" width="94.7" height="2" fill="url(#L56)"/><rect x="1089.7" y="244" width="95.3" height="2" fill="url(#R56)"/><rect x="995" y="246" width="94.7" height="2" fill="url(#L57)"/><rect x="1089.7" y="246" width="95.3" height="2" fill="url(#R57)"/><rect x="995" y="248" width="94.7" height="2" fill="url(#L58)"/><rect x="1089.7" y="248" width="95.3" height="2" fill="url(#R58)"/><rect x="995" y="250" width="94.7" height="2" fill="url(#L59)"/><rect x="1089.7" y="250" width="95.3" height="2" fill="url(#R59)"/><rect x="995" y="252" width="94.7" height="2" fill="url(#L60)"/><rect x="1089.7" y="252" width="95.3" height="2" fill="url(#R60)"/><rect x="995" y="254" width="94.7" height="2" fill="url(#L61)"/><rect x="1089.7" y="254" width="95.3" height="2" fill="url(#R61)"/><rect x="995" y="256" width="94.7" height="2" fill="url(#L62)"/><rect x="1089.7" y="256" width="95.3" height="2" fill="url(#R62)"/><rect x="995" y="258" width="94.7" height="2" fill="url(#L63)"/><rect x="1089.7" y="258" width="95.3" height="2" fill="url(#R63)"/><rect x="995" y="260" width="94.7" height="2" fill="url(#L64)"/><rect x="1089.7" y="260" width="95.3" height="2" fill="url(#R64)"/><rect x="995" y="262" width="94.7" height="2" fill="url(#L65)"/><rect x="1089.7" y="262" width="95.3" height="2" fill="url(#R65)"/><rect x="995" y="264" width="94.7" height="2" fill="url(#L66)"/><rect x="1089.7" y="264" width="95.3" height="2" fill="url(#R66)"/><rect x="995" y="266" width="94.7" height="2" fill="url(#L67)"/><rect x="1089.7" y="266" width="95.3" height="2" fill="url(#R67)"/><rect x="995" y="268" width="94.7" height="2" fill="url(#L68)"/><rect x="1089.7" y="268" width="95.3" height="2" fill="url(#R68)"/><rect x="995" y="270" width="94.7" height="2" fill="url(#L69)"/><rect x="1089.7" y="270" width="95.3" height="2" fill="url(#R69)"/><rect x="995" y="272" width="94.7" height="2" fill="url(#L70)"/><rect x="1089.7" y="272" width="95.3" height="2" fill="url(#R70)"/><rect x="995" y="274" width="94.7" height="2" fill="url(#L71)"/><rect x="1089.7" y="274" width="95.3" height="2" fill="url(#R71)"/><rect x="995" y="276" width="94.7" height="2" fill="url(#L72)"/><rect x="1089.7" y="276" width="95.3" height="2" fill="url(#R72)"/><rect x="995" y="278" width="94.7" height="2" fill="url(#L73)"/><rect x="1089.7" y="278" width="95.3" height="2" fill="url(#R73)"/><rect x="995" y="280" width="94.7" height="2" fill="url(#L74)"/><rect x="1089.7" y="280" width="95.3" height="2" fill="url(#R74)"/><rect x="995" y="282" width="94.7" height="2" fill="url(#L75)"/><rect x="1089.7" y="282" width="95.3" height="2" fill="url(#R75)"/><rect x="995" y="284" width="94.7" height="2" fill="url(#L76)"/><rect x="1089.7" y="284" width="95.3" height="2" fill="url(#R76)"/><rect x="995" y="286" width="94.7" height="2" fill="url(#L77)"/><rect x="1089.7" y="286" width="95.3" height="2" fill="url(#R77)"/><rect x="995" y="288" width="94.7" height="2" fill="url(#L78)"/><rect x="1089.7" y="288" width="95.3" height="2" fill="url(#R78)"/><rect x="995" y="290" width="94.7" height="2" fill="url(#L79)"/><rect x="1089.7" y="290" width="95.3" height="2" fill="url(#R79)"/><rect x="995" y="292" width="94.7" height="2" fill="url(#L80)"/><rect x="1089.7" y="292" width="95.3" height="2" fill="url(#R80)"/><rect x="995" y="294" width="94.7" height="2" fill="url(#L81)"/><rect x="1089.7" y="294" width="95.3" height="2" fill="url(#R81)"/><rect x="995" y="296" width="94.7" height="2" fill="url(#L82)"/><rect x="1089.7" y="296" width="95.3" height="2" fill="url(#R82)"/><rect x="995" y="298" width="94.7" height="2" fill="url(#L83)"/><rect x="1089.7" y="298" width="95.3" height="2" fill="url(#R83)"/><rect x="995" y="300" width="94.7" height="2" fill="url(#L84)"/><rect x="1089.7" y="300" width="95.3" height="2" fill="url(#R84)"/><rect x="995" y="302" width="94.6" height="2" fill="url(#L85)"/><rect x="1089.6" y="302" width="95.4" height="2" fill="url(#R85)"/><rect x="995" y="304" width="94.6" height="2" fill="url(#L86)"/><rect x="1089.6" y="304" width="95.4" height="2" fill="url(#R86)"/><rect x="995" y="306" width="94.6" height="2" fill="url(#L87)"/><rect x="1089.6" y="306" width="95.4" height="2" fill="url(#R87)"/><rect x="995" y="308" width="94.5" height="2" fill="url(#L88)"/><rect x="1089.5" y="308" width="95.5" height="2" fill="url(#R88)"/><rect x="995" y="310" width="94.5" height="2" fill="url(#L89)"/><rect x="1089.5" y="310" width="95.5" height="2" fill="url(#R89)"/><rect x="995" y="312" width="94.5" height="2" fill="url(#L90)"/><rect x="1089.5" y="312" width="95.5" height="2" fill="url(#R90)"/><rect x="995" y="314" width="94.4" height="2" fill="url(#L91)"/><rect x="1089.4" y="314" width="95.6" height="2" fill="url(#R91)"/><rect x="995" y="316" width="94.4" height="2" fill="url(#L92)"/><rect x="1089.4" y="316" width="95.6" height="2" fill="url(#R92)"/><rect x="995" y="318" width="94.4" height="2" fill="url(#L93)"/><rect x="1089.4" y="318" width="95.6" height="2" fill="url(#R93)"/><rect x="995" y="320" width="94.3" height="2" fill="url(#L94)"/><rect x="1089.3" y="320" width="95.7" height="2" fill="url(#R94)"/><rect x="995" y="322" width="94.3" height="2" fill="url(#L95)"/><rect x="1089.3" y="322" width="95.7" height="2" fill="url(#R95)"/><rect x="995" y="324" width="94.3" height="2" fill="url(#L96)"/><rect x="1089.3" y="324" width="95.7" height="2" fill="url(#R96)"/><rect x="995" y="326" width="94.2" height="2" fill="url(#L97)"/><rect x="1089.2" y="326" width="95.8" height="2" fill="url(#R97)"/><rect x="995" y="328" width="94.2" height="2" fill="url(#L98)"/><rect x="1089.2" y="328" width="95.8" height="2" fill="url(#R98)"/><rect x="995" y="330" width="94.2" height="2" fill="url(#L99)"/><rect x="1089.2" y="330" width="95.8" height="2" fill="url(#R99)"/><rect x="995" y="332" width="94.1" height="2" fill="url(#L100)"/><rect x="1089.1" y="332" width="95.9" height="2" fill="url(#R100)"/><rect x="995" y="334" width="94.1" height="2" fill="url(#L101)"/><rect x="1089.1" y="334" width="95.9" height="2" fill="url(#R101)"/><rect x="995" y="336" width="94.1" height="2" fill="url(#L102)"/><rect x="1089.1" y="336" width="95.9" height="2" fill="url(#R102)"/><rect x="995" y="338" width="94.0" height="2" fill="url(#L103)"/><rect x="1089.0" y="338" width="96.0" height="2" fill="url(#R103)"/><rect x="995" y="340" width="94.0" height="2" fill="url(#L104)"/><rect x="1089.0" y="340" width="96.0" height="2" fill="url(#R104)"/><rect x="995" y="342" width="94.0" height="2" fill="url(#L105)"/><rect x="1089.0" y="342" width="96.0" height="2" fill="url(#R105)"/><rect x="995" y="344" width="93.9" height="2" fill="url(#L106)"/><rect x="1088.9" y="344" width="96.1" height="2" fill="url(#R106)"/><rect x="995" y="346" width="93.9" height="2" fill="url(#L107)"/><rect x="1088.9" y="346" width="96.1" height="2" fill="url(#R107)"/><rect x="995" y="348" width="93.9" height="2" fill="url(#L108)"/><rect x="1088.9" y="348" width="96.1" height="2" fill="url(#R108)"/><rect x="995" y="350" width="93.8" height="2" fill="url(#L109)"/><rect x="1088.8" y="350" width="96.2" height="2" fill="url(#R109)"/><rect x="995" y="352" width="93.8" height="2" fill="url(#L110)"/><rect x="1088.8" y="352" width="96.2" height="2" fill="url(#R110)"/><rect x="995" y="354" width="93.7" height="2" fill="url(#L111)"/><rect x="1088.7" y="354" width="96.3" height="2" fill="url(#R111)"/><rect x="995" y="356" width="93.7" height="2" fill="url(#L112)"/><rect x="1088.7" y="356" width="96.3" height="2" fill="url(#R112)"/><rect x="995" y="358" width="93.7" height="2" fill="url(#L113)"/><rect x="1088.7" y="358" width="96.3" height="2" fill="url(#R113)"/><rect x="995" y="360" width="93.6" height="2" fill="url(#L114)"/><rect x="1088.6" y="360" width="96.4" height="2" fill="url(#R114)"/><rect x="995" y="362" width="93.6" height="2" fill="url(#L115)"/><rect x="1088.6" y="362" width="96.4" height="2" fill="url(#R115)"/><rect x="995" y="364" width="93.6" height="2" fill="url(#L116)"/><rect x="1088.6" y="364" width="96.4" height="2" fill="url(#R116)"/><rect x="995" y="366" width="93.5" height="2" fill="url(#L117)"/><rect x="1088.5" y="366" width="96.5" height="2" fill="url(#R117)"/><rect x="995" y="368" width="93.5" height="2" fill="url(#L118)"/><rect x="1088.5" y="368" width="96.5" height="2" fill="url(#R118)"/><rect x="995" y="370" width="93.5" height="2" fill="url(#L119)"/><rect x="1088.5" y="370" width="96.5" height="2" fill="url(#R119)"/><rect x="995" y="372" width="93.4" height="2" fill="url(#L120)"/><rect x="1088.4" y="372" width="96.6" height="2" fill="url(#R120)"/><rect x="995" y="374" width="93.4" height="2" fill="url(#L121)"/><rect x="1088.4" y="374" width="96.6" height="2" fill="url(#R121)"/><rect x="995" y="376" width="93.4" height="2" fill="url(#L122)"/><rect x="1088.4" y="376" width="96.6" height="2" fill="url(#R122)"/><rect x="995" y="378" width="93.3" height="2" fill="url(#L123)"/><rect x="1088.3" y="378" width="96.7" height="2" fill="url(#R123)"/><rect x="995" y="380" width="93.3" height="2" fill="url(#L124)"/><rect x="1088.3" y="380" width="96.7" height="2" fill="url(#R124)"/><rect x="995" y="382" width="93.3" height="2" fill="url(#L125)"/><rect x="1088.3" y="382" width="96.7" height="2" fill="url(#R125)"/><rect x="995" y="384" width="93.2" height="2" fill="url(#L126)"/><rect x="1088.2" y="384" width="96.8" height="2" fill="url(#R126)"/><rect x="995" y="386" width="93.2" height="2" fill="url(#L127)"/><rect x="1088.2" y="386" width="96.8" height="2" fill="url(#R127)"/><rect x="995" y="388" width="93.2" height="2" fill="url(#L128)"/><rect x="1088.2" y="388" width="96.8" height="2" fill="url(#R128)"/><rect x="995" y="390" width="93.1" height="2" fill="url(#L129)"/><rect x="1088.1" y="390" width="96.9" height="2" fill="url(#R129)"/><rect x="995" y="392" width="93.1" height="2" fill="url(#L130)"/><rect x="1088.1" y="392" width="96.9" height="2" fill="url(#R130)"/><rect x="995" y="394" width="93.1" height="2" fill="url(#L131)"/><rect x="1088.1" y="394" width="96.9" height="2" fill="url(#R131)"/><rect x="995" y="396" width="93.0" height="2" fill="url(#L132)"/><rect x="1088.0" y="396" width="97.0" height="2" fill="url(#R132)"/><rect x="995" y="398" width="93.0" height="2" fill="url(#L133)"/><rect x="1088.0" y="398" width="97.0" height="2" fill="url(#R133)"/><rect x="995" y="400" width="92.9" height="2" fill="url(#L134)"/><rect x="1087.9" y="400" width="97.1" height="2" fill="url(#R134)"/><rect x="995" y="402" width="92.9" height="2" fill="url(#L135)"/><rect x="1087.9" y="402" width="97.1" height="2" fill="url(#R135)"/><rect x="995" y="404" width="92.9" height="2" fill="url(#L136)"/><rect x="1087.9" y="404" width="97.1" height="2" fill="url(#R136)"/><rect x="995" y="406" width="92.8" height="2" fill="url(#L137)"/><rect x="1087.8" y="406" width="97.2" height="2" fill="url(#R137)"/><rect x="995" y="408" width="92.8" height="2" fill="url(#L138)"/><rect x="1087.8" y="408" width="97.2" height="2" fill="url(#R138)"/><rect x="995" y="410" width="92.8" height="2" fill="url(#L139)"/><rect x="1087.8" y="410" width="97.2" height="2" fill="url(#R139)"/><rect x="995" y="412" width="92.7" height="2" fill="url(#L140)"/><rect x="1087.7" y="412" width="97.3" height="2" fill="url(#R140)"/><rect x="995" y="414" width="92.7" height="2" fill="url(#L141)"/><rect x="1087.7" y="414" width="97.3" height="2" fill="url(#R141)"/><rect x="995" y="416" width="92.7" height="2" fill="url(#L142)"/><rect x="1087.7" y="416" width="97.3" height="2" fill="url(#R142)"/><rect x="995" y="418" width="92.6" height="2" fill="url(#L143)"/><rect x="1087.6" y="418" width="97.4" height="2" fill="url(#R143)"/><rect x="995" y="420" width="92.6" height="2" fill="url(#L144)"/><rect x="1087.6" y="420" width="97.4" height="2" fill="url(#R144)"/><rect x="995" y="422" width="92.6" height="2" fill="url(#L145)"/><rect x="1087.6" y="422" width="97.4" height="2" fill="url(#R145)"/><rect x="995" y="424" width="92.5" height="2" fill="url(#L146)"/><rect x="1087.5" y="424" width="97.5" height="2" fill="url(#R146)"/><rect x="995" y="426" width="92.5" height="2" fill="url(#L147)"/><rect x="1087.5" y="426" width="97.5" height="2" fill="url(#R147)"/><rect x="995" y="428" width="92.5" height="2" fill="url(#L148)"/><rect x="1087.5" y="428" width="97.5" height="2" fill="url(#R148)"/><rect x="995" y="430" width="92.4" height="2" fill="url(#L149)"/><rect x="1087.4" y="430" width="97.6" height="2" fill="url(#R149)"/><rect x="995" y="432" width="92.4" height="2" fill="url(#L150)"/><rect x="1087.4" y="432" width="97.6" height="2" fill="url(#R150)"/><rect x="995" y="434" width="92.4" height="2" fill="url(#L151)"/><rect x="1087.4" y="434" width="97.6" height="2" fill="url(#R151)"/><rect x="995" y="436" width="92.3" height="2" fill="url(#L152)"/><rect x="1087.3" y="436" width="97.7" height="2" fill="url(#R152)"/><rect x="995" y="438" width="92.3" height="2" fill="url(#L153)"/><rect x="1087.3" y="438" width="97.7" height="2" fill="url(#R153)"/><rect x="995" y="440" width="92.3" height="2" fill="url(#L154)"/><rect x="1087.3" y="440" width="97.7" height="2" fill="url(#R154)"/><rect x="995" y="442" width="92.2" height="2" fill="url(#L155)"/><rect x="1087.2" y="442" width="97.8" height="2" fill="url(#R155)"/><rect x="995" y="444" width="92.2" height="2" fill="url(#L156)"/><rect x="1087.2" y="444" width="97.8" height="2" fill="url(#R156)"/><rect x="995" y="446" width="92.2" height="2" fill="url(#L157)"/><rect x="1087.2" y="446" width="97.8" height="2" fill="url(#R157)"/><rect x="995" y="448" width="92.1" height="2" fill="url(#L158)"/><rect x="1087.1" y="448" width="97.9" height="2" fill="url(#R158)"/><rect x="995" y="450" width="92.1" height="2" fill="url(#L159)"/><rect x="1087.1" y="450" width="97.9" height="2" fill="url(#R159)"/><rect x="995" y="452" width="92.0" height="2" fill="url(#L160)"/><rect x="1087.0" y="452" width="98.0" height="2" fill="url(#R160)"/><rect x="995" y="454" width="92.0" height="2" fill="url(#L161)"/><rect x="1087.0" y="454" width="98.0" height="2" fill="url(#R161)"/><rect x="995" y="456" width="92.0" height="2" fill="url(#L162)"/><rect x="1087.0" y="456" width="98.0" height="2" fill="url(#R162)"/><rect x="995" y="458" width="91.9" height="2" fill="url(#L163)"/><rect x="1086.9" y="458" width="98.1" height="2" fill="url(#R163)"/><rect x="995" y="460" width="91.9" height="2" fill="url(#L164)"/><rect x="1086.9" y="460" width="98.1" height="2" fill="url(#R164)"/><rect x="995" y="462" width="91.9" height="2" fill="url(#L165)"/><rect x="1086.9" y="462" width="98.1" height="2" fill="url(#R165)"/><rect x="995" y="464" width="91.8" height="2" fill="url(#L166)"/><rect x="1086.8" y="464" width="98.2" height="2" fill="url(#R166)"/><rect x="995" y="466" width="91.8" height="2" fill="url(#L167)"/><rect x="1086.8" y="466" width="98.2" height="2" fill="url(#R167)"/><rect x="995" y="468" width="91.8" height="2" fill="url(#L168)"/><rect x="1086.8" y="468" width="98.2" height="2" fill="url(#R168)"/><rect x="995" y="470" width="91.7" height="2" fill="url(#L169)"/><rect x="1086.7" y="470" width="98.3" height="2" fill="url(#R169)"/><rect x="995" y="472" width="91.7" height="2" fill="url(#L170)"/><rect x="1086.7" y="472" width="98.3" height="2" fill="url(#R170)"/><rect x="995" y="474" width="91.7" height="2" fill="url(#L171)"/><rect x="1086.7" y="474" width="98.3" height="2" fill="url(#R171)"/><rect x="995" y="476" width="91.6" height="2" fill="url(#L172)"/><rect x="1086.6" y="476" width="98.4" height="2" fill="url(#R172)"/><rect x="995" y="478" width="91.6" height="2" fill="url(#L173)"/><rect x="1086.6" y="478" width="98.4" height="2" fill="url(#R173)"/><rect x="995" y="480" width="91.6" height="2" fill="url(#L174)"/><rect x="1086.6" y="480" width="98.4" height="2" fill="url(#R174)"/><rect x="995" y="482" width="91.5" height="2" fill="url(#L175)"/><rect x="1086.5" y="482" width="98.5" height="2" fill="url(#R175)"/><rect x="995" y="484" width="91.5" height="2" fill="url(#L176)"/><rect x="1086.5" y="484" width="98.5" height="2" fill="url(#R176)"/><rect x="995" y="486" width="91.5" height="2" fill="url(#L177)"/><rect x="1086.5" y="486" width="98.5" height="2" fill="url(#R177)"/><rect x="995" y="488" width="91.4" height="2" fill="url(#L178)"/><rect x="1086.4" y="488" width="98.6" height="2" fill="url(#R178)"/><rect x="995" y="490" width="91.4" height="2" fill="url(#L179)"/><rect x="1086.4" y="490" width="98.6" height="2" fill="url(#R179)"/><rect x="995" y="492" width="91.4" height="2" fill="url(#L180)"/><rect x="1086.4" y="492" width="98.6" height="2" fill="url(#R180)"/><rect x="995" y="494" width="91.3" height="2" fill="url(#L181)"/><rect x="1086.3" y="494" width="98.7" height="2" fill="url(#R181)"/><rect x="995" y="496" width="91.3" height="2" fill="url(#L182)"/><rect x="1086.3" y="496" width="98.7" height="2" fill="url(#R182)"/><rect x="995" y="498" width="91.3" height="2" fill="url(#L183)"/><rect x="1086.3" y="498" width="98.7" height="2" fill="url(#R183)"/><rect x="995" y="500" width="91.2" height="2" fill="url(#L184)"/><rect x="1086.2" y="500" width="98.8" height="2" fill="url(#R184)"/><rect x="995" y="502" width="91.2" height="2" fill="url(#L185)"/><rect x="1086.2" y="502" width="98.8" height="2" fill="url(#R185)"/><rect x="995" y="504" width="91.1" height="2" fill="url(#L186)"/><rect x="1086.1" y="504" width="98.9" height="2" fill="url(#R186)"/><rect x="995" y="506" width="91.1" height="2" fill="url(#L187)"/><rect x="1086.1" y="506" width="98.9" height="2" fill="url(#R187)"/><rect x="995" y="508" width="91.1" height="2" fill="url(#L188)"/><rect x="1086.1" y="508" width="98.9" height="2" fill="url(#R188)"/><rect x="995" y="510" width="91.0" height="2" fill="url(#L189)"/><rect x="1086.0" y="510" width="99.0" height="2" fill="url(#R189)"/><rect x="995" y="512" width="91.0" height="2" fill="url(#L190)"/><rect x="1086.0" y="512" width="99.0" height="2" fill="url(#R190)"/><rect x="995" y="514" width="91.0" height="2" fill="url(#L191)"/><rect x="1086.0" y="514" width="99.0" height="2" fill="url(#R191)"/><rect x="995" y="516" width="90.9" height="2" fill="url(#L192)"/><rect x="1085.9" y="516" width="99.1" height="2" fill="url(#R192)"/><rect x="995" y="518" width="90.9" height="2" fill="url(#L193)"/><rect x="1085.9" y="518" width="99.1" height="2" fill="url(#R193)"/><rect x="995" y="520" width="90.9" height="2" fill="url(#L194)"/><rect x="1085.9" y="520" width="99.1" height="2" fill="url(#R194)"/><rect x="995" y="522" width="90.8" height="2" fill="url(#L195)"/><rect x="1085.8" y="522" width="99.2" height="2" fill="url(#R195)"/><rect x="995" y="524" width="90.8" height="2" fill="url(#L196)"/><rect x="1085.8" y="524" width="99.2" height="2" fill="url(#R196)"/><rect x="995" y="526" width="90.8" height="2" fill="url(#L197)"/><rect x="1085.8" y="526" width="99.2" height="2" fill="url(#R197)"/><rect x="995" y="528" width="90.7" height="2" fill="url(#L198)"/><rect x="1085.7" y="528" width="99.3" height="2" fill="url(#R198)"/><rect x="995" y="530" width="90.7" height="2" fill="url(#L199)"/><rect x="1085.7" y="530" width="99.3" height="2" fill="url(#R199)"/><rect x="995" y="532" width="90.7" height="2" fill="url(#L200)"/><rect x="1085.7" y="532" width="99.3" height="2" fill="url(#R200)"/><rect x="995" y="534" width="90.6" height="2" fill="url(#L201)"/><rect x="1085.6" y="534" width="99.4" height="2" fill="url(#R201)"/><rect x="995" y="536" width="90.6" height="2" fill="url(#L202)"/><rect x="1085.6" y="536" width="99.4" height="2" fill="url(#R202)"/><rect x="995" y="538" width="90.6" height="2" fill="url(#L203)"/><rect x="1085.6" y="538" width="99.4" height="2" fill="url(#R203)"/><rect x="995" y="540" width="90.5" height="2" fill="url(#L204)"/><rect x="1085.5" y="540" width="99.5" height="2" fill="url(#R204)"/><rect x="995" y="542" width="90.5" height="2" fill="url(#L205)"/><rect x="1085.5" y="542" width="99.5" height="2" fill="url(#R205)"/><rect x="995" y="544" width="90.5" height="2" fill="url(#L206)"/><rect x="1085.5" y="544" width="99.5" height="2" fill="url(#R206)"/><rect x="995" y="546" width="90.4" height="2" fill="url(#L207)"/><rect x="1085.4" y="546" width="99.6" height="2" fill="url(#R207)"/><rect x="995" y="548" width="90.4" height="2" fill="url(#L208)"/><rect x="1085.4" y="548" width="99.6" height="2" fill="url(#R208)"/><rect x="995" y="550" width="90.3" height="2" fill="url(#L209)"/><rect x="1085.3" y="550" width="99.7" height="2" fill="url(#R209)"/><rect x="995" y="552" width="90.3" height="2" fill="url(#L210)"/><rect x="1085.3" y="552" width="99.7" height="2" fill="url(#R210)"/><rect x="995" y="554" width="90.3" height="2" fill="url(#L211)"/><rect x="1085.3" y="554" width="99.7" height="2" fill="url(#R211)"/><rect x="995" y="556" width="90.2" height="2" fill="url(#L212)"/><rect x="1085.2" y="556" width="99.8" height="2" fill="url(#R212)"/><rect x="995" y="558" width="90.2" height="2" fill="url(#L213)"/><rect x="1085.2" y="558" width="99.8" height="2" fill="url(#R213)"/><rect x="995" y="560" width="90.2" height="2" fill="url(#L214)"/><rect x="1085.2" y="560" width="99.8" height="2" fill="url(#R214)"/><rect x="995" y="562" width="90.1" height="2" fill="url(#L215)"/><rect x="1085.1" y="562" width="99.9" height="2" fill="url(#R215)"/><rect x="995" y="564" width="90.1" height="2" fill="url(#L216)"/><rect x="1085.1" y="564" width="99.9" height="2" fill="url(#R216)"/><rect x="995" y="566" width="90.1" height="2" fill="url(#L217)"/><rect x="1085.1" y="566" width="99.9" height="2" fill="url(#R217)"/><rect x="995" y="568" width="90.0" height="2" fill="url(#L218)"/><rect x="1085.0" y="568" width="100.0" height="2" fill="url(#R218)"/><rect x="995" y="570" width="90.0" height="2" fill="url(#L219)"/><rect x="1085.0" y="570" width="100.0" height="2" fill="url(#R219)"/><rect x="995" y="572" width="90.0" height="2" fill="url(#L220)"/><rect x="1085.0" y="572" width="100.0" height="2" fill="url(#R220)"/><rect x="995" y="574" width="89.9" height="2" fill="url(#L221)"/><rect x="1084.9" y="574" width="100.1" height="2" fill="url(#R221)"/><rect x="995" y="576" width="89.9" height="2" fill="url(#L222)"/><rect x="1084.9" y="576" width="100.1" height="2" fill="url(#R222)"/><rect x="995" y="578" width="89.9" height="2" fill="url(#L223)"/><rect x="1084.9" y="578" width="100.1" height="2" fill="url(#R223)"/><rect x="995" y="580" width="89.8" height="2" fill="url(#L224)"/><rect x="1084.8" y="580" width="100.2" height="2" fill="url(#R224)"/><rect x="995" y="582" width="89.8" height="2" fill="url(#L225)"/><rect x="1084.8" y="582" width="100.2" height="2" fill="url(#R225)"/><rect x="995" y="584" width="89.8" height="2" fill="url(#L226)"/><rect x="1084.8" y="584" width="100.2" height="2" fill="url(#R226)"/><rect x="995" y="586" width="89.7" height="2" fill="url(#L227)"/><rect x="1084.7" y="586" width="100.3" height="2" fill="url(#R227)"/><rect x="995" y="588" width="89.7" height="2" fill="url(#L228)"/><rect x="1084.7" y="588" width="100.3" height="2" fill="url(#R228)"/><rect x="995" y="590" width="89.7" height="2" fill="url(#L229)"/><rect x="1084.7" y="590" width="100.3" height="2" fill="url(#R229)"/><rect x="995" y="592" width="89.6" height="2" fill="url(#L230)"/><rect x="1084.6" y="592" width="100.4" height="2" fill="url(#R230)"/><rect x="995" y="594" width="89.6" height="2" fill="url(#L231)"/><rect x="1084.6" y="594" width="100.4" height="2" fill="url(#R231)"/><rect x="995" y="596" width="89.6" height="2" fill="url(#L232)"/><rect x="1084.6" y="596" width="100.4" height="2" fill="url(#R232)"/><rect x="995" y="598" width="89.5" height="2" fill="url(#L233)"/><rect x="1084.5" y="598" width="100.5" height="2" fill="url(#R233)"/><rect x="995" y="600" width="89.5" height="2" fill="url(#L234)"/><rect x="1084.5" y="600" width="100.5" height="2" fill="url(#R234)"/><rect x="995" y="602" width="89.5" height="2" fill="url(#L235)"/><rect x="1084.5" y="602" width="100.5" height="2" fill="url(#R235)"/><rect x="995" y="604" width="89.4" height="2" fill="url(#L236)"/><rect x="1084.4" y="604" width="100.6" height="2" fill="url(#R236)"/><rect x="995" y="606" width="89.4" height="2" fill="url(#L237)"/><rect x="1084.4" y="606" width="100.6" height="2" fill="url(#R237)"/><rect x="995" y="608" width="89.4" height="2" fill="url(#L238)"/><rect x="1084.4" y="608" width="100.6" height="2" fill="url(#R238)"/><rect x="995" y="610" width="89.4" height="2" fill="url(#L239)"/><rect x="1084.4" y="610" width="100.6" height="2" fill="url(#R239)"/><rect x="995" y="612" width="89.3" height="2" fill="url(#L240)"/><rect x="1084.3" y="612" width="100.7" height="2" fill="url(#R240)"/><rect x="995" y="614" width="89.3" height="2" fill="url(#L241)"/><rect x="1084.3" y="614" width="100.7" height="2" fill="url(#R241)"/><rect x="995" y="616" width="89.3" height="2" fill="url(#L242)"/><rect x="1084.3" y="616" width="100.7" height="2" fill="url(#R242)"/><rect x="995" y="618" width="89.3" height="2" fill="url(#L243)"/><rect x="1084.3" y="618" width="100.7" height="2" fill="url(#R243)"/><rect x="995" y="620" width="89.2" height="2" fill="url(#L244)"/><rect x="1084.2" y="620" width="100.8" height="2" fill="url(#R244)"/><rect x="995" y="622" width="89.2" height="2" fill="url(#L245)"/><rect x="1084.2" y="622" width="100.8" height="2" fill="url(#R245)"/><rect x="995" y="624" width="89.2" height="2" fill="url(#L246)"/><rect x="1084.2" y="624" width="100.8" height="2" fill="url(#R246)"/><rect x="995" y="626" width="89.2" height="2" fill="url(#L247)"/><rect x="1084.2" y="626" width="100.8" height="2" fill="url(#R247)"/><rect x="995" y="628" width="89.1" height="2" fill="url(#L248)"/><rect x="1084.1" y="628" width="100.9" height="2" fill="url(#R248)"/><rect x="995" y="630" width="89.1" height="2" fill="url(#L249)"/><rect x="1084.1" y="630" width="100.9" height="2" fill="url(#R249)"/><rect x="995" y="632" width="89.1" height="2" fill="url(#L250)"/><rect x="1084.1" y="632" width="100.9" height="2" fill="url(#R250)"/><rect x="995" y="634" width="89.1" height="2" fill="url(#L251)"/><rect x="1084.1" y="634" width="100.9" height="2" fill="url(#R251)"/></g></g>
   <rect x="990" y="130" width="200" height="510" fill="#b5ab8c" opacity=".17"/>
   <path d="M1023.9,139.0 C1022.2,143.7 1017.1,156.4 1014.0,167.0 C1010.9,177.6 1006.9,191.6 1005.0,202.5 C1003.1,213.4 1002.5,221.2 1002.5,232.5 C1002.5,243.8 1004.0,258.8 1005.0,270.0 C1006.0,281.2 1006.7,290.4 1008.8,300.0 C1010.8,309.6 1014.8,316.7 1017.5,327.5 C1020.2,338.3 1023.1,352.5 1025.0,365.0 C1026.9,377.5 1027.3,390.0 1028.8,402.5 C1030.2,415.0 1032.5,428.8 1033.8,440.0 C1035.0,451.2 1036.5,460.4 1036.0,470.0 C1035.5,479.6 1031.8,486.7 1031.0,497.5 C1030.2,508.3 1029.7,522.5 1031.0,535.0 C1032.3,547.5 1036.0,557.9 1038.8,572.5 C1041.5,587.1 1045.2,612.5 1047.5,622.5 C1049.8,632.5 1051.7,630.8 1052.5,632.5 L1073.8,632.5 C1074.1,628.8 1075.4,622.1 1076.0,610.0 C1076.6,597.9 1077.0,574.6 1077.5,560.0 C1078.0,545.4 1078.3,535.0 1078.8,522.5 C1079.2,510.0 1079.2,495.4 1080.0,485.0 C1080.8,474.6 1082.9,467.5 1083.8,460.0 C1084.6,452.5 1084.6,451.7 1085.0,440.0 C1085.4,428.3 1085.7,408.3 1086.0,390.0 C1086.3,371.7 1086.6,345.7 1086.7,330.0 C1086.8,314.3 1086.5,303.8 1086.7,296.0 C1086.9,288.2 1087.3,286.7 1087.8,283.0 C1088.3,279.3 1089.4,275.5 1089.7,274.0 L1089.7,274.0 C1090.0,275.5 1091.1,279.3 1091.6,283.0 C1092.1,286.7 1092.6,288.2 1092.8,296.0 C1093.0,303.8 1092.8,314.3 1092.8,330.0 C1092.8,345.7 1092.8,371.7 1092.5,390.0 C1092.2,408.3 1091.4,428.3 1091.0,440.0 C1090.6,451.7 1090.0,450.4 1090.0,460.0 C1090.0,469.6 1091.2,485.0 1091.0,497.5 C1090.8,510.0 1088.9,522.5 1088.8,535.0 C1088.6,547.5 1089.8,560.0 1090.0,572.5 C1090.2,585.0 1089.8,600.0 1090.0,610.0 C1090.2,620.0 1090.8,628.8 1091.0,632.5 L1116.0,632.5 C1116.5,628.8 1116.8,620.0 1118.8,610.0 C1120.7,600.0 1124.6,585.0 1127.5,572.5 C1130.4,560.0 1133.9,547.5 1136.0,535.0 C1138.1,522.5 1139.5,510.0 1140.0,497.5 C1140.5,485.0 1138.3,469.6 1138.8,460.0 C1139.2,450.4 1140.6,449.6 1142.5,440.0 C1144.4,430.4 1147.5,415.0 1150.0,402.5 C1152.5,390.0 1155.0,377.5 1157.5,365.0 C1160.0,352.5 1162.9,340.0 1165.0,327.5 C1167.1,315.0 1168.2,301.7 1170.0,290.0 C1171.8,278.3 1174.8,268.3 1176.0,257.5 C1177.2,246.7 1178.1,235.4 1177.5,225.0 C1176.9,214.6 1175.6,205.8 1172.5,195.0 C1169.4,184.2 1163.4,169.7 1159.0,160.0 C1154.6,150.3 1148.4,140.8 1146.3,137.0 Q1086,135.5 1023.9,139Z" fill="none" stroke="#1a2a2a" stroke-opacity=".55" stroke-width="14" filter="url(#bl)"/>
  </g>
 </svg>
 <div class="vb" style="left:76px;width:51px">Front</div>
 <div class="vb" style="left:139px;width:50px">Back</div>
 <div class="vb" style="left:202px;width:44px">Left</div>
 <div class="vb" style="left:259px;width:51px">Right</div>
</div>

<!-- BOTTOM BAR -->
<div id="bottom" class="abs">
 <div class="pill" style="left:13px;width:119.3px"><i></i><svg width="22" height="22" viewBox="0 0 22 22"><path d="M5,11.4 L9,15.4 L17,6.8" fill="none" stroke="#fff" stroke-width="1.2"/></svg>Layer DPI: 151dpi</div>
 <div class="pill" style="left:140.5px;width:102.4px"><i></i><svg width="22" height="22" viewBox="0 0 22 22"><path d="M5,11.4 L9,15.4 L17,6.8" fill="none" stroke="#fff" stroke-width="1.2"/></svg>Layers DPI ok</div>
 <div class="pill" style="left:250.3px;width:138.7px"><i></i><svg width="22" height="22" viewBox="0 0 22 22"><path d="M5,11.4 L9,15.4 L17,6.8" fill="none" stroke="#fff" stroke-width="1.2"/></svg>All templates covered</div>
 <div id="save" class="abs"><span>SAVE PRODUCT</span></div>
</div>
</body></html>
